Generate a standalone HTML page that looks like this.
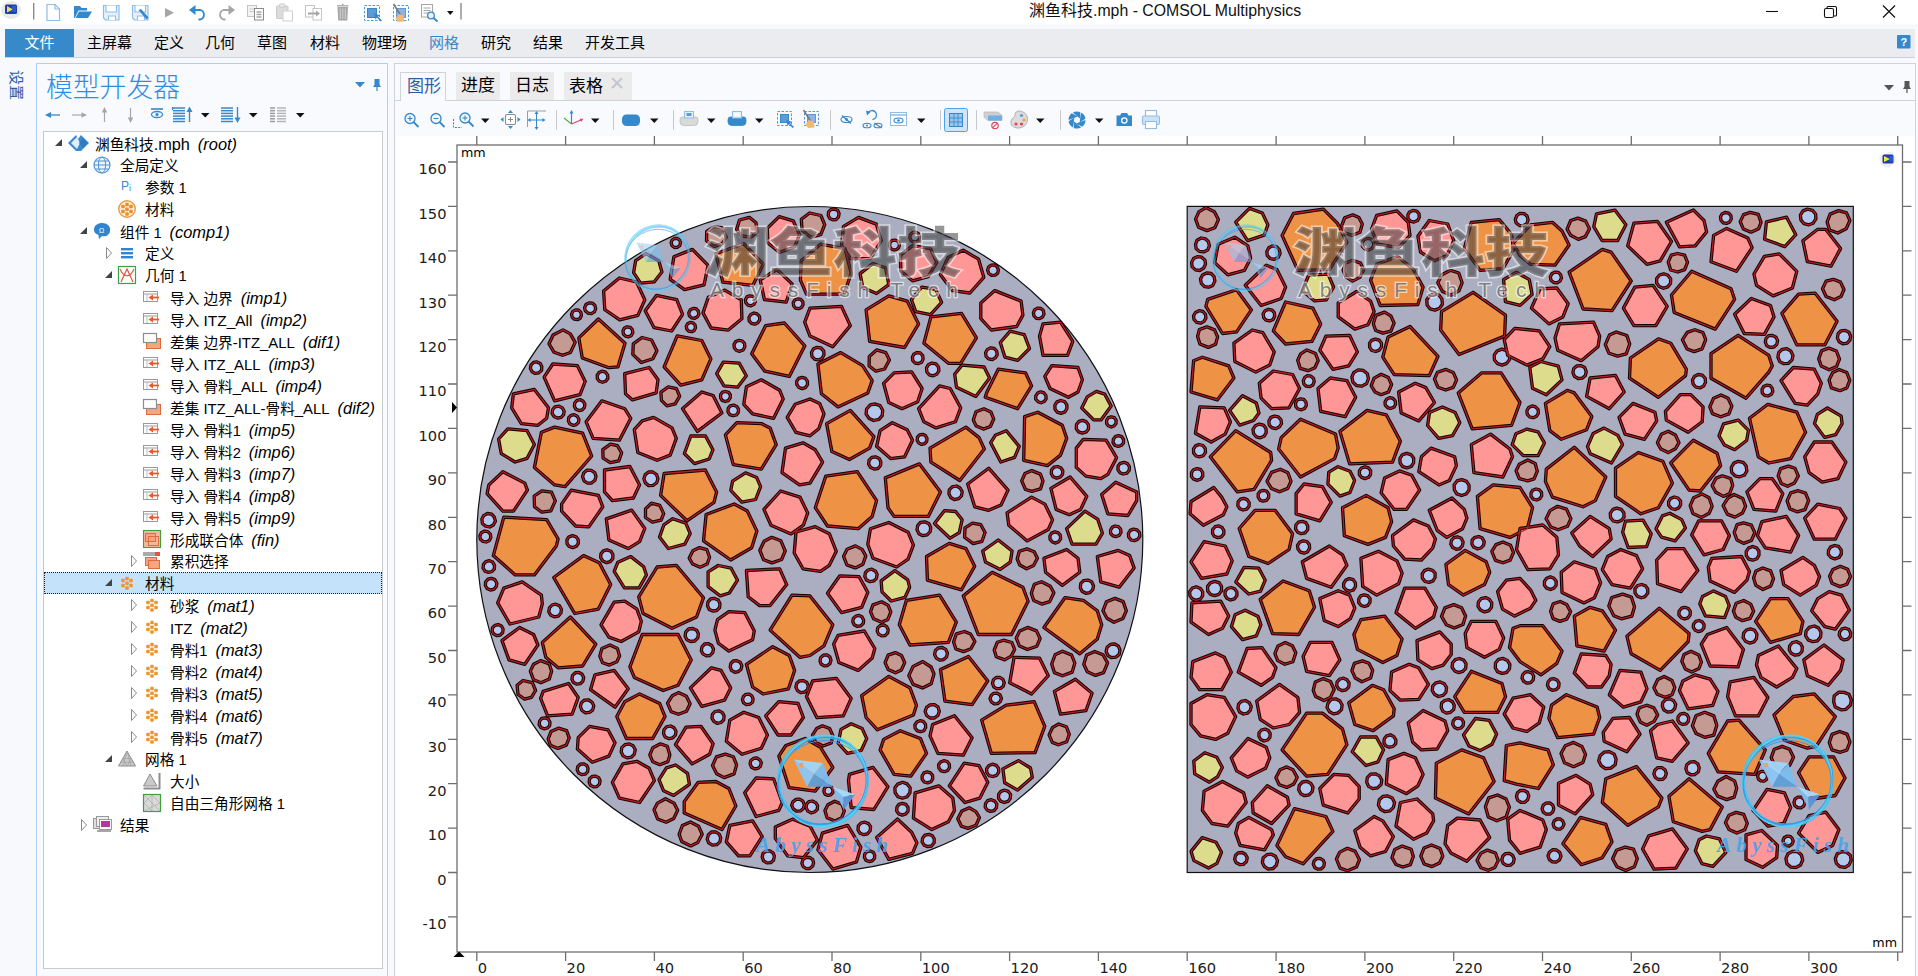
<!DOCTYPE html><html lang="zh"><head><meta charset="utf-8"><title>渊鱼科技.mph - COMSOL Multiphysics</title><style>
*{box-sizing:border-box;margin:0;padding:0}
html,body{width:1918px;height:976px;overflow:hidden;background:#f8f9fd;}
body{position:relative;font-family:"Liberation Sans","Noto Sans CJK SC",sans-serif;font-size:14.67px;color:#000;}
.abs{position:absolute}
#titlebar{position:absolute;left:0;top:0;width:1918px;height:24px;background:#fff}
#title{position:absolute;left:1029px;top:0px;font-size:16px;line-height:22px;white-space:nowrap;color:#111}
#menubar{position:absolute;left:5px;top:29px;width:1910px;height:29px;background:#ebecef;border-bottom:1px solid #cfd0d3}
#file{position:absolute;left:0;top:0;width:69px;height:28px;background:#368ac9;color:#fff;text-align:center;line-height:28px;font-size:15px}
.mi{position:absolute;top:0;line-height:27px;font-size:15px;white-space:nowrap}
#side{position:absolute;left:4px;top:66px;width:24px;height:40px;color:#2b5ea8}
#mb{position:absolute;left:36px;top:63px;width:352px;height:920px;border:1px solid #a9d1f5;background:#f9fafe}
#mbtitle{position:absolute;left:9px;top:6.500px;font-size:26.8px;line-height:34px;font-weight:300;color:#2a8ee6;white-space:nowrap;letter-spacing:0px}
#tree{position:absolute;left:6px;top:67px;width:340px;height:838px;border:1px solid #c9cacc;background:#fff}
.row{position:absolute;left:0;height:22px;line-height:21px;white-space:nowrap;font-size:14.67px}
.row i{font-style:italic;margin-left:8px;font-size:16.400px}
.lt{font-size:15.500px}.lu{font-size:14.900px}.ll{font-size:16.300px}
#sel{position:absolute;left:0px;top:440px;width:338px;height:22px;background:#c4e3fb;border:1px dotted #222}
#gp{position:absolute;left:394px;top:63px;width:1522px;height:920px;border:1px solid #cfd3da;background:#f9fafe}
.tab{position:absolute;top:8px;height:28px;background:#ebebeb;font-size:17px;line-height:28px;padding-left:5px;white-space:nowrap}
#tabline{position:absolute;left:0;top:36px;width:1520px;height:1px;background:#cfd3da}
#canvas{position:absolute;left:1px;top:72px;width:1519px;height:842px;background:#fff}
svg{position:absolute;left:0;top:0;overflow:visible}
svg text{font-family:"DejaVu Sans","Liberation Sans",sans-serif}
</style></head><body><div id="titlebar"><div id="title">渊鱼科技<span style="font-size:15.850px">.mph - COMSOL Multiphysics</span></div></div><div id="menubar"><div id="file">文件</div><div class="mi" style="left:82px;">主屏幕</div><div class="mi" style="left:149px;">定义</div><div class="mi" style="left:200px;">几何</div><div class="mi" style="left:252px;">草图</div><div class="mi" style="left:305px;">材料</div><div class="mi" style="left:357px;">物理场</div><div class="mi" style="left:424px;color:#3a87c8;">网格</div><div class="mi" style="left:476px;">研究</div><div class="mi" style="left:528px;">结果</div><div class="mi" style="left:580px;">开发工具</div></div><div id="side"><div style="position:absolute;left:-8px;top:9px;width:40px;height:20px;transform:rotate(90deg);font-size:15px;line-height:20px;white-space:nowrap;text-align:center">设置</div></div><div id="mb"><div id="mbtitle">模型开发器</div><div id="tree"><div id="sel"></div><div class="row" id="r0" style="top:1.5px;left:51px">渊鱼科技<span class="ll">.mph</span><i>(root)</i></div><div class="row" id="r1" style="top:23.5px;left:76px">全局定义</div><div class="row" id="r2" style="top:45.5px;left:101px">参数 1</div><div class="row" id="r3" style="top:67.5px;left:101px">材料</div><div class="row" id="r4" style="top:89.5px;left:76px">组件 1<i>(comp1)</i></div><div class="row" id="r5" style="top:111.5px;left:101px">定义</div><div class="row" id="r6" style="top:133.5px;left:101px">几何 1</div><div class="row" id="r7" style="top:155.5px;left:126px">导入 边界<i>(imp1)</i></div><div class="row" id="r8" style="top:177.5px;left:126px">导入 <span class="lt">ITZ_All</span><i>(imp2)</i></div><div class="row" id="r9" style="top:199.5px;left:126px">差集 边界<span class="lu">-ITZ_ALL</span><i>(dif1)</i></div><div class="row" id="r10" style="top:221.5px;left:126px">导入 <span class="lu">ITZ_ALL</span><i>(imp3)</i></div><div class="row" id="r11" style="top:243.5px;left:126px">导入 骨料<span class="lu">_ALL</span><i>(imp4)</i></div><div class="row" id="r12" style="top:265.5px;left:126px">差集 <span class="lu">ITZ_ALL-</span>骨料<span class="lu">_ALL</span><i>(dif2)</i></div><div class="row" id="r13" style="top:287.5px;left:126px">导入 骨料1<i>(imp5)</i></div><div class="row" id="r14" style="top:309.5px;left:126px">导入 骨料2<i>(imp6)</i></div><div class="row" id="r15" style="top:331.5px;left:126px">导入 骨料3<i>(imp7)</i></div><div class="row" id="r16" style="top:353.5px;left:126px">导入 骨料4<i>(imp8)</i></div><div class="row" id="r17" style="top:375.5px;left:126px">导入 骨料5<i>(imp9)</i></div><div class="row" id="r18" style="top:397.5px;left:126px">形成联合体<i>(fin)</i></div><div class="row" id="r19" style="top:419.5px;left:126px">累积选择</div><div class="row" id="r20" style="top:441.5px;left:101px">材料</div><div class="row" id="r21" style="top:463.5px;left:126px">砂浆<i>(mat1)</i></div><div class="row" id="r22" style="top:485.5px;left:126px"><span class="lu">ITZ</span><i>(mat2)</i></div><div class="row" id="r23" style="top:507.5px;left:126px">骨料1<i>(mat3)</i></div><div class="row" id="r24" style="top:529.5px;left:126px">骨料2<i>(mat4)</i></div><div class="row" id="r25" style="top:551.5px;left:126px">骨料3<i>(mat5)</i></div><div class="row" id="r26" style="top:573.5px;left:126px">骨料4<i>(mat6)</i></div><div class="row" id="r27" style="top:595.5px;left:126px">骨料5<i>(mat7)</i></div><div class="row" id="r28" style="top:617.5px;left:101px">网格 1</div><div class="row" id="r29" style="top:639.5px;left:126px">大小</div><div class="row" id="r30" style="top:661.5px;left:126px">自由三角形网格 1</div><div class="row" id="r31" style="top:683.5px;left:76px">结果</div><svg width="338" height="836"><g transform="translate(24,2)"><polygon points="0,9 8,1 13,1 21,9 13,17 8,17" fill="#3a8ad0"/><polygon points="8,1 13,1 10,5" fill="#fff"/><polygon points="3,9 9,3 12,9 9,15" fill="#fff" opacity=".85"/><polygon points="11,9 15,4 20,9 15,14" fill="#2f7cc4"/></g><polygon points="18,7 18,14 11,14" fill="#444"/><g transform="translate(49,24)"><circle cx="9" cy="9" r="8" fill="#eef5fc" stroke="#4f94d4" stroke-width="1.2"/><ellipse cx="9" cy="9" rx="3.6" ry="8" fill="none" stroke="#4f94d4" stroke-width="1"/><path d="M1 9H17M2.5 5H15.5M2.5 13H15.5" stroke="#4f94d4" stroke-width="1" fill="none"/></g><polygon points="43,29 43,36 36,36" fill="#444"/><text x="77" y="58" font-size="12" fill="#3a8ad0" style="font-family:'Liberation Sans',sans-serif">P</text><text x="85" y="59" font-size="9" fill="#3a8ad0" style="font-family:'Liberation Sans',sans-serif">i</text><g transform="translate(74,68)"><circle cx="9" cy="9" r="8.3" fill="#fdf1e2" stroke="#eb9a3c" stroke-width="1.4"/><rect x="3.2" y="4.7" width="3.600" height="3.600" rx="1" fill="#e8902c"/><rect x="7.2" y="2.7" width="3.600" height="3.600" rx="1" fill="#e8902c"/><rect x="11.2" y="4.7" width="3.600" height="3.600" rx="1" fill="#e8902c"/><rect x="3.2" y="9.7" width="3.600" height="3.600" rx="1" fill="#e8902c"/><rect x="7.2" y="7.4" width="3.600" height="3.600" rx="1" fill="#e8902c"/><rect x="11.2" y="9.7" width="3.600" height="3.600" rx="1" fill="#e8902c"/><rect x="7.2" y="12.2" width="3.600" height="3.600" rx="1" fill="#e8902c"/></g><g transform="translate(49,90)"><path d="M1 8C1 3 5 1 9 1C14 1 18 4 17 9C16.500 13 13 15 9 14L6 17L5.500 13C2.500 12 1 10 1 8Z" fill="#2f86cf"/><text x="6" y="11" font-size="7" fill="#fff" style="font-family:'Liberation Sans',sans-serif">Ω</text></g><polygon points="43,95 43,102 36,102" fill="#444"/><g transform="translate(74,112)"><rect x="3" y="4" width="12" height="2.400" fill="#2f86cf"/><rect x="3" y="8" width="12" height="2.400" fill="#2f86cf"/><rect x="3" y="12" width="12" height="2.400" fill="#2f86cf"/></g><polygon points="62.5,115.5 67.5,121 62.5,126.5" fill="#fff" stroke="#8a8a8a" stroke-width="1"/><g transform="translate(74,134)"><rect x="0.500" y="0.500" width="17" height="17" fill="#fff" stroke="#3fa03f" stroke-width="1.2"/><path d="M3 16L9 3L15 16M2 3C6 12 12 12 16 3" fill="none" stroke="#e0573a" stroke-width="1.2"/></g><polygon points="68,139 68,146 61,146" fill="#444"/><g transform="translate(99,156)"><rect x="0.500" y="3.500" width="14" height="10" fill="#fff" stroke="#9a9a9a" stroke-width="1"/><path d="M1 6H14" stroke="#9a9a9a" stroke-width="1"/><path d="M4 6V13" stroke="#bbb" stroke-width="1"/><path d="M16 9.500H8" stroke="#e8592b" stroke-width="1.800"/><polygon points="5.500,9.500 10,6.500 10,12.500" fill="#e8592b"/></g><g transform="translate(99,178)"><rect x="0.500" y="3.500" width="14" height="10" fill="#fff" stroke="#9a9a9a" stroke-width="1"/><path d="M1 6H14" stroke="#9a9a9a" stroke-width="1"/><path d="M4 6V13" stroke="#bbb" stroke-width="1"/><path d="M16 9.500H8" stroke="#e8592b" stroke-width="1.800"/><polygon points="5.500,9.500 10,6.500 10,12.500" fill="#e8592b"/></g><g transform="translate(99,200)"><rect x="3.500" y="6.500" width="14" height="10" fill="#f4a582" stroke="#e06a3c" stroke-width="1"/><rect x="0.500" y="1.500" width="13" height="9" fill="#fff" stroke="#8d8d8d" stroke-width="1.2"/></g><g transform="translate(99,222)"><rect x="0.500" y="3.500" width="14" height="10" fill="#fff" stroke="#9a9a9a" stroke-width="1"/><path d="M1 6H14" stroke="#9a9a9a" stroke-width="1"/><path d="M4 6V13" stroke="#bbb" stroke-width="1"/><path d="M16 9.500H8" stroke="#e8592b" stroke-width="1.800"/><polygon points="5.500,9.500 10,6.500 10,12.500" fill="#e8592b"/></g><g transform="translate(99,244)"><rect x="0.500" y="3.500" width="14" height="10" fill="#fff" stroke="#9a9a9a" stroke-width="1"/><path d="M1 6H14" stroke="#9a9a9a" stroke-width="1"/><path d="M4 6V13" stroke="#bbb" stroke-width="1"/><path d="M16 9.500H8" stroke="#e8592b" stroke-width="1.800"/><polygon points="5.500,9.500 10,6.500 10,12.500" fill="#e8592b"/></g><g transform="translate(99,266)"><rect x="3.500" y="6.500" width="14" height="10" fill="#f4a582" stroke="#e06a3c" stroke-width="1"/><rect x="0.500" y="1.500" width="13" height="9" fill="#fff" stroke="#8d8d8d" stroke-width="1.2"/></g><g transform="translate(99,288)"><rect x="0.500" y="3.500" width="14" height="10" fill="#fff" stroke="#9a9a9a" stroke-width="1"/><path d="M1 6H14" stroke="#9a9a9a" stroke-width="1"/><path d="M4 6V13" stroke="#bbb" stroke-width="1"/><path d="M16 9.500H8" stroke="#e8592b" stroke-width="1.800"/><polygon points="5.500,9.500 10,6.500 10,12.500" fill="#e8592b"/></g><g transform="translate(99,310)"><rect x="0.500" y="3.500" width="14" height="10" fill="#fff" stroke="#9a9a9a" stroke-width="1"/><path d="M1 6H14" stroke="#9a9a9a" stroke-width="1"/><path d="M4 6V13" stroke="#bbb" stroke-width="1"/><path d="M16 9.500H8" stroke="#e8592b" stroke-width="1.800"/><polygon points="5.500,9.500 10,6.500 10,12.500" fill="#e8592b"/></g><g transform="translate(99,332)"><rect x="0.500" y="3.500" width="14" height="10" fill="#fff" stroke="#9a9a9a" stroke-width="1"/><path d="M1 6H14" stroke="#9a9a9a" stroke-width="1"/><path d="M4 6V13" stroke="#bbb" stroke-width="1"/><path d="M16 9.500H8" stroke="#e8592b" stroke-width="1.800"/><polygon points="5.500,9.500 10,6.500 10,12.500" fill="#e8592b"/></g><g transform="translate(99,354)"><rect x="0.500" y="3.500" width="14" height="10" fill="#fff" stroke="#9a9a9a" stroke-width="1"/><path d="M1 6H14" stroke="#9a9a9a" stroke-width="1"/><path d="M4 6V13" stroke="#bbb" stroke-width="1"/><path d="M16 9.500H8" stroke="#e8592b" stroke-width="1.800"/><polygon points="5.500,9.500 10,6.500 10,12.500" fill="#e8592b"/></g><g transform="translate(99,376)"><rect x="0.500" y="3.500" width="14" height="10" fill="#fff" stroke="#9a9a9a" stroke-width="1"/><path d="M1 6H14" stroke="#9a9a9a" stroke-width="1"/><path d="M4 6V13" stroke="#bbb" stroke-width="1"/><path d="M16 9.500H8" stroke="#e8592b" stroke-width="1.800"/><polygon points="5.500,9.500 10,6.500 10,12.500" fill="#e8592b"/></g><g transform="translate(99,398)"><rect x="0.500" y="0.500" width="17" height="17" fill="#f6b79b" stroke="#3fa03f" stroke-width="1.100"/><rect x="2.500" y="3.500" width="10" height="8" fill="#f4a582" stroke="#e06a3c" stroke-width="1"/><rect x="5.500" y="6.500" width="10" height="9" fill="none" stroke="#e06a3c" stroke-width="1"/></g><g transform="translate(99,420)"><rect x="0" y="0" width="17" height="4" fill="#aaa"/><rect x="12" y="0" width="5" height="4" fill="#e0573a"/><rect x="2.500" y="5.500" width="11" height="8" fill="#f4a582" stroke="#e06a3c" stroke-width="1"/><rect x="5.500" y="8.500" width="11" height="8" fill="#f4a582" stroke="#e06a3c" stroke-width="1"/></g><polygon points="87.5,423.5 92.5,429 87.5,434.5" fill="#fff" stroke="#8a8a8a" stroke-width="1"/><g transform="translate(74,442)"><rect x="3.2" y="4.7" width="3.600" height="3.600" rx="1" fill="#eb9632"/><rect x="7.2" y="2.7" width="3.600" height="3.600" rx="1" fill="#eb9632"/><rect x="11.2" y="4.7" width="3.600" height="3.600" rx="1" fill="#eb9632"/><rect x="3.2" y="9.7" width="3.600" height="3.600" rx="1" fill="#eb9632"/><rect x="7.2" y="7.4" width="3.600" height="3.600" rx="1" fill="#eb9632"/><rect x="11.2" y="9.7" width="3.600" height="3.600" rx="1" fill="#eb9632"/><rect x="7.2" y="12.2" width="3.600" height="3.600" rx="1" fill="#eb9632"/></g><polygon points="68,447 68,454 61,454" fill="#444"/><g transform="translate(99,464)"><rect x="3.2" y="4.7" width="3.600" height="3.600" rx="1" fill="#eb9632"/><rect x="7.2" y="2.7" width="3.600" height="3.600" rx="1" fill="#eb9632"/><rect x="11.2" y="4.7" width="3.600" height="3.600" rx="1" fill="#eb9632"/><rect x="3.2" y="9.7" width="3.600" height="3.600" rx="1" fill="#eb9632"/><rect x="7.2" y="7.4" width="3.600" height="3.600" rx="1" fill="#eb9632"/><rect x="11.2" y="9.7" width="3.600" height="3.600" rx="1" fill="#eb9632"/><rect x="7.2" y="12.2" width="3.600" height="3.600" rx="1" fill="#eb9632"/></g><polygon points="87.5,467.5 92.5,473 87.5,478.5" fill="#fff" stroke="#8a8a8a" stroke-width="1"/><g transform="translate(99,486)"><rect x="3.2" y="4.7" width="3.600" height="3.600" rx="1" fill="#eb9632"/><rect x="7.2" y="2.7" width="3.600" height="3.600" rx="1" fill="#eb9632"/><rect x="11.2" y="4.7" width="3.600" height="3.600" rx="1" fill="#eb9632"/><rect x="3.2" y="9.7" width="3.600" height="3.600" rx="1" fill="#eb9632"/><rect x="7.2" y="7.4" width="3.600" height="3.600" rx="1" fill="#eb9632"/><rect x="11.2" y="9.7" width="3.600" height="3.600" rx="1" fill="#eb9632"/><rect x="7.2" y="12.2" width="3.600" height="3.600" rx="1" fill="#eb9632"/></g><polygon points="87.5,489.5 92.5,495 87.5,500.5" fill="#fff" stroke="#8a8a8a" stroke-width="1"/><g transform="translate(99,508)"><rect x="3.2" y="4.7" width="3.600" height="3.600" rx="1" fill="#eb9632"/><rect x="7.2" y="2.7" width="3.600" height="3.600" rx="1" fill="#eb9632"/><rect x="11.2" y="4.7" width="3.600" height="3.600" rx="1" fill="#eb9632"/><rect x="3.2" y="9.7" width="3.600" height="3.600" rx="1" fill="#eb9632"/><rect x="7.2" y="7.4" width="3.600" height="3.600" rx="1" fill="#eb9632"/><rect x="11.2" y="9.7" width="3.600" height="3.600" rx="1" fill="#eb9632"/><rect x="7.2" y="12.2" width="3.600" height="3.600" rx="1" fill="#eb9632"/></g><polygon points="87.5,511.5 92.5,517 87.5,522.5" fill="#fff" stroke="#8a8a8a" stroke-width="1"/><g transform="translate(99,530)"><rect x="3.2" y="4.7" width="3.600" height="3.600" rx="1" fill="#eb9632"/><rect x="7.2" y="2.7" width="3.600" height="3.600" rx="1" fill="#eb9632"/><rect x="11.2" y="4.7" width="3.600" height="3.600" rx="1" fill="#eb9632"/><rect x="3.2" y="9.7" width="3.600" height="3.600" rx="1" fill="#eb9632"/><rect x="7.2" y="7.4" width="3.600" height="3.600" rx="1" fill="#eb9632"/><rect x="11.2" y="9.7" width="3.600" height="3.600" rx="1" fill="#eb9632"/><rect x="7.2" y="12.2" width="3.600" height="3.600" rx="1" fill="#eb9632"/></g><polygon points="87.5,533.5 92.5,539 87.5,544.5" fill="#fff" stroke="#8a8a8a" stroke-width="1"/><g transform="translate(99,552)"><rect x="3.2" y="4.7" width="3.600" height="3.600" rx="1" fill="#eb9632"/><rect x="7.2" y="2.7" width="3.600" height="3.600" rx="1" fill="#eb9632"/><rect x="11.2" y="4.7" width="3.600" height="3.600" rx="1" fill="#eb9632"/><rect x="3.2" y="9.7" width="3.600" height="3.600" rx="1" fill="#eb9632"/><rect x="7.2" y="7.4" width="3.600" height="3.600" rx="1" fill="#eb9632"/><rect x="11.2" y="9.7" width="3.600" height="3.600" rx="1" fill="#eb9632"/><rect x="7.2" y="12.2" width="3.600" height="3.600" rx="1" fill="#eb9632"/></g><polygon points="87.5,555.5 92.5,561 87.5,566.5" fill="#fff" stroke="#8a8a8a" stroke-width="1"/><g transform="translate(99,574)"><rect x="3.2" y="4.7" width="3.600" height="3.600" rx="1" fill="#eb9632"/><rect x="7.2" y="2.7" width="3.600" height="3.600" rx="1" fill="#eb9632"/><rect x="11.2" y="4.7" width="3.600" height="3.600" rx="1" fill="#eb9632"/><rect x="3.2" y="9.7" width="3.600" height="3.600" rx="1" fill="#eb9632"/><rect x="7.2" y="7.4" width="3.600" height="3.600" rx="1" fill="#eb9632"/><rect x="11.2" y="9.7" width="3.600" height="3.600" rx="1" fill="#eb9632"/><rect x="7.2" y="12.2" width="3.600" height="3.600" rx="1" fill="#eb9632"/></g><polygon points="87.5,577.5 92.5,583 87.5,588.5" fill="#fff" stroke="#8a8a8a" stroke-width="1"/><g transform="translate(99,596)"><rect x="3.2" y="4.7" width="3.600" height="3.600" rx="1" fill="#eb9632"/><rect x="7.2" y="2.7" width="3.600" height="3.600" rx="1" fill="#eb9632"/><rect x="11.2" y="4.7" width="3.600" height="3.600" rx="1" fill="#eb9632"/><rect x="3.2" y="9.7" width="3.600" height="3.600" rx="1" fill="#eb9632"/><rect x="7.2" y="7.4" width="3.600" height="3.600" rx="1" fill="#eb9632"/><rect x="11.2" y="9.7" width="3.600" height="3.600" rx="1" fill="#eb9632"/><rect x="7.2" y="12.2" width="3.600" height="3.600" rx="1" fill="#eb9632"/></g><polygon points="87.5,599.5 92.5,605 87.5,610.5" fill="#fff" stroke="#8a8a8a" stroke-width="1"/><g transform="translate(74,618)"><polygon points="9,1 17.500,16 0.500,16" fill="#c9c9c9" stroke="#8e8e8e" stroke-width="1"/><path d="M4.700 8.500H13.300M2.600 12.200H15.400M9 1L5 16M9 1L13 16M4.700 8.500L9 16L13.300 8.500" stroke="#9b9b9b" stroke-width=".6" fill="none"/></g><polygon points="68,623 68,630 61,630" fill="#444"/><g transform="translate(99,640)"><polygon points="7,2 14,14 0.500,14" fill="#c9c9c9" stroke="#8e8e8e" stroke-width="1"/><path d="M16.500 1V16.500H0.500" stroke="#8e8e8e" stroke-width="2" fill="none"/></g><g transform="translate(99,662)"><rect x="0.500" y="0.500" width="17" height="17" fill="#d9d9d9" stroke="#3fa03f" stroke-width="1.200"/><path d="M1 1L17 17M1 9L9 17M9 1L17 9M1 9L9 1L9 17M1 17L17 9" stroke="#aaa" stroke-width=".7" fill="none"/></g><g transform="translate(49,684)"><rect x="0.500" y="2.500" width="12" height="10" fill="#ddd" stroke="#999"/><rect x="3.500" y="0.500" width="12" height="10" fill="#eee" stroke="#999"/><rect x="6.500" y="3.500" width="12" height="10" fill="#fff" stroke="#999"/><rect x="8" y="5" width="9" height="6" fill="#b5379c"/><path d="M4 15H18" stroke="#888" stroke-width="1.500"/></g><polygon points="37.5,687.5 42.5,693 37.5,698.5" fill="#fff" stroke="#8a8a8a" stroke-width="1"/></svg></div></div><div id="gp"><div id="tabline"></div><div class="tab" style="left:5px;width:46px;height:29px;background:#f9fafe;border:1px solid #cfd3da;border-bottom:none;color:#2b5ea8;line-height:27px;padding-left:6px">图形</div><div class="tab" style="left:61px;width:44px">进度</div><div class="tab" style="left:115px;width:44px">日志</div><div class="tab" style="left:169px;width:68px">表格<span style="color:#c3c7cf;font-size:19px;margin-left:6px;position:relative;top:-2px">✕</span></div><div id="canvas"></div></div><svg width="1918" height="976" viewBox="0 0 1918 976"><circle cx="809.8" cy="539.5" r="333.0" fill="#aaaec0" stroke="#111" stroke-width="1.200"/><rect x="1187.2" y="206.4" width="666.1" height="666.1" fill="#aaaec0" stroke="#111" stroke-width="1.200"/><g stroke="#100303" stroke-width="3.300" stroke-linejoin="round"><polygon points="680.5,242.9 679.7,245.7 677.2,247.3 674.5,247.5 672.1,245.7 671.1,242.8 672.1,240.1 674.4,238.5 677.3,238.4 679.7,240.1" fill="#b4c8ec"/><polygon points="661.9,272.0 654.1,281.9 640.6,283.1 633.6,272.7 635.6,260.7 646.0,253.6 658.8,260.9" fill="#dcdc8c"/><polygon points="692.4,249.4 708.1,265.4 704.1,284.9 684.5,289.7 670.2,279.3 673.9,256.8" fill="#ff9797"/><polygon points="644.8,299.8 637.9,315.3 619.7,319.8 604.8,309.6 603.6,291.0 619.4,278.0 636.5,282.0" fill="#ff9797"/><polygon points="682.6,314.3 671.6,331.0 654.1,327.7 645.2,310.7 656.6,295.3 676.7,299.6" fill="#ff9797"/><polygon points="741.9,318.8 728.3,330.1 711.1,328.0 703.0,312.9 708.3,297.3 724.8,290.1 741.3,299.8" fill="#ff9797"/><polygon points="586.0,304.5 588.9,302.8 592.3,303.1 594.8,305.3 595.7,308.6 594.4,311.8 591.4,313.6 587.9,313.1 585.2,310.8 584.6,307.7" fill="#b4c8ec"/><polygon points="575.7,309.9 578.7,310.2 580.9,312.4 581.4,315.5 580.1,318.3 577.5,319.7 574.4,319.2 572.2,317.2 571.5,314.3 572.8,311.4" fill="#b4c8ec"/><polygon points="696.1,308.7 698.3,311.2 698.9,314.2 697.4,316.8 694.7,318.3 691.6,317.9 689.3,315.7 688.8,312.7 690.3,309.7 693.1,308.5" fill="#b4c8ec"/><polygon points="695.0,324.8 695.5,327.7 694.3,330.4 691.6,331.7 688.7,331.2 686.8,329.1 686.3,326.2 687.6,323.8 690.2,322.4 693.0,322.8" fill="#b4c8ec"/><polygon points="632.8,332.6 631.3,335.4 628.5,336.8 625.5,336.2 623.4,334.0 623.0,330.8 624.3,328.2 627.1,326.8 630.3,327.3 632.3,329.6" fill="#b4c8ec"/><polygon points="753.9,304.4 751.0,305.9 748.0,305.2 745.9,302.9 745.4,299.7 747.0,296.9 749.7,295.8 753.0,296.4 755.0,298.5 755.3,301.8" fill="#b4c8ec"/><polygon points="798.7,308.7 795.5,308.1 793.6,305.8 793.2,302.7 794.8,300.0 797.6,298.8 800.7,299.3 802.8,301.6 803.1,304.7 801.5,307.4" fill="#b4c8ec"/><polygon points="751.5,323.3 749.2,320.8 748.9,317.5 750.8,314.4 753.9,313.0 757.0,313.9 759.5,316.4 759.8,319.9 757.8,322.8 754.8,324.2" fill="#b4c8ec"/><polygon points="734.3,347.8 734.0,344.3 735.8,341.5 739.0,340.3 742.3,341.0 744.6,343.6 744.8,347.0 743.1,350.0 739.8,351.3 736.5,350.5" fill="#b4c8ec"/><polygon points="575.2,342.4 570.4,352.5 562.5,355.3 554.1,352.3 549.0,343.8 553.1,335.0 563.0,329.9 570.3,333.9" fill="#c59a92"/><polygon points="656.9,350.7 652.9,358.7 641.3,362.5 632.8,354.4 633.3,343.9 642.0,337.5 651.6,340.0" fill="#c59a92"/><polygon points="598.4,319.0 625.0,343.2 618.0,366.8 608.9,367.7 582.3,358.0 578.8,337.9" fill="#ee9345"/><polygon points="677.2,335.8 701.8,340.5 710.9,358.9 701.8,379.9 680.7,385.2 664.1,366.8" fill="#ee9345"/><polygon points="765.7,325.6 784.4,323.0 804.8,345.8 789.3,376.4 764.8,371.2 751.7,353.7" fill="#ee9345"/><polygon points="726.3,237.1 722.5,243.4 713.9,246.6 706.5,240.7 706.7,231.4 714.2,226.7 722.6,228.0" fill="#c59a92"/><polygon points="757.4,231.9 751.1,237.1 741.9,236.0 736.6,229.4 739.5,220.0 749.4,217.3 756.0,222.7" fill="#c59a92"/><polygon points="799.6,234.9 794.5,247.0 779.5,252.4 768.0,243.0 767.2,228.4 779.2,216.6 793.2,220.8" fill="#ff9797"/><polygon points="715.8,253.8 743.8,243.6 763.4,264.3 752.9,285.3 722.8,282.2" fill="#ee9345"/><polygon points="776.9,269.5 792.1,283.9 786.2,302.2 764.4,299.6 760.2,279.8" fill="#ff9797"/><polygon points="746.3,375.7 737.6,387.2 724.0,385.9 716.7,373.6 723.3,362.1 739.2,363.1" fill="#dcdc8c"/><polygon points="533.5,362.4 536.9,361.9 540.3,363.5 541.8,366.7 541.6,370.3 538.8,372.9 535.3,373.4 532.1,371.8 530.4,368.6 530.9,365.1" fill="#b4c8ec"/><polygon points="834.5,209.0 837.7,210.4 839.1,213.5 838.5,216.9 836.2,219.5 832.9,219.8 829.7,218.4 828.2,215.1 828.6,211.9 831.1,209.3" fill="#b4c8ec"/><polygon points="824.7,224.6 820.9,234.4 810.9,237.3 802.1,230.3 801.3,219.3 809.6,213.0 820.9,215.5" fill="#c59a92"/><polygon points="881.3,240.7 870.4,258.6 850.7,258.7 841.5,245.5 843.5,226.3 858.5,217.4 876.3,224.1" fill="#ff9797"/><polygon points="898.8,247.5 896.6,249.6 893.4,249.9 890.7,248.5 889.5,245.6 890.1,242.5 892.4,240.3 895.5,240.1 898.2,241.6 899.4,244.6" fill="#b4c8ec"/><polygon points="916.7,241.8 913.7,242.0 911.0,240.5 909.8,237.5 910.5,234.5 912.8,232.6 915.9,232.2 918.6,233.8 919.7,236.7 919.0,239.7" fill="#b4c8ec"/><polygon points="936.8,262.2 928.2,276.6 912.5,280.8 900.8,271.1 900.5,255.1 912.5,245.6 930.5,248.7" fill="#ff9797"/><polygon points="983.8,277.3 969.9,293.0 952.6,290.7 940.4,274.7 948.0,257.5 963.2,250.2 978.6,259.2" fill="#ff9797"/><polygon points="987.6,270.2 988.5,267.1 991.3,265.1 994.6,264.9 997.2,266.8 998.4,269.8 997.7,273.1 995.0,275.2 991.6,275.3 988.8,273.4" fill="#b4c8ec"/><polygon points="888.8,284.6 876.5,293.5 862.8,287.6 860.1,273.6 872.8,263.6 885.5,267.7" fill="#dcdc8c"/><polygon points="941.6,302.3 930.5,314.6 915.7,311.6 911.4,299.6 921.7,287.2 935.5,289.4" fill="#dcdc8c"/><polygon points="801.2,260.8 820.5,244.2 845.0,248.6 851.2,273.1 844.2,294.1 806.5,294.1 800.4,280.1" fill="#ee9345"/><polygon points="810.0,308.1 841.5,306.4 850.3,325.6 832.8,346.7 810.0,336.1 804.7,322.1" fill="#ff9797"/><polygon points="888.8,295.9 907.2,301.1 918.6,323.9 904.6,347.5 869.6,341.4 866.1,309.9" fill="#ee9345"/><polygon points="930.9,316.9 961.5,313.4 976.4,337.9 960.7,363.3 948.4,363.3 923.9,343.2" fill="#ee9345"/><polygon points="994.8,290.6 1021.1,301.1 1022.9,315.1 1016.7,326.5 991.3,330.0 980.8,318.6 980.8,302.9" fill="#ff9797"/><polygon points="1036.4,318.3 1034.0,315.9 1033.4,312.9 1034.6,309.9 1037.5,308.1 1040.9,308.5 1043.3,310.6 1044.0,314.0 1042.5,317.0 1039.6,318.6" fill="#b4c8ec"/><polygon points="1029.5,348.5 1017.7,360.3 1004.9,357.1 1000.3,342.5 1010.2,331.2 1024.2,334.6" fill="#dcdc8c"/><polygon points="1043.0,323.9 1060.5,322.1 1072.8,341.4 1067.5,355.4 1043.0,355.4 1039.5,336.1" fill="#ff9797"/><polygon points="987.3,349.6 990.4,347.9 994.1,348.4 996.6,350.9 997.2,354.6 995.5,357.7 992.4,359.6 988.6,358.8 986.1,356.3 985.6,352.8" fill="#b4c8ec"/><polygon points="917.0,352.6 920.3,353.0 922.7,355.7 923.1,359.1 921.6,362.2 918.6,363.6 915.0,363.0 912.8,360.6 912.4,357.1 913.8,354.2" fill="#b4c8ec"/><polygon points="820.9,348.0 823.7,351.0 824.0,354.8 822.1,358.3 818.6,359.9 814.8,359.4 812.0,356.3 811.5,352.5 813.5,348.8 817.1,347.4" fill="#b4c8ec"/><polygon points="889.4,360.0 884.6,369.0 875.9,371.2 869.1,366.0 869.3,356.4 876.6,349.9 885.8,352.6" fill="#c59a92"/><polygon points="938.9,370.9 936.6,374.3 933.1,375.8 929.2,374.8 926.9,372.0 926.5,367.9 928.4,364.7 931.9,363.1 935.9,363.9 938.5,367.0" fill="#b4c8ec"/><polygon points="544.1,377.1 552.8,364.0 577.4,365.7 585.2,381.5 580.0,394.7 554.6,400.8" fill="#ff9797"/><polygon points="602.6,382.3 599.4,381.3 597.4,378.8 597.2,375.3 599.1,372.5 602.0,371.2 605.4,372.1 607.6,374.9 607.9,378.2 606.0,381.0" fill="#b4c8ec"/><polygon points="624.7,373.6 649.2,367.5 658.0,379.8 656.2,392.9 632.5,399.9 625.5,393.8" fill="#ff9797"/><polygon points="679.7,396.1 675.2,403.9 667.0,405.9 661.4,400.4 660.9,392.1 668.4,386.9 676.4,388.6" fill="#c59a92"/><polygon points="796.7,381.2 798.7,378.4 802.1,377.4 805.4,378.4 807.4,381.3 807.5,384.6 805.4,387.6 802.1,388.6 799.0,387.5 796.8,384.6" fill="#b4c8ec"/><polygon points="682.5,408.7 701.8,392.0 713.1,395.5 721.9,413.0 697.4,431.4" fill="#ff9797"/><polygon points="725.5,391.5 728.5,392.3 730.4,395.0 730.1,398.0 728.2,400.7 725.2,401.5 722.3,400.5 720.6,397.8 720.7,394.6 722.6,392.1" fill="#b4c8ec"/><polygon points="736.7,406.4 738.5,409.1 738.3,412.4 736.3,415.0 732.9,415.7 729.8,414.6 728.0,411.8 728.2,408.4 730.3,405.8 733.6,405.1" fill="#b4c8ec"/><polygon points="746.4,386.8 761.3,379.8 779.7,390.3 783.2,399.0 773.6,418.3 752.6,413.9 743.8,404.3" fill="#ff9797"/><polygon points="513.4,393.8 534.4,389.4 548.5,407.8 546.7,418.3 537.9,425.3 521.3,423.6 511.7,407.8" fill="#ff9797"/><polygon points="582.4,409.8 579.0,410.6 575.9,409.2 574.4,406.3 574.7,403.0 577.0,400.4 580.3,399.7 583.2,401.3 584.9,404.1 584.4,407.4" fill="#b4c8ec"/><polygon points="557.4,418.1 554.1,416.6 552.1,413.4 552.7,409.5 555.0,406.8 559.0,406.2 562.3,407.9 564.1,411.1 563.6,414.7 561.1,417.3" fill="#b4c8ec"/><polygon points="569.8,423.8 568.4,421.1 568.7,417.6 571.0,415.3 574.2,414.7 577.2,416.2 578.9,419.2 578.5,422.5 575.9,424.8 572.9,425.3" fill="#b4c8ec"/><polygon points="601.9,400.8 624.7,408.7 630.8,418.3 619.4,440.2 593.1,438.4 586.1,421.8" fill="#ff9797"/><polygon points="653.6,417.4 672.0,427.9 676.3,438.4 670.2,455.1 657.1,460.3 637.8,452.5 634.3,429.7 642.2,420.9" fill="#ff9797"/><polygon points="690.8,436.0 705.5,436.0 712.9,449.8 709.2,459.0 694.5,463.6 684.4,453.5" fill="#dcdc8c"/><polygon points="736.8,422.7 761.3,423.6 770.1,427.9 776.2,444.6 761.3,469.1 733.3,464.7 725.4,434.9" fill="#ee9345"/><polygon points="507.8,428.9 527.1,430.7 534.4,444.5 527.1,458.3 515.1,462.0 501.3,453.7 498.6,439.0" fill="#dcdc8c"/><polygon points="554.6,427.1 582.6,433.2 591.7,456.0 565.1,486.6 554.6,484.9 534.4,467.4 541.4,432.3" fill="#ee9345"/><polygon points="621.7,452.8 618.8,460.9 610.3,462.7 603.1,458.1 602.8,449.7 610.5,444.1 617.4,445.7" fill="#c59a92"/><polygon points="591.5,483.1 587.3,483.0 584.0,480.8 582.6,476.8 583.7,472.9 587.1,470.1 591.2,470.3 594.7,472.6 596.0,476.4 594.9,480.3" fill="#b4c8ec"/><polygon points="648.7,485.6 645.4,482.9 643.9,478.8 645.3,474.6 648.6,472.0 652.8,472.0 656.5,474.5 657.9,478.8 656.7,482.7 653.3,485.3" fill="#b4c8ec"/><polygon points="604.5,470.0 629.9,466.5 639.6,484.9 633.4,498.0 612.4,500.6 604.5,491.9" fill="#ff9797"/><polygon points="664.1,473.5 705.3,470.0 716.6,491.9 714.0,502.4 686.9,520.8 660.6,495.4" fill="#ee9345"/><polygon points="745.5,472.8 756.6,477.4 760.6,486.6 755.6,499.5 741.8,502.2 730.8,490.3 732.6,481.1" fill="#dcdc8c"/><polygon points="502.9,471.7 524.8,483.1 527.4,490.1 513.4,511.2 502.9,511.2 487.1,493.6 488.9,484.9" fill="#ff9797"/><polygon points="555.3,500.8 550.9,510.8 541.8,512.2 534.5,506.7 534.2,496.0 541.9,490.8 551.5,492.2" fill="#c59a92"/><polygon points="571.2,490.1 598.4,495.4 602.8,506.8 588.8,526.9 575.6,526.0 561.6,511.2 561.6,504.1" fill="#ff9797"/><polygon points="663.7,513.6 661.1,520.2 652.4,522.1 645.5,517.5 645.5,508.9 651.4,503.2 659.8,505.4" fill="#c59a92"/><polygon points="780.6,491.0 799.9,497.1 807.7,512.9 803.4,525.2 791.1,533.9 771.0,525.2 763.9,509.4" fill="#ff9797"/><polygon points="489.7,527.0 485.7,526.2 482.4,523.4 481.9,519.2 483.7,515.6 487.4,513.5 491.7,514.2 494.3,517.1 495.4,521.1 493.3,525.0" fill="#b4c8ec"/><polygon points="483.0,541.4 480.4,539.3 479.9,535.8 481.4,532.7 484.6,531.1 487.8,531.6 490.4,534.1 490.8,537.5 489.3,540.6 486.2,542.0" fill="#b4c8ec"/><polygon points="817.9,364.0 840.7,352.6 862.6,365.7 872.2,380.6 867.8,392.9 838.0,406.9 821.4,393.8" fill="#ee9345"/><polygon points="883.6,383.3 894.1,372.8 911.6,371.9 922.1,388.5 917.7,401.7 902.0,408.7 888.8,402.5" fill="#ff9797"/><polygon points="954.7,374.3 962.0,365.1 984.1,367.0 989.6,378.0 975.8,396.4 956.5,387.2" fill="#dcdc8c"/><polygon points="998.3,369.2 1025.5,372.8 1031.6,385.9 1017.6,408.7 985.2,397.3 986.9,392.0" fill="#ee9345"/><polygon points="1044.8,376.3 1051.8,365.7 1078.0,367.5 1082.4,379.8 1078.0,392.0 1068.4,397.3 1050.0,388.5" fill="#ff9797"/><polygon points="1045.9,395.5 1046.1,398.8 1044.2,401.5 1041.1,402.8 1038.1,401.7 1035.7,399.2 1035.8,396.0 1037.7,393.1 1040.6,391.8 1043.9,392.9" fill="#b4c8ec"/><polygon points="1066.9,408.6 1064.9,411.9 1061.0,413.4 1057.3,412.1 1055.0,409.2 1054.9,405.2 1057.0,401.9 1060.7,400.5 1064.6,401.6 1066.8,404.7" fill="#b4c8ec"/><polygon points="1096.4,391.4 1104.7,394.1 1111.2,406.1 1101.0,419.9 1093.7,419.9 1081.7,407.9 1087.2,396.9" fill="#dcdc8c"/><polygon points="1111.4,427.0 1108.3,425.8 1106.6,423.5 1106.6,420.2 1108.4,417.6 1111.3,416.8 1114.4,417.7 1116.1,420.2 1116.0,423.4 1114.2,425.8" fill="#b4c8ec"/><polygon points="1078.7,431.9 1076.3,428.7 1076.5,424.6 1078.9,421.4 1082.6,420.4 1086.1,421.6 1088.4,424.8 1088.5,428.9 1086.2,431.9 1082.4,433.1" fill="#b4c8ec"/><polygon points="1113.0,442.5 1113.4,439.3 1115.3,436.6 1118.4,435.7 1121.7,436.7 1123.5,439.5 1123.5,443.1 1121.2,445.5 1118.2,446.4 1115.0,445.5" fill="#b4c8ec"/><polygon points="1118.1,466.1 1120.3,463.3 1124.0,462.3 1127.4,463.6 1129.4,466.7 1129.2,470.3 1126.9,473.2 1123.2,474.0 1119.9,472.7 1117.9,469.7" fill="#b4c8ec"/><polygon points="1054.0,467.1 1057.4,466.5 1060.8,467.8 1062.8,470.7 1062.5,474.5 1060.1,477.2 1056.6,478.1 1053.2,476.8 1051.3,473.7 1051.5,470.0" fill="#b4c8ec"/><polygon points="875.2,404.0 880.0,405.6 882.7,410.3 882.2,415.6 878.9,419.4 873.6,420.5 869.2,418.5 866.1,414.1 866.6,409.0 870.3,404.8" fill="#b4c8ec"/><polygon points="925.4,435.6 927.0,438.3 926.7,441.4 924.7,443.7 921.7,444.4 918.9,443.1 917.2,440.4 917.5,437.2 919.6,434.9 922.7,434.3" fill="#b4c8ec"/><polygon points="880.8,461.8 880.6,465.5 877.8,468.6 874.1,469.1 870.7,467.6 868.6,464.2 869.1,460.2 871.9,457.4 875.4,456.8 879.2,458.5" fill="#b4c8ec"/><polygon points="961.5,495.8 958.7,498.6 954.3,499.6 950.8,497.5 948.9,493.8 949.3,489.9 952.2,486.9 956.5,486.0 960.1,488.0 962.2,491.7" fill="#b4c8ec"/><polygon points="927.1,534.8 922.8,535.7 919.0,533.7 917.0,529.8 917.7,525.6 920.5,522.3 924.9,521.8 928.9,523.8 930.8,527.6 930.2,531.7" fill="#b4c8ec"/><polygon points="939.6,385.9 950.2,388.5 960.7,407.8 955.4,421.8 936.1,427.9 923.9,421.8 918.6,408.7" fill="#ff9797"/><polygon points="993.7,419.0 990.4,426.5 983.4,429.1 976.2,426.1 973.3,420.0 976.0,411.7 983.9,408.8 990.9,411.9" fill="#c59a92"/><polygon points="787.2,417.4 795.1,404.3 810.0,399.0 819.6,403.4 824.0,413.9 818.8,428.8 810.0,435.8 796.0,432.3" fill="#ff9797"/><polygon points="850.3,410.4 873.9,436.7 869.6,448.1 849.4,459.5 831.9,451.6 826.6,423.6" fill="#ee9345"/><polygon points="892.3,422.7 907.2,429.7 912.5,440.2 904.6,456.8 890.6,458.6 876.6,446.3 880.1,430.6" fill="#ff9797"/><polygon points="965.9,427.1 979.1,437.6 984.3,449.0 959.8,480.5 930.9,462.1 930.0,448.1" fill="#ee9345"/><polygon points="1006.3,430.7 1019.2,446.4 1014.6,457.4 1000.8,462.0 990.7,442.7 995.3,435.3" fill="#dcdc8c"/><polygon points="1024.6,416.6 1037.8,412.2 1062.3,425.3 1066.7,438.4 1060.5,455.1 1047.4,465.6 1023.7,460.3" fill="#ee9345"/><polygon points="1083.3,439.3 1106.1,440.2 1116.6,457.7 1107.8,474.4 1100.8,478.7 1085.9,476.1 1076.3,467.4 1076.3,448.1" fill="#ff9797"/><polygon points="785.5,448.1 803.0,442.8 815.3,449.8 822.6,462.1 810.0,483.1 799.5,484.9 782.0,472.6" fill="#ff9797"/><polygon points="825.8,476.1 857.3,471.7 876.6,500.6 872.2,516.4 858.2,528.7 827.5,526.0 815.3,507.7" fill="#ee9345"/><polygon points="885.3,477.9 919.5,463.9 940.5,491.9 928.3,516.4 894.1,516.4 888.0,507.7" fill="#ee9345"/><polygon points="988.7,468.2 1008.0,490.1 1001.0,505.0 988.7,510.3 974.7,506.8 967.7,484.0" fill="#ff9797"/><polygon points="1043.0,481.1 1040.5,488.9 1031.8,491.3 1025.5,489.5 1021.7,480.8 1024.9,473.6 1031.8,470.6 1040.4,474.1" fill="#c59a92"/><polygon points="1070.2,477.0 1086.8,496.3 1080.7,509.4 1069.3,514.7 1056.1,509.4 1050.9,488.4" fill="#ff9797"/><polygon points="1115.7,482.2 1136.7,491.9 1136.7,500.6 1128.0,515.5 1107.8,513.8 1101.7,494.5" fill="#ff9797"/><polygon points="1031.6,497.1 1044.8,504.1 1052.6,519.9 1048.3,529.5 1027.2,540.9 1008.8,525.2 1007.1,512.9" fill="#ff9797"/><polygon points="944.6,510.6 955.6,511.5 962.1,519.8 959.3,532.7 950.1,538.2 934.5,523.5" fill="#dcdc8c"/><polygon points="985.1,532.5 982.0,541.3 973.2,543.6 964.6,537.2 965.0,527.8 972.5,523.1 980.8,524.7" fill="#c59a92"/><polygon points="1085.0,511.1 1097.8,519.4 1102.4,533.2 1096.0,544.2 1072.1,544.2 1066.6,528.6" fill="#dcdc8c"/><polygon points="1113.0,535.9 1110.7,533.5 1110.5,530.1 1112.2,527.3 1115.1,526.0 1118.3,526.7 1120.6,529.1 1121.0,532.5 1119.4,535.2 1116.3,536.6" fill="#b4c8ec"/><polygon points="1128.7,537.0 1128.4,533.5 1130.3,530.4 1133.5,529.1 1137.0,529.8 1139.5,532.6 1139.9,536.1 1137.9,539.2 1134.5,540.6 1131.1,540.0" fill="#b4c8ec"/><polygon points="1049.9,536.0 1051.6,533.1 1054.8,531.9 1058.3,532.9 1060.4,535.3 1060.6,538.8 1058.7,541.7 1055.6,543.1 1052.4,542.0 1050.1,539.4" fill="#b4c8ec"/><polygon points="503.8,517.1 546.7,519.7 558.1,539.0 556.3,546.0 534.4,574.9 515.2,574.9 493.3,555.6" fill="#ee9345"/><polygon points="572.4,535.6 576.0,536.8 578.1,539.6 578.4,543.2 576.3,546.2 572.9,547.6 569.2,546.5 567.1,543.7 566.9,539.9 568.8,537.0" fill="#b4c8ec"/><polygon points="606.3,518.9 631.7,510.1 644.8,528.5 639.6,541.6 628.2,548.6 608.9,539.9" fill="#ff9797"/><polygon points="672.7,518.7 685.8,523.1 690.2,533.6 684.9,544.1 668.3,548.5 659.5,537.1 663.9,524.8" fill="#dcdc8c"/><polygon points="706.1,514.5 734.2,504.0 747.3,511.0 756.9,531.1 751.7,547.8 730.7,560.0 703.5,540.8" fill="#ee9345"/><polygon points="785.2,551.0 781.6,559.5 772.0,562.9 763.6,559.8 759.8,550.3 764.1,541.2 771.7,537.3 780.9,540.8" fill="#c59a92"/><polygon points="606.6,562.7 602.8,561.0 600.7,557.7 600.9,553.9 603.4,550.9 607.0,549.9 610.9,551.2 612.9,554.5 612.8,558.6 610.2,561.6" fill="#b4c8ec"/><polygon points="485.2,571.3 483.0,568.1 483.5,564.4 485.9,561.6 489.4,560.7 492.6,562.1 494.5,565.4 494.4,568.9 492.0,571.5 488.5,572.4" fill="#b4c8ec"/><polygon points="485.3,585.5 485.6,582.0 488.0,579.1 491.4,578.3 494.8,579.6 496.8,583.0 496.4,586.4 494.0,589.1 490.5,590.1 487.1,588.5" fill="#b4c8ec"/><polygon points="549.4,607.9 552.1,605.0 555.7,604.2 559.5,605.8 561.4,609.2 560.9,613.0 558.2,616.2 554.3,616.8 550.8,615.2 548.8,612.0" fill="#b4c8ec"/><polygon points="495.0,625.4 498.2,624.6 501.4,626.0 503.1,629.0 502.7,632.5 500.2,635.1 497.0,635.7 493.8,634.1 492.1,631.2 492.5,627.8" fill="#b4c8ec"/><polygon points="714.5,598.4 718.2,600.1 720.0,603.7 719.5,607.7 716.6,610.5 712.7,611.0 709.3,609.4 707.5,605.8 707.9,602.1 710.7,598.9" fill="#b4c8ec"/><polygon points="696.6,630.2 698.4,633.8 697.8,637.9 694.7,641.0 690.6,641.5 686.9,639.8 685.1,636.2 685.7,632.1 688.6,629.0 692.8,628.5" fill="#b4c8ec"/><polygon points="713.5,648.9 712.7,652.6 710.0,655.5 706.4,655.9 703.0,653.9 701.3,650.7 702.0,646.8 704.7,644.0 708.5,643.7 711.7,645.5" fill="#b4c8ec"/><polygon points="741.1,669.2 738.4,671.6 734.9,672.3 731.5,670.4 730.2,666.9 730.9,663.5 733.3,661.0 736.9,660.7 740.2,662.2 741.9,665.7" fill="#b4c8ec"/><polygon points="580.2,683.7 576.5,684.1 573.3,682.3 571.9,679.0 572.6,675.4 575.4,672.7 579.0,672.5 582.1,674.2 583.7,677.5 582.8,681.3" fill="#b4c8ec"/><polygon points="800.6,692.6 797.5,690.7 795.9,687.1 796.8,683.2 799.6,680.8 803.5,680.6 806.9,682.5 808.3,686.0 807.5,689.9 804.4,692.1" fill="#b4c8ec"/><polygon points="743.6,702.8 742.4,699.7 743.4,696.5 745.9,694.3 749.2,694.2 751.8,695.8 753.1,698.9 752.5,702.2 749.9,704.2 746.5,704.6" fill="#b4c8ec"/><polygon points="580.4,706.5 581.4,702.7 584.5,700.1 588.7,700.0 592.2,702.3 593.8,705.9 592.6,710.1 589.4,712.4 585.1,712.8 581.8,710.3" fill="#b4c8ec"/><polygon points="709.6,557.3 707.1,564.1 700.1,567.2 692.6,564.0 689.2,558.1 692.9,550.7 699.5,547.6 706.9,549.7" fill="#c59a92"/><polygon points="630.8,556.6 643.7,566.8 646.4,575.0 639.1,587.9 624.4,587.9 614.2,571.4 617.9,562.2" fill="#dcdc8c"/><polygon points="718.2,565.5 731.1,568.2 737.5,580.2 729.3,593.0 720.1,595.8 708.1,586.6 708.1,571.9" fill="#dcdc8c"/><polygon points="583.5,555.6 599.3,562.7 610.7,584.6 598.4,609.1 574.7,613.5 553.7,577.5" fill="#ee9345"/><polygon points="657.1,567.0 676.3,565.3 703.5,597.7 696.5,617.0 672.0,628.3 643.1,613.5 638.7,596.8" fill="#ee9345"/><polygon points="746.4,570.5 779.7,568.8 786.7,584.6 770.1,605.6 759.6,605.6 748.2,596.8" fill="#ff9797"/><polygon points="522.2,581.9 541.4,595.1 542.3,603.8 538.8,617.0 509.9,624.0 497.7,602.9 503.8,588.1" fill="#ff9797"/><polygon points="614.2,602.1 624.7,601.2 636.9,609.1 641.3,621.3 638.7,631.9 621.2,641.5 608.9,637.1 601.0,624.8" fill="#ff9797"/><polygon points="728.9,611.7 744.7,612.6 754.3,631.0 752.6,639.7 728.9,651.1 718.4,643.2 714.9,630.1 717.5,619.6" fill="#ff9797"/><polygon points="519.6,627.5 533.6,634.5 537.9,645.0 524.8,664.3 509.0,659.9 502.0,640.6" fill="#ff9797"/><polygon points="570.4,617.0 595.8,644.1 582.6,666.0 558.1,667.8 545.8,657.3 542.3,642.4" fill="#ee9345"/><polygon points="619.6,656.0 616.8,661.8 609.4,665.1 602.6,662.8 599.8,656.1 601.9,648.4 610.0,644.9 617.4,648.4" fill="#c59a92"/><polygon points="642.2,634.5 678.1,634.5 691.2,659.9 678.1,685.3 663.2,690.5 634.3,677.4 629.9,666.9" fill="#ee9345"/><polygon points="772.7,646.7 789.3,655.5 794.6,670.4 788.5,688.8 763.1,694.0 752.6,687.0 746.4,664.3" fill="#ee9345"/><polygon points="551.6,671.3 549.3,679.1 541.0,682.7 533.5,679.7 530.3,671.1 533.6,664.3 540.6,660.6 549.3,663.9" fill="#c59a92"/><polygon points="711.4,667.8 721.0,670.4 730.7,687.9 724.5,700.2 701.8,706.3 690.4,687.9" fill="#ff9797"/><polygon points="594.9,674.8 614.2,670.4 628.2,688.8 615.0,707.2 590.5,689.7" fill="#ff9797"/><polygon points="535.6,690.5 531.4,697.3 524.6,699.1 518.0,694.5 517.1,685.3 523.0,680.5 532.4,682.7" fill="#c59a92"/><polygon points="543.2,691.4 568.6,683.5 578.2,697.5 572.1,714.2 547.6,715.9 540.6,698.4" fill="#ff9797"/><polygon points="690.1,703.8 686.5,711.2 678.4,714.3 671.3,711.8 667.5,703.2 672.2,695.8 678.4,692.6 686.4,696.3" fill="#c59a92"/><polygon points="796.0,532.0 815.3,526.7 829.3,533.7 836.3,551.3 829.3,565.3 820.5,571.4 803.0,568.8 794.2,553.0" fill="#ff9797"/><polygon points="870.4,528.7 888.8,522.5 908.1,532.2 913.4,545.1 908.1,559.1 896.7,567.0 873.1,558.3 867.8,544.3" fill="#ff9797"/><polygon points="865.8,555.9 862.9,564.2 855.3,567.9 846.9,565.0 843.6,556.3 847.1,549.2 855.4,545.9 862.1,549.4" fill="#c59a92"/><polygon points="949.3,543.4 965.9,548.6 974.7,566.2 961.5,589.8 927.4,580.2 926.5,556.5" fill="#ee9345"/><polygon points="998.3,540.0 1012.1,551.0 1010.3,562.1 1000.2,569.4 985.5,562.1 982.7,551.0" fill="#dcdc8c"/><polygon points="1037.4,558.3 1033.6,565.6 1026.6,568.8 1019.8,565.0 1017.2,559.0 1019.3,551.3 1026.9,548.9 1034.2,551.8" fill="#c59a92"/><polygon points="1066.7,549.5 1078.0,558.3 1079.8,572.3 1062.3,585.4 1045.6,572.3 1043.9,558.3" fill="#ff9797"/><polygon points="1118.3,550.4 1129.7,555.6 1134.1,567.9 1119.2,587.2 1100.8,581.9 1097.3,556.5" fill="#ff9797"/><polygon points="864.8,576.6 865.4,572.7 868.1,570.0 871.8,569.2 875.2,570.9 877.1,574.3 876.5,578.3 873.9,580.9 870.1,581.7 866.5,579.9" fill="#b4c8ec"/><polygon points="1080.8,583.4 1083.6,580.6 1087.9,580.1 1091.6,581.7 1093.5,585.7 1092.8,589.6 1089.8,592.6 1085.8,593.3 1082.1,591.2 1080.3,587.7" fill="#b4c8ec"/><polygon points="855.9,616.1 859.2,615.4 862.1,617.0 863.7,620.2 863.2,623.6 860.5,625.9 857.1,626.3 854.2,624.7 852.8,621.7 853.3,618.5" fill="#b4c8ec"/><polygon points="883.9,625.0 886.7,626.6 888.2,629.7 887.6,633.1 885.0,635.6 881.7,635.9 878.6,634.1 877.2,631.1 877.8,627.7 880.4,625.5" fill="#b4c8ec"/><polygon points="945.7,649.4 947.4,653.0 946.6,657.0 943.6,659.6 939.8,660.1 936.3,658.1 934.6,654.5 935.4,650.5 938.5,647.8 942.2,647.5" fill="#b4c8ec"/><polygon points="1120.0,650.0 1119.2,654.4 1115.7,657.2 1111.3,657.7 1107.9,655.5 1106.1,651.5 1107.1,647.3 1110.5,644.4 1114.7,644.0 1118.4,646.2" fill="#b4c8ec"/><polygon points="830.0,663.4 827.4,665.6 824.2,665.9 821.1,664.0 820.0,660.9 820.8,657.4 823.4,655.2 826.9,654.9 829.8,656.9 831.0,660.1" fill="#b4c8ec"/><polygon points="1000.5,688.4 996.7,688.6 993.7,686.8 992.5,683.3 993.4,679.7 996.3,677.5 999.8,677.4 1002.9,679.4 1004.2,682.7 1003.2,686.3" fill="#b4c8ec"/><polygon points="994.2,703.8 991.4,701.9 990.0,698.7 991.3,695.3 993.9,693.3 997.1,693.1 1000.1,695.0 1001.4,698.4 1000.3,701.5 997.7,703.6" fill="#b4c8ec"/><polygon points="926.7,715.5 925.1,711.5 926.6,707.3 930.0,704.9 934.4,704.6 938.1,707.2 939.3,711.4 938.0,715.3 934.5,718.0 930.1,718.0" fill="#b4c8ec"/><polygon points="894.9,570.6 907.8,579.8 909.6,587.2 905.0,597.3 891.2,601.0 882.0,591.8 881.1,580.8" fill="#dcdc8c"/><polygon points="839.8,575.8 859.1,576.7 867.8,592.4 861.7,607.3 841.5,612.6 827.5,593.3" fill="#ff9797"/><polygon points="1053.9,592.8 1049.7,601.6 1041.8,604.1 1033.7,600.6 1031.3,593.2 1034.3,584.2 1041.6,581.7 1050.3,586.2" fill="#c59a92"/><polygon points="992.2,572.3 1022.9,587.2 1028.1,601.2 1011.5,634.5 978.2,634.5 963.3,595.9" fill="#ee9345"/><polygon points="890.8,611.8 887.9,619.4 881.5,622.3 873.6,618.8 870.5,611.6 873.0,604.9 881.6,601.8 888.2,605.4" fill="#c59a92"/><polygon points="1126.3,610.8 1122.9,618.5 1114.0,622.3 1107.0,618.3 1102.9,610.8 1106.4,601.8 1115.0,598.4 1123.2,601.6" fill="#c59a92"/><polygon points="906.4,600.3 939.6,595.1 956.3,622.2 948.4,642.4 909.9,645.0 899.3,624.8" fill="#ee9345"/><polygon points="1064.9,597.7 1083.3,600.3 1097.3,610.8 1101.7,624.8 1097.3,638.9 1079.8,653.8 1043.9,627.5" fill="#ee9345"/><polygon points="792.0,595.1 810.0,595.9 832.8,624.8 824.0,645.9 810.0,655.5 799.8,657.3 770.1,630.1" fill="#ee9345"/><polygon points="974.9,641.5 970.9,648.8 963.5,651.6 955.9,649.0 953.6,642.1 956.3,633.8 964.5,631.5 970.6,634.0" fill="#c59a92"/><polygon points="1040.1,638.5 1036.9,646.2 1027.4,649.5 1019.4,646.0 1016.2,637.9 1019.7,631.0 1027.6,627.4 1036.5,630.9" fill="#c59a92"/><polygon points="1014.7,649.5 1011.2,656.1 1004.7,659.9 996.3,656.7 994.2,650.0 997.4,642.2 1003.4,640.2 1011.9,642.5" fill="#c59a92"/><polygon points="838.0,635.4 864.3,631.0 874.8,648.5 872.2,658.1 858.2,670.4 838.9,662.5 833.7,644.1" fill="#ff9797"/><polygon points="904.7,662.6 901.4,669.9 895.5,672.8 888.1,669.4 885.1,662.6 888.1,655.1 895.3,652.6 901.5,655.4" fill="#c59a92"/><polygon points="1074.8,663.0 1072.2,672.1 1062.4,675.8 1054.4,672.6 1051.7,664.0 1055.1,654.8 1062.4,651.2 1071.6,655.0" fill="#c59a92"/><polygon points="1107.6,662.9 1103.6,672.6 1095.5,675.4 1087.3,671.8 1083.8,664.2 1086.6,654.9 1094.7,651.5 1103.0,654.7" fill="#c59a92"/><polygon points="934.0,673.9 931.2,683.7 922.6,688.0 913.2,684.4 908.8,675.6 913.1,666.4 922.9,661.6 931.1,667.0" fill="#c59a92"/><polygon points="1014.1,657.3 1039.5,658.1 1048.3,675.7 1031.6,694.0 1009.7,682.7" fill="#ff9797"/><polygon points="968.5,656.4 987.8,680.9 972.1,704.6 944.9,701.1 940.5,669.5" fill="#ee9345"/><polygon points="861.7,695.6 888.8,676.4 909.9,687.7 916.5,705.3 913.4,714.9 877.4,729.8 866.1,717.5" fill="#ee9345"/><polygon points="812.6,680.9 836.3,678.3 851.2,698.4 843.3,715.9 817.0,717.7 806.5,696.7" fill="#ff9797"/><polygon points="1054.4,691.4 1075.4,679.2 1092.1,693.2 1085.9,710.7 1060.5,714.2" fill="#ff9797"/><polygon points="624.7,701.7 639.6,693.9 659.7,703.5 665.0,716.6 652.7,738.5 626.4,738.5 616.8,716.6" fill="#ee9345"/><polygon points="765.7,715.8 778.8,701.7 798.1,703.5 803.4,717.5 791.1,735.0 778.0,735.0" fill="#ff9797"/><polygon points="550.0,722.2 549.7,725.7 547.3,728.0 544.0,728.8 541.0,727.5 539.1,724.5 539.7,721.0 541.8,718.4 545.2,717.8 548.3,719.1" fill="#b4c8ec"/><polygon points="723.7,719.8 721.0,722.5 717.1,723.3 713.8,721.4 712.0,718.1 712.4,714.4 715.0,711.5 718.9,710.8 722.3,712.6 724.1,715.8" fill="#b4c8ec"/><polygon points="672.7,737.9 669.0,738.7 665.2,737.1 663.5,733.5 664.0,729.8 666.5,726.8 670.6,726.0 674.0,727.8 676.0,731.3 675.4,735.2" fill="#b4c8ec"/><polygon points="627.1,757.9 623.2,755.9 621.2,751.9 621.8,747.6 625.0,744.7 629.3,743.9 633.1,745.8 635.3,749.7 634.3,754.1 631.5,757.1" fill="#b4c8ec"/><polygon points="578.7,773.0 577.2,770.0 577.7,766.7 580.3,764.2 583.5,763.8 586.8,765.4 588.0,768.3 587.6,771.9 585.1,774.2 581.8,774.6" fill="#b4c8ec"/><polygon points="589.1,782.1 589.6,778.8 592.2,776.5 595.6,776.1 598.7,777.7 600.1,780.7 599.4,784.1 596.8,786.6 593.6,786.9 590.5,785.3" fill="#b4c8ec"/><polygon points="750.7,760.7 753.5,758.4 756.8,758.0 759.8,759.8 761.3,762.7 760.5,766.2 758.0,768.3 754.6,768.9 751.6,767.2 750.1,763.9" fill="#b4c8ec"/><polygon points="711.5,832.0 715.6,831.9 719.2,834.1 720.7,837.9 719.9,841.9 716.8,844.7 712.4,845.1 708.7,842.8 707.2,839.1 708.4,834.8" fill="#b4c8ec"/><polygon points="769.9,850.8 773.0,852.8 774.4,856.2 773.5,860.2 770.7,862.7 766.9,862.9 763.6,860.9 762.2,857.1 763.0,853.3 766.1,851.1" fill="#b4c8ec"/><polygon points="802.8,801.2 804.4,804.8 803.4,808.4 800.4,810.9 796.4,811.2 793.3,808.9 791.7,805.3 792.9,801.9 796.1,799.4 799.6,799.1" fill="#b4c8ec"/><polygon points="813.6,862.8 812.7,866.1 809.7,868.6 806.0,868.5 803.1,866.5 801.9,863.3 802.9,859.7 805.8,857.5 809.5,857.3 812.6,859.3" fill="#b4c8ec"/><polygon points="569.2,737.9 566.3,745.1 557.9,748.4 550.4,745.3 548.1,739.0 551.0,731.6 558.4,728.2 566.6,730.6" fill="#c59a92"/><polygon points="589.6,726.3 608.0,729.8 615.0,742.9 608.9,756.1 592.3,762.2 577.4,749.0 578.2,737.7" fill="#ff9797"/><polygon points="686.0,727.1 700.9,726.3 713.1,743.8 709.6,754.3 692.1,763.9 675.5,744.7" fill="#ff9797"/><polygon points="743.8,712.3 758.7,717.5 767.4,735.0 761.3,748.2 742.0,754.3 726.3,741.2 729.8,720.1" fill="#ff9797"/><polygon points="669.9,754.9 667.9,761.6 659.8,764.7 652.8,761.8 649.8,754.9 652.9,747.7 660.4,743.8 667.3,746.2" fill="#c59a92"/><polygon points="736.6,764.9 734.1,773.9 724.1,777.6 716.7,773.7 712.5,765.6 716.4,756.9 725.3,754.1 733.3,756.7" fill="#c59a92"/><polygon points="622.9,763.9 636.9,761.3 649.2,768.3 654.4,780.6 639.6,802.5 619.4,798.1 612.4,782.3" fill="#ff9797"/><polygon points="675.6,765.0 687.5,773.3 689.4,784.3 673.7,795.4 663.6,790.8 659.0,779.7 666.4,767.8" fill="#dcdc8c"/><polygon points="698.2,782.3 715.8,781.5 728.9,788.5 735.9,806.0 721.9,829.6 684.2,813.0 684.2,801.6" fill="#ee9345"/><polygon points="756.1,778.0 773.6,778.8 782.3,802.5 778.8,810.4 756.1,816.5 744.7,792.8" fill="#ff9797"/><polygon points="677.7,810.3 673.7,818.5 666.1,822.2 657.6,819.0 654.0,809.7 657.5,803.1 665.5,798.7 674.1,803.2" fill="#c59a92"/><polygon points="702.2,834.2 697.8,842.6 690.8,845.9 681.7,841.4 679.1,834.4 682.4,825.5 690.4,822.0 698.6,826.3" fill="#c59a92"/><polygon points="729.8,825.3 752.6,820.9 762.2,836.6 749.9,855.9 738.5,855.9 726.3,841.9" fill="#ff9797"/><polygon points="775.3,827.0 792.9,819.1 810.0,826.1 817.4,840.1 803.4,857.7 787.6,855.9 775.3,838.4" fill="#ff9797"/><polygon points="981.7,720.1 1006.2,705.2 1034.2,701.7 1044.8,726.3 1035.1,752.6 991.3,753.4" fill="#ee9345"/><polygon points="916.8,722.1 919.9,720.7 923.3,721.4 925.5,724.3 925.7,727.5 923.9,730.7 920.7,731.7 917.4,730.9 915.2,728.3 914.9,725.0" fill="#b4c8ec"/><polygon points="943.8,760.7 947.2,761.5 949.3,764.2 949.5,767.6 947.7,770.5 944.4,771.7 941.1,770.9 938.9,768.1 938.6,764.8 940.6,762.0" fill="#b4c8ec"/><polygon points="930.4,772.8 932.6,775.6 932.7,778.8 930.8,781.8 927.7,782.9 924.3,782.0 922.2,779.2 922.1,776.0 924.0,772.9 927.1,771.9" fill="#b4c8ec"/><polygon points="998.6,768.5 998.7,772.3 996.4,775.4 992.9,776.5 989.1,775.6 986.8,772.4 986.6,768.7 989.0,765.5 992.5,764.2 996.2,765.3" fill="#b4c8ec"/><polygon points="909.9,792.8 907.1,796.7 902.4,798.2 897.8,796.7 895.1,792.5 894.9,787.8 897.8,784.1 902.6,782.3 907.0,783.9 910.2,787.8" fill="#b4c8ec"/><polygon points="905.8,813.9 902.2,815.1 898.9,813.9 896.7,811.0 896.9,807.3 899.0,804.3 902.3,803.3 905.9,804.3 908.0,807.5 908.0,811.2" fill="#b4c8ec"/><polygon points="1004.2,802.5 1000.8,801.2 998.5,798.2 998.7,794.2 1001.0,791.3 1004.7,790.2 1008.3,791.4 1010.6,794.6 1010.2,798.5 1008.0,801.4" fill="#b4c8ec"/><polygon points="987.3,810.1 985.2,807.1 985.5,803.6 987.6,800.7 991.3,799.7 994.7,801.1 996.8,804.0 996.4,807.8 994.1,810.6 990.5,811.4" fill="#b4c8ec"/><polygon points="858.0,829.9 858.3,825.9 861.0,823.0 864.8,822.2 868.5,823.6 870.6,826.7 870.1,830.7 867.5,833.8 863.9,834.7 860.1,833.3" fill="#b4c8ec"/><polygon points="922.6,838.3 925.0,835.1 928.9,834.3 932.4,835.8 934.3,839.1 934.1,842.8 931.5,846.0 927.6,846.6 924.3,845.3 922.1,841.9" fill="#b4c8ec"/><polygon points="867.0,851.7 870.2,850.9 873.3,852.2 874.7,855.1 874.5,858.4 872.1,860.9 869.1,861.6 865.9,860.2 864.4,857.2 864.7,854.1" fill="#b4c8ec"/><polygon points="812.3,801.0 815.7,802.7 817.6,805.7 817.2,809.5 814.4,812.0 811.1,812.8 807.8,811.1 806.1,807.8 806.4,804.4 808.9,801.6" fill="#b4c8ec"/><polygon points="831.7,787.4 832.9,789.8 832.8,792.7 830.7,794.9 827.9,795.4 825.1,794.2 823.9,791.6 824.3,788.7 826.1,786.6 829.2,786.0" fill="#b4c8ec"/><polygon points="833.0,735.9 831.2,743.0 823.0,746.0 815.7,742.3 812.5,735.2 816.6,728.5 822.4,725.8 829.6,728.5" fill="#c59a92"/><polygon points="851.1,723.8 862.1,728.4 866.7,738.6 861.2,750.5 847.4,753.3 838.2,743.2 841.0,729.4" fill="#dcdc8c"/><polygon points="900.2,730.7 920.4,738.5 926.5,753.4 910.7,776.2 894.1,774.4 880.1,749.9 883.6,739.4" fill="#ee9345"/><polygon points="954.5,715.8 972.1,737.7 963.3,755.2 937.9,753.4 930.0,735.9 932.6,724.5" fill="#ff9797"/><polygon points="1069.3,734.3 1066.7,741.8 1058.3,744.8 1052.3,742.4 1049.1,734.9 1052.4,727.7 1058.7,724.0 1066.3,726.7" fill="#c59a92"/><polygon points="778.8,756.1 785.8,745.5 805.1,738.5 820.5,747.3 832.8,767.4 815.3,791.1 789.0,787.6" fill="#ee9345"/><polygon points="849.4,774.4 873.1,767.4 888.0,786.7 873.9,809.5 851.2,807.7 848.5,780.6" fill="#ff9797"/><polygon points="964.2,763.1 979.1,765.7 987.8,782.3 979.9,798.1 965.0,802.5 949.3,785.8" fill="#ff9797"/><polygon points="1018.5,760.6 1030.5,768.0 1032.3,777.2 1017.6,790.1 1004.7,782.7 1002.9,768.9" fill="#dcdc8c"/><polygon points="938.8,785.8 952.8,798.1 954.5,810.4 948.4,821.8 931.8,829.6 913.4,818.2 915.1,792.8" fill="#ff9797"/><polygon points="844.3,811.0 841.7,817.7 835.0,821.0 827.1,817.7 824.9,810.5 827.9,804.8 834.7,801.2 841.9,804.2" fill="#c59a92"/><polygon points="979.5,817.5 976.0,825.2 968.0,828.4 961.4,826.2 957.8,818.8 961.8,811.0 969.3,807.8 975.9,811.6" fill="#c59a92"/><polygon points="897.6,819.1 911.6,832.3 916.9,842.8 912.5,853.3 888.8,859.4 876.6,837.5" fill="#ff9797"/><polygon points="822.3,833.1 847.7,825.3 860.8,847.2 856.4,862.0 832.8,869.1 817.9,849.8" fill="#ff9797"/><polygon points="1218.4,219.6 1214.8,227.8 1207.0,230.6 1198.5,227.2 1195.6,219.1 1198.8,211.9 1205.9,207.6 1214.4,211.7" fill="#c59a92"/><polygon points="1249.5,208.4 1262.3,213.0 1267.9,224.9 1264.2,235.1 1247.6,240.6 1235.7,222.2" fill="#dcdc8c"/><polygon points="1197.1,240.2 1201.2,238.0 1205.4,238.8 1208.5,241.8 1209.4,245.8 1207.6,250.1 1203.6,251.9 1199.3,251.4 1196.1,248.5 1195.6,244.1" fill="#b4c8ec"/><polygon points="1197.3,256.7 1201.7,257.2 1205.0,260.2 1205.5,264.3 1203.6,268.2 1199.8,270.5 1195.5,269.9 1192.2,266.9 1191.6,262.6 1193.5,258.6" fill="#b4c8ec"/><polygon points="1211.1,273.5 1214.1,276.7 1214.9,281.1 1212.8,285.4 1208.7,287.2 1204.5,286.7 1201.3,283.3 1200.5,278.9 1202.6,275.0 1206.6,273.0" fill="#b4c8ec"/><polygon points="1279.3,249.7 1280.1,253.6 1278.2,257.5 1274.4,259.3 1270.1,258.5 1267.2,255.4 1266.8,251.5 1268.8,247.8 1272.3,245.9 1276.4,246.7" fill="#b4c8ec"/><polygon points="1205.9,318.1 1204.0,321.4 1200.5,323.2 1196.7,322.4 1194.0,319.4 1193.5,315.8 1195.5,312.5 1199.1,310.7 1202.9,311.4 1205.5,314.3" fill="#b4c8ec"/><polygon points="1273.0,319.5 1269.7,320.9 1266.0,320.2 1263.7,317.6 1263.1,313.8 1265.1,310.7 1268.4,309.3 1272.0,310.1 1274.3,312.7 1274.7,316.3" fill="#b4c8ec"/><polygon points="1414.0,222.1 1410.4,221.1 1408.0,218.5 1407.9,214.8 1409.6,211.9 1412.9,210.4 1416.6,211.1 1419.0,213.7 1419.3,217.5 1417.5,220.6" fill="#b4c8ec"/><polygon points="1364.8,249.0 1362.4,246.4 1362.2,242.6 1364.1,239.8 1367.5,238.3 1371.1,239.2 1373.4,242.1 1373.8,245.5 1371.8,248.6 1368.3,250.2" fill="#b4c8ec"/><polygon points="1427.1,304.9 1426.8,299.7 1429.6,295.7 1433.9,293.9 1438.9,295.0 1441.9,299.0 1442.4,304.3 1439.6,308.3 1434.9,310.1 1430.2,308.9" fill="#b4c8ec"/><polygon points="1369.5,343.4 1371.6,340.4 1375.4,339.1 1379.1,340.1 1381.4,343.0 1381.5,346.9 1379.3,350.1 1375.7,351.5 1371.9,350.5 1369.7,347.4" fill="#b4c8ec"/><polygon points="1497.1,351.0 1501.9,349.1 1506.7,350.6 1509.4,354.8 1509.6,359.4 1506.7,363.4 1502.1,365.1 1497.6,363.7 1494.4,360.0 1494.3,354.9" fill="#b4c8ec"/><polygon points="1234.8,237.2 1247.9,245.9 1250.6,258.2 1244.4,270.4 1227.8,274.8 1214.7,262.6 1218.2,244.2" fill="#ff9797"/><polygon points="1266.3,265.2 1276.9,269.6 1285.6,287.1 1281.2,298.5 1261.1,305.5 1245.3,285.3" fill="#ff9797"/><polygon points="1293.5,213.5 1323.3,209.1 1337.3,223.1 1346.9,242.4 1329.4,269.6 1297.9,270.4 1282.1,235.4" fill="#ee9345"/><polygon points="1362.3,224.1 1360.0,232.3 1352.0,235.4 1344.2,232.5 1341.7,225.7 1344.6,217.9 1352.8,214.8 1358.9,217.5" fill="#c59a92"/><polygon points="1376.7,215.3 1396.9,210.9 1408.2,222.3 1410.0,235.4 1398.6,247.7 1377.6,244.2 1371.5,229.3" fill="#ff9797"/><polygon points="1363.7,269.8 1359.8,277.4 1352.6,281.1 1345.8,276.9 1343.2,270.3 1345.3,263.1 1352.6,260.3 1360.6,263.1" fill="#c59a92"/><polygon points="1429.3,220.5 1447.7,224.0 1453.8,240.7 1446.8,255.6 1434.5,260.8 1420.5,252.1 1417.9,236.3" fill="#ff9797"/><polygon points="1471.3,222.3 1499.3,219.6 1511.6,234.5 1513.4,250.3 1502.9,268.7 1480.1,270.4 1464.3,248.6" fill="#ee9345"/><polygon points="1397.7,256.4 1413.5,269.6 1423.1,287.1 1417.9,304.6 1380.2,305.5 1370.6,280.1 1376.7,264.3" fill="#ee9345"/><polygon points="1308.8,275.1 1328.1,274.2 1333.6,287.0 1326.3,299.9 1314.3,300.8 1302.3,290.7" fill="#dcdc8c"/><polygon points="1462.1,282.8 1458.9,290.8 1451.1,295.2 1442.5,291.5 1437.8,282.7 1441.8,274.8 1450.4,270.3 1458.8,273.0" fill="#c59a92"/><polygon points="1207.7,299.4 1236.6,289.7 1251.4,309.9 1236.6,331.8 1222.5,333.5 1205.9,306.4" fill="#ee9345"/><polygon points="1356.6,291.5 1370.6,301.1 1374.1,311.6 1368.0,324.8 1354.8,329.1 1338.2,316.9 1338.2,302.9" fill="#ff9797"/><polygon points="1285.6,302.0 1312.8,308.1 1320.7,323.9 1311.9,341.4 1285.6,344.0 1273.3,330.9" fill="#ee9345"/><polygon points="1394.1,323.1 1390.9,331.1 1382.9,333.1 1375.7,330.5 1373.3,323.8 1375.8,315.4 1384.6,312.1 1390.8,315.8" fill="#c59a92"/><polygon points="1473.1,292.3 1505.5,315.1 1504.6,336.1 1459.1,354.5 1440.7,330.0 1441.5,311.6" fill="#ee9345"/><polygon points="1217.6,336.9 1215.6,344.2 1208.3,347.4 1199.9,344.0 1197.6,336.4 1199.3,329.6 1206.9,326.8 1214.6,329.9" fill="#c59a92"/><polygon points="1252.3,330.0 1262.8,332.6 1274.2,351.9 1269.8,365.1 1255.8,372.1 1234.8,361.5 1233.9,343.2" fill="#ff9797"/><polygon points="1325.9,336.1 1349.6,335.3 1357.4,351.9 1348.7,365.9 1332.9,369.4 1319.8,350.2" fill="#ff9797"/><polygon points="1410.0,326.5 1438.0,356.3 1429.3,375.6 1394.2,374.7 1382.8,357.2 1388.1,337.0" fill="#ee9345"/><polygon points="1318.2,360.5 1314.9,367.8 1308.0,370.7 1300.2,368.3 1297.7,360.2 1300.7,353.8 1306.9,349.9 1315.5,353.6" fill="#c59a92"/><polygon points="1527.1,216.1 1528.1,220.0 1526.7,223.8 1523.4,225.7 1519.6,225.5 1516.2,223.0 1515.3,219.4 1516.9,215.5 1519.9,213.4 1524.0,213.6" fill="#b4c8ec"/><polygon points="1530.5,224.9 1552.4,222.3 1562.0,231.0 1569.1,245.0 1555.0,265.2 1530.5,264.3 1520.0,255.6 1513.0,243.3" fill="#ee9345"/><polygon points="1503.6,279.6 1516.4,272.3 1529.3,279.6 1532.1,294.4 1520.1,305.4 1505.4,301.7" fill="#dcdc8c"/><polygon points="1557.1,282.8 1553.8,282.5 1551.0,280.2 1550.3,276.9 1551.9,273.8 1554.9,272.1 1558.3,272.4 1560.6,274.6 1561.5,278.1 1560.0,281.1" fill="#b4c8ec"/><polygon points="1589.5,228.9 1585.4,236.6 1578.3,239.4 1570.7,235.3 1567.1,229.1 1570.7,220.5 1577.9,218.1 1585.7,221.1" fill="#c59a92"/><polygon points="1596.5,213.8 1614.9,210.1 1625.9,224.8 1617.7,240.5 1602.0,240.5 1593.8,226.7" fill="#dcdc8c"/><polygon points="1633.9,223.1 1657.5,221.4 1671.5,241.5 1660.2,260.8 1647.0,264.3 1627.7,245.9" fill="#ff9797"/><polygon points="1693.4,210.0 1704.0,220.5 1706.6,231.9 1695.2,245.9 1679.4,246.8 1666.3,222.3" fill="#ff9797"/><polygon points="1725.1,212.5 1728.7,213.1 1730.9,215.6 1731.3,219.0 1729.6,221.9 1726.5,223.4 1723.1,222.8 1720.9,220.1 1720.5,216.8 1722.0,213.9" fill="#b4c8ec"/><polygon points="1761.1,222.4 1758.7,228.7 1751.0,232.2 1743.3,228.9 1740.2,221.6 1743.6,214.6 1750.3,212.4 1758.3,214.4" fill="#c59a92"/><polygon points="1766.4,221.8 1786.6,217.2 1795.8,234.7 1784.8,246.6 1764.6,239.3" fill="#dcdc8c"/><polygon points="1815.9,218.8 1813.1,223.2 1808.8,224.8 1804.0,223.7 1800.9,219.9 1800.4,215.2 1803.0,210.9 1807.5,209.1 1812.4,210.3 1815.6,214.0" fill="#b4c8ec"/><polygon points="1849.9,220.5 1846.2,228.7 1837.7,233.0 1829.6,230.0 1827.1,222.0 1830.1,214.1 1838.6,210.6 1846.5,212.9" fill="#c59a92"/><polygon points="1726.7,228.4 1747.8,238.0 1752.1,247.7 1736.4,271.3 1711.0,261.7 1713.6,235.4" fill="#ff9797"/><polygon points="1817.8,229.3 1825.7,229.3 1840.6,248.6 1831.0,266.1 1807.3,261.7 1802.9,240.7" fill="#ff9797"/><polygon points="1687.5,262.4 1684.7,269.6 1677.8,272.0 1670.7,270.0 1668.2,262.1 1671.3,255.1 1677.4,253.5 1684.6,255.2" fill="#c59a92"/><polygon points="1602.3,249.4 1611.1,252.1 1631.2,281.0 1612.0,310.7 1583.1,309.0 1569.1,272.2" fill="#ee9345"/><polygon points="1659.5,275.0 1663.7,273.8 1667.9,275.3 1670.7,279.0 1670.5,283.5 1667.7,286.9 1663.4,288.3 1659.2,286.5 1656.6,283.0 1656.7,278.6" fill="#b4c8ec"/><polygon points="1764.4,256.4 1779.3,253.8 1796.8,271.3 1792.4,288.0 1773.2,295.9 1756.5,285.3 1753.9,274.0" fill="#ff9797"/><polygon points="1844.0,289.5 1841.0,296.6 1834.3,299.8 1826.1,296.5 1822.5,288.7 1826.1,281.1 1833.4,279.3 1840.5,282.1" fill="#c59a92"/><polygon points="1540.1,288.8 1556.8,288.0 1568.2,303.7 1562.9,316.9 1548.9,323.9 1531.4,308.1" fill="#ff9797"/><polygon points="1634.8,287.1 1653.1,285.3 1667.2,306.4 1655.8,325.6 1633.9,325.6 1623.4,308.1" fill="#ff9797"/><polygon points="1691.7,271.3 1731.1,288.8 1734.6,299.4 1715.3,329.1 1674.2,312.5 1671.5,295.0" fill="#ee9345"/><polygon points="1751.3,298.5 1770.5,305.5 1774.0,316.9 1764.4,334.4 1744.2,333.5 1734.6,314.2" fill="#ff9797"/><polygon points="1798.6,294.1 1815.2,293.2 1837.1,321.3 1824.8,344.9 1796.8,344.9 1781.9,313.4" fill="#ee9345"/><polygon points="1837.4,338.1 1838.1,333.7 1841.1,330.8 1845.4,330.4 1848.9,332.2 1850.7,336.2 1849.9,340.1 1847.2,343.1 1842.8,343.8 1839.2,341.8" fill="#b4c8ec"/><polygon points="1766.0,338.5 1768.6,335.7 1772.5,335.4 1776.0,337.3 1777.6,340.6 1776.7,344.5 1773.9,347.0 1770.3,347.4 1766.9,345.8 1765.3,342.1" fill="#b4c8ec"/><polygon points="1782.3,349.3 1786.8,348.7 1790.9,351.2 1793.0,355.6 1792.0,359.9 1788.5,363.3 1783.9,363.7 1779.8,361.6 1777.9,357.0 1778.8,352.5" fill="#b4c8ec"/><polygon points="1581.1,365.6 1584.7,367.5 1586.2,371.6 1585.4,375.4 1582.1,378.2 1578.2,378.5 1574.5,376.3 1572.9,372.6 1573.8,368.5 1577.0,365.9" fill="#b4c8ec"/><polygon points="1559.4,323.9 1593.6,322.1 1599.7,336.1 1598.0,346.7 1581.3,360.7 1557.7,350.2 1555.0,337.9" fill="#ff9797"/><polygon points="1629.7,344.0 1626.3,353.8 1617.6,356.1 1609.0,353.3 1605.3,344.7 1609.4,335.1 1616.3,332.0 1626.9,335.5" fill="#c59a92"/><polygon points="1705.7,339.7 1702.1,348.9 1694.1,351.6 1687.1,349.0 1682.4,339.8 1687.2,332.4 1694.9,329.7 1702.9,332.5" fill="#c59a92"/><polygon points="1514.7,328.3 1539.3,330.9 1549.8,346.7 1542.8,358.9 1527.0,365.1 1507.7,355.4 1504.2,339.7" fill="#ff9797"/><polygon points="1658.4,338.8 1670.7,343.2 1686.4,369.4 1685.6,375.6 1658.4,397.3 1629.5,378.2 1630.4,358.0" fill="#ee9345"/><polygon points="1738.1,335.3 1768.8,355.4 1772.3,365.9 1768.8,372.1 1746.0,398.2 1711.0,378.2 1711.0,353.7" fill="#ee9345"/><polygon points="1839.5,359.2 1836.5,366.6 1829.1,369.8 1821.2,365.9 1818.7,358.9 1821.7,350.6 1828.9,348.1 1836.4,351.0" fill="#c59a92"/><polygon points="1193.6,360.7 1202.4,357.2 1228.7,365.9 1233.9,378.0 1217.3,399.9 1191.0,392.0" fill="#ee9345"/><polygon points="1273.3,371.0 1292.6,374.5 1299.6,388.5 1289.1,407.8 1271.6,408.7 1261.1,398.2 1259.3,383.3" fill="#ff9797"/><polygon points="1363.3,370.4 1367.4,373.8 1368.4,378.9 1366.6,383.5 1361.9,386.1 1356.8,385.7 1353.0,382.3 1351.9,377.1 1353.7,372.7 1358.2,369.9" fill="#b4c8ec"/><polygon points="1313.6,378.5 1314.2,381.7 1312.8,385.0 1309.9,386.6 1306.3,386.2 1303.9,384.0 1303.3,380.6 1304.8,377.4 1307.5,375.7 1311.0,376.2" fill="#b4c8ec"/><polygon points="1330.3,378.0 1346.9,380.6 1355.7,397.3 1345.2,416.6 1320.7,411.3 1318.0,388.5" fill="#ff9797"/><polygon points="1391.6,384.5 1388.5,392.0 1381.0,394.7 1375.1,392.1 1371.2,385.7 1374.1,378.1 1381.1,374.3 1388.4,377.6" fill="#c59a92"/><polygon points="1456.6,379.9 1453.3,387.4 1445.7,390.0 1437.9,387.2 1434.5,379.0 1437.5,372.2 1446.0,369.4 1453.2,372.4" fill="#c59a92"/><polygon points="1481.8,372.8 1501.1,372.8 1520.0,402.5 1511.6,425.3 1472.2,428.8 1458.2,392.9" fill="#ee9345"/><polygon points="1385.3,405.3 1385.0,402.1 1386.6,399.2 1389.7,397.6 1392.9,398.4 1395.2,400.9 1395.6,404.2 1394.2,407.0 1391.1,408.3 1387.9,407.8" fill="#b4c8ec"/><polygon points="1295.5,403.2 1297.2,400.0 1300.4,398.9 1303.7,399.4 1305.9,402.0 1306.4,405.5 1304.6,408.4 1301.4,409.8 1298.0,409.0 1295.8,406.6" fill="#b4c8ec"/><polygon points="1270.9,417.4 1274.5,416.1 1278.3,416.9 1281.0,419.8 1281.5,423.7 1279.2,427.1 1275.6,428.7 1271.8,427.6 1269.2,425.0 1268.9,421.0" fill="#b4c8ec"/><polygon points="1259.2,424.1 1263.4,425.1 1266.0,428.4 1266.2,432.7 1264.0,436.3 1260.3,437.8 1256.2,436.8 1253.5,433.5 1253.0,429.4 1255.3,425.8" fill="#b4c8ec"/><polygon points="1202.9,445.5 1205.2,448.4 1205.5,452.4 1203.3,455.6 1199.8,456.8 1196.1,456.0 1193.6,452.9 1193.5,449.0 1195.6,445.9 1199.0,444.5" fill="#b4c8ec"/><polygon points="1202.6,472.4 1202.8,476.0 1200.8,479.0 1197.4,480.3 1193.7,479.2 1191.5,476.5 1191.5,472.7 1193.5,469.7 1197.0,468.6 1200.5,469.4" fill="#b4c8ec"/><polygon points="1413.6,462.8 1411.2,466.5 1407.0,467.8 1402.8,466.7 1400.1,463.0 1399.9,458.4 1402.4,454.8 1406.6,453.4 1411.0,454.6 1413.7,458.3" fill="#b4c8ec"/><polygon points="1368.6,477.3 1365.0,478.6 1361.7,477.4 1359.4,474.6 1359.4,470.7 1361.5,468.0 1365.0,466.8 1368.6,467.9 1370.7,470.7 1370.5,474.5" fill="#b4c8ec"/><polygon points="1461.6,495.5 1456.8,493.9 1454.4,489.9 1454.1,485.0 1457.1,480.9 1461.7,479.6 1466.5,481.4 1469.1,485.4 1469.0,490.2 1466.1,494.0" fill="#b4c8ec"/><polygon points="1260.1,500.1 1258.2,497.2 1258.2,493.7 1260.4,491.1 1263.5,490.3 1266.7,491.3 1268.7,494.1 1268.6,497.5 1266.4,500.4 1263.1,501.2" fill="#b4c8ec"/><polygon points="1237.8,505.6 1238.1,501.9 1240.5,499.2 1243.9,498.4 1247.2,499.6 1249.2,502.6 1249.1,506.2 1246.7,509.1 1243.2,510.0 1239.8,508.7" fill="#b4c8ec"/><polygon points="1295.9,525.0 1298.3,522.2 1302.1,521.3 1305.8,522.6 1307.8,526.1 1307.7,529.7 1305.0,532.9 1301.2,533.7 1297.8,532.3 1295.6,529.0" fill="#b4c8ec"/><polygon points="1215.1,526.7 1218.8,525.9 1222.1,527.5 1223.9,530.6 1223.7,534.1 1221.2,536.8 1217.7,537.6 1214.2,536.3 1212.5,533.2 1212.7,529.5" fill="#b4c8ec"/><polygon points="1457.5,536.8 1461.2,538.3 1463.1,541.9 1462.5,545.5 1460.0,548.6 1456.3,549.3 1452.8,547.6 1450.8,544.2 1451.4,540.5 1453.8,537.7" fill="#b4c8ec"/><polygon points="1482.2,538.1 1484.2,541.6 1483.6,545.1 1481.0,548.0 1477.3,548.8 1473.7,547.1 1471.9,544.0 1472.2,540.0 1475.0,537.3 1478.8,536.6" fill="#b4c8ec"/><polygon points="1415.3,383.3 1425.8,387.6 1434.5,402.5 1418.8,420.9 1401.2,413.0 1398.6,392.0" fill="#ff9797"/><polygon points="1242.5,395.7 1256.3,403.0 1259.0,413.1 1253.5,420.5 1239.7,425.1 1229.6,410.4" fill="#dcdc8c"/><polygon points="1442.3,407.1 1455.2,412.6 1459.8,422.7 1452.5,435.6 1438.7,438.3 1427.6,425.5 1429.5,412.6" fill="#dcdc8c"/><polygon points="1199.8,406.9 1224.3,407.8 1230.4,421.8 1225.2,434.1 1211.2,442.0 1195.4,433.2" fill="#ff9797"/><polygon points="1300.5,419.2 1335.5,434.1 1338.2,448.1 1334.7,458.6 1300.5,477.0 1278.6,449.0 1281.2,437.6" fill="#ee9345"/><polygon points="1367.1,410.4 1386.3,414.8 1400.4,441.1 1392.5,462.1 1349.6,463.9 1339.9,431.4" fill="#ee9345"/><polygon points="1235.7,430.6 1270.7,452.5 1271.6,460.3 1254.1,489.3 1237.4,491.9 1210.3,456.8" fill="#ee9345"/><polygon points="1490.6,434.1 1509.9,449.0 1512.5,456.8 1502.9,477.0 1473.9,472.6 1471.3,444.6" fill="#ff9797"/><polygon points="1431.0,448.1 1454.7,456.8 1456.4,465.6 1449.4,480.5 1438.9,484.9 1418.8,471.7 1421.4,456.8" fill="#ff9797"/><polygon points="1291.0,481.3 1287.8,488.4 1279.5,491.8 1271.4,488.4 1267.0,481.3 1271.5,472.4 1280.3,469.2 1287.9,472.8" fill="#c59a92"/><polygon points="1338.0,466.7 1350.0,471.3 1354.6,480.5 1350.0,492.5 1339.9,496.1 1327.9,484.2 1328.8,472.2" fill="#dcdc8c"/><polygon points="1399.5,470.9 1411.8,475.2 1419.6,490.1 1406.5,509.4 1394.2,509.4 1381.1,492.8 1384.6,477.9" fill="#ff9797"/><polygon points="1304.0,484.0 1322.4,486.6 1331.2,502.4 1319.8,520.8 1296.1,513.8 1296.1,493.6" fill="#ff9797"/><polygon points="1213.8,487.5 1221.7,497.1 1226.9,506.8 1223.4,514.7 1203.3,525.2 1190.1,513.8 1191.0,501.5" fill="#ff9797"/><polygon points="1366.2,495.4 1388.1,507.7 1391.6,521.7 1385.5,537.4 1368.0,544.4 1344.3,535.7 1342.5,507.7" fill="#ee9345"/><polygon points="1452.0,498.0 1464.3,509.4 1466.9,518.2 1462.6,528.7 1446.8,537.4 1437.2,530.4 1429.3,510.3" fill="#ff9797"/><polygon points="1493.2,484.9 1520.0,487.5 1532.6,507.7 1527.4,528.7 1509.9,537.4 1480.1,528.7 1477.4,496.3" fill="#ee9345"/><polygon points="1529.8,367.1 1540.8,361.5 1558.3,366.1 1562.0,379.9 1546.3,394.7 1532.5,388.2" fill="#dcdc8c"/><polygon points="1781.0,380.6 1793.3,367.5 1814.3,369.2 1821.3,383.3 1817.8,393.8 1807.3,405.2 1795.1,403.4" fill="#ff9797"/><polygon points="1849.8,380.3 1846.8,388.0 1840.0,390.7 1831.4,387.9 1829.0,380.1 1832.7,372.5 1839.1,369.5 1846.8,372.5" fill="#c59a92"/><polygon points="1705.5,382.5 1703.6,386.1 1700.0,387.9 1695.8,387.0 1693.2,384.2 1692.5,380.0 1694.4,376.4 1698.2,374.5 1702.2,375.2 1705.2,378.3" fill="#b4c8ec"/><polygon points="1771.1,394.6 1767.9,396.0 1764.7,395.4 1762.3,393.1 1762.0,389.5 1763.6,386.6 1766.7,385.2 1770.2,385.7 1772.3,388.4 1772.8,391.7" fill="#b4c8ec"/><polygon points="1533.3,417.7 1529.7,417.0 1527.2,414.2 1526.9,410.7 1528.7,407.5 1532.1,405.9 1535.4,406.8 1538.0,409.4 1538.4,413.2 1536.4,416.3" fill="#b4c8ec"/><polygon points="1735.1,475.9 1731.7,472.4 1731.3,467.5 1733.9,463.1 1738.3,461.3 1743.1,462.3 1746.1,465.9 1746.9,470.9 1744.2,475.3 1739.5,476.8" fill="#b4c8ec"/><polygon points="1531.1,496.7 1531.0,493.1 1532.7,490.2 1536.0,489.0 1539.3,489.9 1541.5,492.4 1541.7,495.9 1539.7,498.8 1536.7,500.0 1533.3,499.1" fill="#b4c8ec"/><polygon points="1668.6,501.7 1670.6,498.5 1674.3,497.0 1677.9,498.0 1680.6,501.1 1680.6,504.9 1678.6,508.0 1675.1,509.5 1671.4,508.5 1668.7,505.4" fill="#b4c8ec"/><polygon points="1613.0,509.4 1616.8,508.1 1621.2,509.3 1623.8,512.7 1624.1,517.0 1621.4,520.5 1617.5,521.9 1613.3,521.0 1610.5,517.5 1610.3,513.1" fill="#b4c8ec"/><polygon points="1590.1,378.0 1615.5,375.4 1624.2,392.0 1609.3,408.7 1586.6,396.4" fill="#ff9797"/><polygon points="1567.3,390.3 1574.3,392.9 1591.8,416.6 1586.6,429.7 1561.2,439.3 1549.8,430.6 1545.4,403.4" fill="#ee9345"/><polygon points="1633.0,403.4 1654.9,412.2 1656.7,420.9 1644.4,439.3 1625.1,434.1 1619.0,417.4" fill="#ff9797"/><polygon points="1680.3,394.7 1690.8,394.7 1703.1,406.9 1702.2,421.8 1688.2,432.3 1666.3,420.1 1665.4,411.3" fill="#ff9797"/><polygon points="1731.9,406.2 1728.9,413.9 1720.7,416.8 1712.5,413.6 1709.8,406.9 1713.6,398.2 1721.0,395.0 1728.1,398.3" fill="#c59a92"/><polygon points="1738.3,420.2 1748.5,430.3 1746.6,440.5 1734.7,449.7 1724.5,445.1 1719.0,435.9 1723.6,423.9" fill="#dcdc8c"/><polygon points="1767.9,404.3 1796.8,412.2 1805.6,432.3 1790.7,458.6 1768.8,463.0 1758.3,456.8 1749.5,418.3" fill="#ee9345"/><polygon points="1827.4,408.0 1841.2,416.2 1842.1,423.6 1835.7,434.6 1824.6,437.4 1814.5,423.6 1817.3,414.4" fill="#dcdc8c"/><polygon points="1526.9,429.1 1538.0,431.8 1544.4,442.9 1538.0,455.7 1523.3,455.7 1512.2,444.7 1515.9,433.7" fill="#dcdc8c"/><polygon points="1604.1,428.1 1617.9,435.4 1622.5,444.6 1611.5,463.0 1590.3,453.8 1587.5,446.5 1593.1,433.6" fill="#dcdc8c"/><polygon points="1679.0,442.6 1675.4,448.8 1668.2,452.6 1660.9,449.1 1657.4,442.7 1661.4,434.3 1668.3,431.2 1675.4,435.0" fill="#c59a92"/><polygon points="1693.4,440.2 1717.1,453.3 1720.6,465.6 1700.4,491.0 1689.1,490.1 1670.7,463.0" fill="#ee9345"/><polygon points="1814.3,442.0 1831.8,442.0 1845.9,462.1 1838.0,478.7 1822.2,482.2 1809.1,472.6 1804.7,456.8" fill="#ff9797"/><polygon points="1537.3,471.2 1534.1,478.9 1527.6,480.8 1519.3,478.7 1516.1,470.8 1519.3,464.2 1527.8,460.0 1535.2,463.5" fill="#c59a92"/><polygon points="1574.3,447.2 1605.8,477.0 1595.3,500.6 1583.1,506.8 1552.4,497.1 1545.4,481.4 1546.3,469.1" fill="#ee9345"/><polygon points="1638.3,452.5 1662.8,461.2 1672.4,483.1 1658.4,507.7 1640.9,513.8 1615.5,496.3 1615.5,468.2" fill="#ee9345"/><polygon points="1798.3,475.9 1794.4,483.0 1787.6,486.3 1781.2,483.4 1778.2,475.8 1780.6,468.6 1788.5,466.1 1794.9,468.2" fill="#c59a92"/><polygon points="1732.7,485.2 1729.7,493.5 1723.3,496.4 1715.8,492.3 1712.2,485.6 1716.1,478.1 1722.3,475.8 1730.7,478.5" fill="#c59a92"/><polygon points="1712.1,506.3 1709.1,513.3 1701.6,517.4 1692.9,513.4 1690.2,505.6 1693.7,497.7 1701.8,493.9 1709.1,497.8" fill="#c59a92"/><polygon points="1745.6,506.2 1742.5,513.0 1734.9,517.1 1727.3,514.1 1723.1,505.6 1727.9,498.2 1734.1,494.5 1742.8,498.5" fill="#c59a92"/><polygon points="1808.6,500.7 1805.1,509.6 1797.1,511.8 1789.9,508.9 1787.1,500.9 1790.7,492.9 1798.3,490.7 1805.5,493.1" fill="#c59a92"/><polygon points="1570.9,518.7 1567.5,526.3 1558.1,529.8 1550.8,527.0 1546.1,518.8 1550.0,510.6 1557.6,506.3 1566.5,509.1" fill="#c59a92"/><polygon points="1754.8,532.6 1751.4,540.5 1743.6,543.4 1737.0,540.0 1734.2,532.5 1737.0,524.7 1743.5,522.8 1751.4,525.2" fill="#c59a92"/><polygon points="1760.0,478.7 1772.3,478.7 1782.8,493.6 1775.8,511.2 1753.9,509.4 1746.9,491.9" fill="#ff9797"/><polygon points="1817.8,504.1 1839.7,508.5 1845.9,518.2 1835.3,539.2 1814.3,539.2 1804.7,518.2" fill="#ff9797"/><polygon points="1669.8,513.2 1681.7,519.6 1685.4,527.9 1675.3,540.8 1661.5,537.1 1656.0,528.8 1662.4,515.9" fill="#dcdc8c"/><polygon points="1255.0,510.3 1275.1,510.3 1292.6,533.7 1289.1,549.5 1268.1,563.5 1248.8,556.5 1239.2,528.5" fill="#ee9345"/><polygon points="1413.5,519.9 1428.4,526.0 1435.4,539.0 1432.8,547.8 1421.4,560.0 1404.7,559.1 1393.4,546.0 1392.5,535.5" fill="#ff9797"/><polygon points="1513.5,552.5 1510.2,560.1 1502.9,562.8 1495.5,560.4 1491.8,551.4 1496.0,544.6 1502.9,542.0 1510.6,545.3" fill="#c59a92"/><polygon points="1204.1,541.6 1225.2,546.0 1232.2,560.9 1226.9,574.0 1201.5,578.4 1191.0,561.8" fill="#ff9797"/><polygon points="1329.4,546.0 1342.5,554.8 1346.9,565.3 1331.2,587.2 1306.6,578.4 1302.3,561.8" fill="#ff9797"/><polygon points="1378.5,551.3 1396.9,560.9 1402.1,573.2 1398.6,583.7 1376.7,595.1 1362.7,586.3 1360.9,558.3" fill="#ff9797"/><polygon points="1465.2,550.4 1486.2,561.8 1489.7,572.3 1484.5,584.6 1463.4,595.1 1448.5,584.6 1445.9,564.4" fill="#ee9345"/><polygon points="1307.6,551.7 1304.1,553.2 1300.3,552.1 1298.0,549.1 1297.5,545.5 1299.6,542.3 1303.1,540.8 1306.9,541.5 1309.4,544.6 1309.6,548.3" fill="#b4c8ec"/><polygon points="1429.1,582.4 1425.1,581.5 1422.4,578.1 1422.2,574.0 1424.4,570.6 1428.4,569.1 1432.5,570.3 1435.1,573.2 1435.1,577.5 1433.0,580.9" fill="#b4c8ec"/><polygon points="1346.1,589.9 1343.6,587.0 1343.7,583.3 1345.9,580.0 1349.3,578.6 1353.2,579.7 1355.4,582.9 1355.5,586.6 1353.3,590.0 1349.6,591.3" fill="#b4c8ec"/><polygon points="1358.7,602.6 1358.8,598.9 1360.8,595.9 1364.3,594.8 1367.9,595.9 1370.1,598.8 1370.0,602.3 1367.9,605.4 1364.5,606.5 1361.2,605.5" fill="#b4c8ec"/><polygon points="1207.6,586.4 1210.4,582.9 1214.7,581.4 1219.1,582.7 1221.5,586.4 1221.5,590.7 1218.8,594.4 1214.5,595.7 1210.6,594.5 1207.7,590.9" fill="#b4c8ec"/><polygon points="1192.4,588.0 1196.2,586.8 1200.4,588.5 1202.6,591.6 1202.6,595.8 1200.3,599.1 1196.0,600.4 1192.2,598.9 1189.9,595.6 1189.7,591.5" fill="#b4c8ec"/><polygon points="1231.3,587.5 1234.7,588.7 1236.9,592.1 1236.9,595.8 1234.4,598.9 1230.7,600.0 1227.1,598.5 1225.1,595.4 1225.0,591.4 1227.5,588.5" fill="#b4c8ec"/><polygon points="1489.2,599.2 1491.8,602.9 1491.5,607.2 1489.0,610.6 1484.6,611.9 1480.5,610.0 1478.0,606.4 1478.4,602.0 1481.1,598.7 1485.5,597.6" fill="#b4c8ec"/><polygon points="1466.0,663.7 1465.7,668.3 1462.8,671.3 1458.4,672.6 1454.7,670.9 1452.1,667.2 1452.6,662.8 1455.3,659.6 1459.5,658.5 1463.6,660.0" fill="#b4c8ec"/><polygon points="1509.4,669.0 1506.4,672.6 1502.0,673.4 1497.5,671.6 1495.3,667.7 1495.5,663.0 1498.6,659.3 1503.2,658.4 1507.3,660.4 1509.9,664.5" fill="#b4c8ec"/><polygon points="1345.9,689.9 1342.3,690.7 1338.8,689.1 1336.7,685.6 1337.1,681.8 1339.9,679.0 1343.5,678.2 1347.0,679.8 1349.1,683.0 1348.7,687.1" fill="#b4c8ec"/><polygon points="1438.4,696.5 1434.4,694.2 1432.2,690.5 1432.8,685.9 1436.0,682.8 1440.2,681.9 1444.2,683.7 1446.6,687.6 1445.9,692.3 1443.0,695.3" fill="#b4c8ec"/><polygon points="1329.6,711.8 1327.0,707.5 1328.0,703.1 1331.1,699.4 1335.6,698.8 1339.9,701.0 1342.1,705.0 1341.5,709.6 1338.2,712.8 1333.5,713.9" fill="#b4c8ec"/><polygon points="1237.9,708.2 1238.6,704.1 1241.3,701.3 1245.4,700.5 1249.2,702.6 1251.2,706.3 1250.4,710.1 1247.6,713.1 1243.5,714.0 1239.6,712.0" fill="#b4c8ec"/><polygon points="1441.6,703.1 1444.7,700.5 1448.8,699.7 1452.5,701.7 1454.3,705.5 1453.7,709.5 1450.4,712.3 1446.4,713.1 1442.8,711.1 1441.2,707.3" fill="#b4c8ec"/><polygon points="1244.1,567.3 1258.8,568.2 1265.2,580.2 1260.6,591.2 1248.7,594.0 1235.8,582.0" fill="#dcdc8c"/><polygon points="1245.2,610.2 1258.1,616.6 1260.9,624.9 1256.3,635.9 1242.5,639.6 1231.4,626.7 1235.1,614.8" fill="#dcdc8c"/><polygon points="1191.9,602.9 1220.8,601.2 1228.7,616.1 1222.5,628.3 1208.5,634.5 1191.0,622.2" fill="#ff9797"/><polygon points="1283.0,581.0 1309.3,590.7 1314.5,607.3 1298.8,634.5 1272.5,633.6 1260.2,599.4" fill="#ee9345"/><polygon points="1338.2,590.7 1349.6,595.1 1354.8,608.2 1350.4,618.7 1338.2,626.6 1324.2,620.5 1319.8,598.6" fill="#ff9797"/><polygon points="1404.7,588.1 1424.9,588.1 1436.3,607.3 1433.6,617.0 1415.3,628.3 1396.0,612.6" fill="#ff9797"/><polygon points="1465.6,616.0 1463.0,624.5 1454.3,628.0 1446.3,624.7 1441.5,616.4 1444.9,607.9 1453.8,604.6 1461.6,607.7" fill="#c59a92"/><polygon points="1360.9,619.6 1384.6,616.1 1402.1,638.9 1396.9,655.5 1382.8,662.5 1357.4,649.4 1353.9,634.5" fill="#ee9345"/><polygon points="1471.3,621.3 1495.8,621.3 1503.7,638.0 1499.3,649.4 1484.5,657.3 1466.9,647.6 1465.2,633.6" fill="#ff9797"/><polygon points="1417.0,640.6 1439.8,631.9 1451.2,644.1 1451.2,654.6 1443.3,665.1 1431.9,668.6 1417.9,659.9" fill="#ff9797"/><polygon points="1295.8,652.7 1292.9,661.7 1284.8,664.3 1277.7,660.6 1274.9,653.6 1278.0,645.9 1285.3,642.6 1292.4,645.7" fill="#c59a92"/><polygon points="1310.1,642.4 1332.0,642.4 1339.9,659.9 1329.4,675.7 1306.6,671.3 1303.1,656.4" fill="#ff9797"/><polygon points="1247.1,648.5 1262.0,647.6 1276.0,667.8 1272.5,677.4 1261.1,685.3 1238.3,672.1" fill="#ff9797"/><polygon points="1372.7,670.2 1370.7,677.9 1361.9,681.8 1355.3,678.0 1351.9,670.6 1354.3,663.4 1362.4,660.9 1368.9,663.3" fill="#c59a92"/><polygon points="1215.5,652.9 1224.3,657.3 1231.3,672.1 1221.7,689.7 1199.8,689.7 1191.0,677.4 1192.8,661.6" fill="#ff9797"/><polygon points="1391.6,672.1 1409.1,664.3 1418.8,667.8 1428.4,684.4 1418.8,699.3 1400.4,700.2 1389.9,690.5" fill="#ff9797"/><polygon points="1334.2,689.5 1330.4,697.4 1323.9,700.5 1315.6,696.5 1313.2,690.3 1315.3,682.0 1323.3,678.6 1330.5,681.5" fill="#c59a92"/><polygon points="1471.3,671.3 1502.0,683.5 1505.5,696.7 1497.6,712.4 1464.3,712.4 1454.7,696.7" fill="#ee9345"/><polygon points="1520.0,528.5 1542.8,525.0 1556.8,537.2 1558.5,554.8 1549.8,568.8 1527.9,569.7 1516.5,549.5" fill="#ff9797"/><polygon points="1590.1,516.4 1609.3,528.7 1611.1,539.0 1592.7,556.5 1579.6,546.0 1571.7,533.0" fill="#ff9797"/><polygon points="1625.5,521.1 1643.0,520.1 1651.2,533.9 1646.6,546.6 1628.2,547.5 1622.7,532.1" fill="#dcdc8c"/><polygon points="1698.7,520.8 1721.5,520.8 1729.4,535.7 1723.2,549.5 1704.0,554.8 1691.7,534.8" fill="#ff9797"/><polygon points="1761.8,521.7 1786.3,516.4 1798.6,535.5 1790.7,552.1 1765.3,547.8 1757.4,535.7" fill="#ff9797"/><polygon points="1759.0,555.2 1756.8,558.8 1752.7,560.2 1748.9,559.2 1746.3,555.6 1746.2,551.6 1748.5,548.1 1752.5,546.5 1756.5,547.9 1758.9,550.9" fill="#b4c8ec"/><polygon points="1839.0,557.5 1834.8,558.9 1831.0,557.5 1828.3,554.2 1828.5,550.3 1830.7,546.9 1834.7,545.5 1838.6,546.4 1841.2,549.9 1841.3,554.0" fill="#b4c8ec"/><polygon points="1550.5,589.5 1546.7,588.1 1544.4,585.2 1544.5,581.3 1546.7,578.3 1550.4,576.9 1553.9,578.2 1556.2,581.2 1556.1,585.2 1554.0,588.1" fill="#b4c8ec"/><polygon points="1637.4,596.2 1635.1,593.1 1634.9,588.9 1637.6,585.5 1641.6,584.5 1645.4,585.8 1647.7,589.0 1647.8,593.1 1645.1,596.6 1641.3,597.8" fill="#b4c8ec"/><polygon points="1678.9,614.9 1679.1,611.2 1681.5,608.2 1684.9,607.3 1688.3,608.5 1690.3,611.4 1690.1,615.2 1687.9,617.9 1684.6,619.0 1681.2,617.8" fill="#b4c8ec"/><polygon points="1693.5,624.2 1695.7,621.4 1699.1,620.5 1702.1,621.7 1704.1,624.6 1703.9,628.0 1701.7,630.6 1698.5,631.6 1695.3,630.3 1693.3,627.4" fill="#b4c8ec"/><polygon points="1746.4,630.0 1750.4,628.8 1754.6,630.3 1756.9,634.3 1756.5,638.6 1753.9,641.9 1749.6,643.1 1745.5,641.2 1743.1,637.6 1743.7,633.1" fill="#b4c8ec"/><polygon points="1814.3,626.0 1818.6,628.0 1821.0,632.3 1820.6,636.9 1817.5,640.8 1812.9,641.7 1808.2,639.9 1805.6,635.6 1806.1,631.0 1809.3,627.4" fill="#b4c8ec"/><polygon points="1848.9,629.5 1850.6,632.7 1850.4,636.3 1847.8,639.1 1844.3,639.9 1841.1,638.4 1839.2,635.1 1839.7,631.7 1841.9,628.9 1845.6,628.2" fill="#b4c8ec"/><polygon points="1802.4,647.2 1802.0,651.3 1799.2,654.5 1795.0,655.2 1791.2,653.3 1789.2,649.8 1789.7,645.8 1792.5,642.5 1796.8,641.7 1800.6,643.7" fill="#b4c8ec"/><polygon points="1533.2,679.9 1530.7,682.6 1527.2,683.2 1523.9,681.6 1522.0,678.3 1522.7,674.8 1525.2,672.2 1528.5,671.7 1532.0,673.1 1533.7,676.3" fill="#b4c8ec"/><polygon points="1555.9,689.7 1552.3,690.3 1549.0,688.5 1547.5,685.3 1548.1,681.8 1550.6,679.2 1554.2,678.7 1557.3,680.2 1559.1,683.4 1558.6,687.2" fill="#b4c8ec"/><polygon points="1667.7,712.2 1664.0,710.0 1662.3,706.2 1662.9,702.3 1665.9,699.3 1670.1,698.9 1673.6,700.7 1675.7,704.4 1674.7,708.6 1671.9,711.5" fill="#b4c8ec"/><polygon points="1835.3,707.1 1833.7,702.1 1834.1,696.1 1838.8,692.2 1844.0,692.4 1849.0,694.3 1851.3,699.9 1850.5,705.0 1846.0,709.3 1841.1,709.8" fill="#b4c8ec"/><polygon points="1620.7,549.5 1636.5,555.6 1642.6,568.8 1630.4,588.1 1612.0,584.6 1602.3,569.7 1607.6,556.5" fill="#ff9797"/><polygon points="1667.2,548.6 1683.8,548.6 1697.8,570.5 1681.2,591.6 1657.5,583.7 1656.7,560.0" fill="#ff9797"/><polygon points="1711.8,558.3 1741.6,556.5 1749.5,571.4 1746.9,580.2 1734.6,592.4 1710.1,581.0 1708.3,567.0" fill="#ff9797"/><polygon points="1802.9,557.4 1814.3,565.3 1819.6,576.7 1816.1,585.4 1800.3,595.1 1783.7,584.6 1781.0,570.5" fill="#ff9797"/><polygon points="1773.5,578.7 1770.8,585.9 1762.9,589.5 1755.9,585.4 1753.6,578.1 1755.9,570.9 1762.8,568.0 1770.6,570.9" fill="#c59a92"/><polygon points="1850.5,576.5 1846.9,584.3 1840.0,586.6 1832.0,583.3 1829.6,576.3 1832.9,569.5 1840.3,566.3 1847.7,569.3" fill="#c59a92"/><polygon points="1574.3,561.8 1595.3,568.8 1600.6,582.8 1594.5,597.7 1583.9,602.9 1562.0,592.4 1561.2,572.3" fill="#ff9797"/><polygon points="1497.6,591.6 1506.3,580.2 1520.0,578.4 1530.5,589.8 1535.8,600.3 1530.5,608.2 1514.7,616.1 1502.5,609.1" fill="#ff9797"/><polygon points="1634.5,606.8 1631.8,616.2 1621.3,618.8 1613.8,615.7 1608.8,606.1 1611.7,597.5 1622.7,594.1 1631.4,597.0" fill="#c59a92"/><polygon points="1570.7,611.7 1566.7,619.1 1559.9,621.4 1553.1,618.6 1550.6,611.2 1553.2,603.8 1560.2,601.5 1566.6,604.4" fill="#c59a92"/><polygon points="1713.6,590.9 1725.5,596.5 1729.2,605.7 1724.6,617.6 1705.3,615.8 1699.8,603.8 1702.5,596.5" fill="#dcdc8c"/><polygon points="1753.6,611.2 1750.2,618.3 1742.5,620.7 1735.9,617.3 1733.4,611.1 1736.1,603.2 1743.7,600.5 1750.7,604.1" fill="#c59a92"/><polygon points="1829.2,591.6 1841.5,595.1 1849.4,610.0 1835.3,629.2 1824.8,626.6 1811.7,610.8 1817.8,598.6" fill="#ff9797"/><polygon points="1770.5,598.6 1788.0,598.6 1802.9,621.3 1800.3,633.6 1770.5,642.4 1755.6,621.3" fill="#ee9345"/><polygon points="1590.1,607.3 1602.3,610.8 1615.5,630.1 1604.1,651.1 1576.9,645.9 1574.3,616.1" fill="#ee9345"/><polygon points="1659.3,608.2 1689.1,633.6 1688.2,641.5 1660.2,670.4 1631.2,653.8 1626.9,636.2" fill="#ee9345"/><polygon points="1513.0,628.3 1520.0,625.7 1542.8,625.7 1562.0,651.1 1556.8,663.4 1541.0,674.8 1520.0,661.6 1509.5,647.6" fill="#ee9345"/><polygon points="1707.5,634.5 1726.7,627.5 1743.4,649.4 1738.1,666.9 1710.1,666.0 1701.3,644.1" fill="#ff9797"/><polygon points="1701.4,662.0 1699.0,668.5 1691.7,672.1 1685.3,668.9 1681.8,661.3 1684.0,654.5 1691.0,651.3 1698.8,654.9" fill="#c59a92"/><polygon points="1758.3,655.5 1778.4,645.9 1796.8,668.6 1792.4,677.4 1776.7,687.0 1760.9,677.4 1756.5,665.1" fill="#ff9797"/><polygon points="1803.8,659.9 1824.0,645.0 1843.2,659.9 1840.6,670.4 1828.3,685.3 1807.3,675.7" fill="#ff9797"/><polygon points="1581.3,653.8 1605.8,655.5 1611.1,664.3 1609.3,675.7 1601.5,687.0 1587.4,687.0 1574.3,673.0" fill="#ff9797"/><polygon points="1619.9,670.4 1640.9,672.1 1647.0,688.8 1640.9,701.9 1623.4,707.2 1609.3,694.9" fill="#ff9797"/><polygon points="1674.8,687.5 1672.1,694.7 1665.0,697.2 1657.2,694.2 1653.9,687.8 1657.7,679.5 1664.2,676.5 1672.0,680.5" fill="#c59a92"/><polygon points="1695.2,674.8 1710.1,679.2 1718.0,691.4 1712.7,705.4 1688.2,708.9 1679.4,690.5 1682.9,680.9" fill="#ff9797"/><polygon points="1730.2,681.8 1753.9,677.4 1767.9,697.5 1758.3,715.9 1735.5,715.9 1727.6,696.7" fill="#ff9797"/><polygon points="1191.0,703.5 1206.8,694.7 1224.3,697.4 1235.7,716.6 1227.8,733.3 1215.5,739.4 1200.6,735.9 1191.0,724.5" fill="#ff9797"/><polygon points="1256.7,701.0 1279.5,684.4 1297.9,697.5 1299.6,712.3 1289.1,724.5 1273.3,728.0 1260.2,719.3" fill="#ff9797"/><polygon points="1348.7,702.8 1372.3,685.3 1383.7,689.7 1394.2,708.8 1393.4,715.8 1373.2,730.7 1354.8,724.5" fill="#ee9345"/><polygon points="1258.9,736.3 1259.0,732.8 1261.5,730.0 1265.0,729.1 1268.4,730.6 1270.2,733.7 1269.9,737.4 1267.7,740.0 1264.1,741.0 1260.7,739.5" fill="#b4c8ec"/><polygon points="1384.3,738.7 1386.7,735.8 1390.4,734.8 1393.8,736.6 1395.9,740.0 1395.7,743.6 1393.0,746.5 1389.2,747.2 1385.6,745.7 1383.9,742.6" fill="#b4c8ec"/><polygon points="1455.5,718.4 1459.0,717.9 1461.9,719.2 1463.5,722.1 1463.1,725.7 1460.9,728.0 1457.4,728.9 1454.4,727.3 1452.7,724.3 1453.2,720.9" fill="#b4c8ec"/><polygon points="1306.8,781.3 1310.8,783.4 1313.0,787.1 1312.2,791.6 1309.0,794.8 1304.6,795.7 1300.8,793.8 1298.7,789.8 1299.3,785.4 1302.5,782.0" fill="#b4c8ec"/><polygon points="1379.4,775.9 1381.8,780.0 1381.1,784.5 1377.5,787.9 1372.8,788.6 1368.6,786.4 1366.7,782.2 1367.3,777.6 1370.7,774.2 1375.3,773.8" fill="#b4c8ec"/><polygon points="1394.6,802.7 1393.4,807.3 1389.9,810.8 1385.0,811.7 1380.6,809.3 1378.4,804.9 1379.3,799.8 1382.9,796.5 1387.7,795.9 1392.2,797.9" fill="#b4c8ec"/><polygon points="1246.5,861.5 1243.5,864.3 1239.8,864.6 1236.2,862.8 1234.7,859.4 1235.5,855.5 1238.1,852.9 1242.2,852.5 1245.3,854.2 1247.2,857.6" fill="#b4c8ec"/><polygon points="1273.1,868.5 1268.3,869.1 1264.2,866.4 1262.4,862.5 1263.2,857.7 1267.0,854.7 1271.4,854.2 1275.4,856.3 1277.5,860.6 1276.4,865.1" fill="#b4c8ec"/><polygon points="1317.6,869.2 1314.8,867.5 1313.3,864.2 1314.1,860.9 1316.8,858.6 1320.1,858.3 1323.1,860.1 1324.4,863.2 1323.7,866.5 1321.0,868.9" fill="#b4c8ec"/><polygon points="1503.2,863.3 1501.8,859.8 1502.9,856.0 1505.6,853.6 1509.5,853.4 1512.7,855.5 1514.2,858.9 1513.3,862.8 1510.5,865.2 1506.6,865.4" fill="#b4c8ec"/><polygon points="1423.1,710.5 1445.0,721.0 1447.7,730.7 1437.2,749.0 1421.4,749.9 1412.6,742.0 1408.2,722.8" fill="#ff9797"/><polygon points="1475.4,718.5 1489.2,720.3 1496.6,734.1 1492.0,744.2 1480.0,750.6 1469.0,746.0 1463.5,735.0" fill="#dcdc8c"/><polygon points="1306.6,713.1 1322.4,713.1 1342.5,728.9 1346.9,744.7 1327.7,774.4 1306.6,776.2 1282.1,749.9" fill="#ee9345"/><polygon points="1360.5,737.0 1376.2,737.0 1383.5,749.9 1378.0,761.8 1366.0,765.5 1352.2,751.7" fill="#dcdc8c"/><polygon points="1247.9,738.5 1266.3,747.3 1269.8,757.8 1265.5,768.3 1247.9,777.1 1236.6,770.9 1231.3,757.8" fill="#ff9797"/><polygon points="1204.8,752.7 1216.8,757.3 1222.3,767.4 1217.7,776.6 1209.4,782.2 1194.7,773.9 1193.8,761.0" fill="#dcdc8c"/><polygon points="1297.2,777.4 1293.8,784.0 1286.8,787.4 1279.2,784.8 1275.9,777.8 1280.0,769.7 1286.8,766.9 1293.0,769.8" fill="#c59a92"/><polygon points="1403.9,753.4 1415.3,757.8 1423.1,774.4 1417.9,785.8 1406.5,793.7 1386.3,784.1 1388.1,759.6" fill="#ff9797"/><polygon points="1461.7,749.9 1483.6,757.8 1494.1,781.5 1468.7,813.9 1435.4,798.1 1436.3,763.1" fill="#ee9345"/><polygon points="1333.8,774.4 1348.7,775.3 1359.2,786.7 1359.2,799.0 1347.8,813.0 1323.3,805.1 1319.8,788.5" fill="#ff9797"/><polygon points="1222.5,781.5 1243.6,792.8 1246.2,802.5 1227.8,826.1 1212.0,823.5 1202.4,810.4 1204.1,791.1" fill="#ff9797"/><polygon points="1267.2,785.8 1287.4,797.2 1289.1,805.1 1271.6,823.5 1253.2,813.0 1252.3,802.5" fill="#ff9797"/><polygon points="1509.4,807.1 1506.1,817.1 1496.8,820.8 1488.3,817.0 1485.4,806.8 1488.6,797.9 1497.5,795.0 1506.1,799.0" fill="#c59a92"/><polygon points="1400.4,802.5 1417.0,799.0 1432.8,813.9 1433.6,820.9 1426.6,833.1 1413.5,839.3 1396.0,826.1" fill="#ff9797"/><polygon points="1248.8,817.4 1271.6,829.6 1273.3,834.9 1264.6,849.8 1240.1,845.4 1235.7,833.1 1238.3,823.5" fill="#ff9797"/><polygon points="1294.4,808.6 1325.9,816.5 1332.9,831.4 1303.1,863.8 1285.6,856.8 1276.9,845.4" fill="#ee9345"/><polygon points="1374.1,816.5 1382.8,820.9 1393.4,836.6 1385.5,851.5 1370.6,855.9 1360.1,847.2 1354.8,830.5" fill="#ff9797"/><polygon points="1457.3,818.2 1480.1,820.0 1489.7,837.5 1466.9,861.2 1451.2,853.3 1445.0,843.7 1447.7,825.3" fill="#ff9797"/><polygon points="1202.2,837.6 1216.0,842.2 1221.5,852.3 1216.9,863.4 1208.6,868.0 1193.9,860.6 1191.1,851.4" fill="#dcdc8c"/><polygon points="1359.5,859.7 1356.5,867.0 1347.5,870.8 1340.1,868.1 1336.4,859.0 1339.8,852.1 1347.3,848.3 1355.0,851.1" fill="#c59a92"/><polygon points="1413.3,856.5 1410.4,864.6 1403.0,867.0 1395.9,864.5 1392.0,857.6 1394.7,849.4 1402.2,846.1 1411.2,849.3" fill="#c59a92"/><polygon points="1442.8,856.0 1439.5,863.1 1432.1,866.6 1424.2,864.0 1420.8,856.2 1424.0,848.0 1431.5,844.9 1440.1,848.5" fill="#c59a92"/><polygon points="1498.2,860.6 1494.9,867.4 1488.2,870.3 1480.9,867.7 1477.0,860.4 1480.8,853.2 1487.4,850.1 1495.5,853.0" fill="#c59a92"/><polygon points="1504.2,714.0 1513.0,698.2 1530.5,694.7 1543.7,707.0 1539.3,722.8 1527.0,731.5 1513.0,728.0" fill="#ff9797"/><polygon points="1551.5,705.2 1566.4,694.7 1597.1,707.0 1599.7,717.5 1593.6,734.2 1557.7,737.7 1548.9,718.4" fill="#ee9345"/><polygon points="1657.7,714.9 1654.1,721.4 1646.8,725.2 1640.2,721.9 1637.0,714.1 1639.3,707.7 1646.9,705.2 1653.9,707.9" fill="#c59a92"/><polygon points="1686.1,723.8 1682.7,724.4 1679.6,723.1 1677.8,720.1 1678.1,716.8 1680.4,714.2 1683.8,713.3 1687.0,714.7 1688.7,717.7 1688.4,721.2" fill="#b4c8ec"/><polygon points="1774.0,714.9 1793.3,696.5 1814.3,693.9 1835.3,716.6 1816.1,746.4 1807.3,748.2 1784.5,740.3" fill="#ee9345"/><polygon points="1716.8,725.3 1713.8,735.2 1704.7,737.3 1696.1,733.5 1692.4,725.8 1695.9,715.8 1704.8,712.3 1713.9,715.9" fill="#c59a92"/><polygon points="1850.0,742.0 1846.8,750.1 1840.3,752.3 1831.9,749.8 1829.3,742.6 1832.0,734.4 1839.7,731.5 1847.0,734.1" fill="#c59a92"/><polygon points="1612.9,718.4 1629.5,717.5 1640.0,734.2 1626.9,751.7 1604.1,741.2 1603.2,732.4" fill="#ff9797"/><polygon points="1657.5,724.5 1672.4,721.0 1688.2,742.9 1672.4,761.3 1656.7,757.8 1650.5,730.7" fill="#ff9797"/><polygon points="1506.3,745.5 1520.0,742.9 1548.0,749.9 1553.3,764.8 1538.4,788.5 1516.5,784.1 1504.2,780.6" fill="#ee9345"/><polygon points="1585.5,754.4 1582.9,762.4 1573.6,766.7 1564.5,762.8 1561.0,753.5 1565.3,745.7 1573.6,742.4 1581.9,746.4" fill="#c59a92"/><polygon points="1616.1,759.3 1615.2,764.7 1610.8,768.1 1605.4,768.7 1601.2,765.7 1598.7,760.8 1600.1,755.8 1604.4,752.1 1609.5,751.7 1614.2,754.1" fill="#b4c8ec"/><polygon points="1698.3,771.8 1694.9,774.5 1691.1,774.8 1687.3,772.7 1685.9,768.8 1686.8,764.7 1690.1,762.1 1694.3,761.7 1697.8,763.9 1699.2,767.8" fill="#b4c8ec"/><polygon points="1662.5,779.4 1658.4,779.5 1655.3,777.4 1653.9,773.9 1654.9,770.2 1657.9,767.6 1661.8,767.6 1665.0,769.8 1666.3,773.4 1665.2,777.0" fill="#b4c8ec"/><polygon points="1521.0,802.3 1517.6,800.1 1516.5,796.5 1517.4,792.8 1520.5,790.4 1524.3,790.5 1527.5,792.5 1528.8,796.0 1527.6,799.8 1524.8,802.3" fill="#b4c8ec"/><polygon points="1543.3,812.1 1542.1,808.7 1543.3,805.1 1546.1,803.1 1549.7,802.9 1552.8,805.2 1553.8,808.5 1552.7,812.0 1549.9,814.2 1546.3,814.2" fill="#b4c8ec"/><polygon points="1553.1,824.0 1554.2,820.8 1557.0,819.0 1560.3,819.0 1562.8,821.0 1564.0,824.1 1562.7,827.2 1560.1,829.2 1557.0,829.2 1554.1,827.2" fill="#b4c8ec"/><polygon points="1549.4,852.2 1552.6,849.7 1556.5,850.0 1559.6,852.3 1561.0,856.1 1559.5,859.8 1556.4,862.0 1552.4,861.9 1549.4,859.7 1548.0,855.8" fill="#b4c8ec"/><polygon points="1761.4,771.4 1764.3,771.4 1766.8,773.5 1767.6,776.3 1766.6,779.3 1764.1,781.1 1760.9,780.9 1758.4,779.1 1757.6,775.9 1758.6,773.0" fill="#b4c8ec"/><polygon points="1801.6,797.2 1804.1,799.4 1805.0,802.8 1803.6,806.1 1800.9,807.8 1797.6,807.6 1794.7,805.4 1794.0,802.3 1795.1,798.8 1797.9,797.1" fill="#b4c8ec"/><polygon points="1792.3,838.4 1793.2,841.3 1792.0,844.2 1789.2,846.0 1786.1,845.6 1783.7,843.6 1783.0,840.7 1784.1,837.8 1786.9,836.2 1790.0,836.3" fill="#b4c8ec"/><polygon points="1802.7,860.0 1800.5,865.0 1796.2,867.4 1790.7,867.1 1787.0,863.8 1785.9,858.7 1787.9,853.8 1792.5,851.4 1797.5,851.5 1801.4,855.0" fill="#b4c8ec"/><polygon points="1849.0,864.9 1845.1,867.4 1840.0,866.7 1836.4,863.4 1835.3,858.7 1837.2,853.8 1841.8,851.7 1846.5,852.2 1850.3,855.2 1851.2,860.2" fill="#b4c8ec"/><polygon points="1727.6,721.0 1739.0,720.1 1765.3,749.9 1754.8,774.4 1718.0,771.8 1708.3,753.4" fill="#ee9345"/><polygon points="1793.5,757.2 1789.7,765.3 1782.2,769.7 1774.9,766.0 1771.2,757.6 1774.2,749.3 1782.1,746.4 1789.6,749.2" fill="#c59a92"/><polygon points="1809.1,756.9 1833.6,756.9 1845.0,778.0 1835.3,795.5 1812.6,799.0 1798.6,772.7" fill="#ee9345"/><polygon points="1576.1,775.3 1590.1,784.1 1592.7,794.6 1575.2,813.9 1558.5,805.1 1558.5,783.2" fill="#ff9797"/><polygon points="1636.5,766.6 1661.9,798.1 1658.4,806.9 1627.7,825.3 1602.3,802.5 1605.8,778.8" fill="#ee9345"/><polygon points="1689.1,778.8 1722.3,806.9 1710.1,829.6 1702.2,831.4 1673.3,821.8 1668.9,796.3" fill="#ee9345"/><polygon points="1736.7,788.3 1734.2,797.1 1726.6,799.6 1717.7,796.1 1713.8,789.3 1717.8,781.2 1726.1,776.5 1734.6,780.9" fill="#c59a92"/><polygon points="1767.0,789.3 1784.5,792.8 1790.7,807.7 1783.7,823.5 1767.9,826.1 1753.0,810.4" fill="#ff9797"/><polygon points="1747.3,823.4 1744.7,829.8 1736.8,833.1 1729.0,829.6 1725.4,822.6 1729.0,815.2 1736.1,812.4 1743.7,814.4" fill="#c59a92"/><polygon points="1520.0,810.4 1542.8,820.0 1546.3,829.6 1540.1,847.2 1520.0,853.3 1509.5,840.1 1507.7,819.1" fill="#ff9797"/><polygon points="1580.4,817.4 1605.8,824.4 1612.0,841.9 1602.3,857.7 1581.3,864.7 1562.9,843.7" fill="#ee9345"/><polygon points="1648.8,835.8 1672.4,828.8 1687.3,848.9 1675.9,868.2 1654.0,869.1 1642.6,848.9" fill="#ff9797"/><polygon points="1706.5,836.0 1719.4,838.8 1725.8,852.5 1712.9,866.3 1701.9,863.6 1695.4,850.7 1699.1,839.7" fill="#dcdc8c"/><polygon points="1809.1,815.6 1825.7,812.1 1838.9,829.6 1832.7,845.4 1817.8,852.4 1798.6,833.1" fill="#ff9797"/><polygon points="1746.0,834.9 1761.8,830.5 1777.5,845.4 1776.7,857.7 1762.6,867.3 1746.0,859.4" fill="#ff9797"/><polygon points="1637.3,858.6 1634.4,866.7 1625.7,870.5 1617.0,866.7 1612.6,858.7 1616.5,850.2 1625.1,847.1 1633.5,849.1" fill="#c59a92"/></g><g fill="none" stroke="#b51d22" stroke-width="1.300" stroke-linejoin="round"><polygon points="680.5,242.9 679.7,245.7 677.2,247.3 674.5,247.5 672.1,245.7 671.1,242.8 672.1,240.1 674.4,238.5 677.3,238.4 679.7,240.1"/><polygon points="661.9,272.0 654.1,281.9 640.6,283.1 633.6,272.7 635.6,260.7 646.0,253.6 658.8,260.9"/><polygon points="692.4,249.4 708.1,265.4 704.1,284.9 684.5,289.7 670.2,279.3 673.9,256.8"/><polygon points="644.8,299.8 637.9,315.3 619.7,319.8 604.8,309.6 603.6,291.0 619.4,278.0 636.5,282.0"/><polygon points="682.6,314.3 671.6,331.0 654.1,327.7 645.2,310.7 656.6,295.3 676.7,299.6"/><polygon points="741.9,318.8 728.3,330.1 711.1,328.0 703.0,312.9 708.3,297.3 724.8,290.1 741.3,299.8"/><polygon points="586.0,304.5 588.9,302.8 592.3,303.1 594.8,305.3 595.7,308.6 594.4,311.8 591.4,313.6 587.9,313.1 585.2,310.8 584.6,307.7"/><polygon points="575.7,309.9 578.7,310.2 580.9,312.4 581.4,315.5 580.1,318.3 577.5,319.7 574.4,319.2 572.2,317.2 571.5,314.3 572.8,311.4"/><polygon points="696.1,308.7 698.3,311.2 698.9,314.2 697.4,316.8 694.7,318.3 691.6,317.9 689.3,315.7 688.8,312.7 690.3,309.7 693.1,308.5"/><polygon points="695.0,324.8 695.5,327.7 694.3,330.4 691.6,331.7 688.7,331.2 686.8,329.1 686.3,326.2 687.6,323.8 690.2,322.4 693.0,322.8"/><polygon points="632.8,332.6 631.3,335.4 628.5,336.8 625.5,336.2 623.4,334.0 623.0,330.8 624.3,328.2 627.1,326.8 630.3,327.3 632.3,329.6"/><polygon points="753.9,304.4 751.0,305.9 748.0,305.2 745.9,302.9 745.4,299.7 747.0,296.9 749.7,295.8 753.0,296.4 755.0,298.5 755.3,301.8"/><polygon points="798.7,308.7 795.5,308.1 793.6,305.8 793.2,302.7 794.8,300.0 797.6,298.8 800.7,299.3 802.8,301.6 803.1,304.7 801.5,307.4"/><polygon points="751.5,323.3 749.2,320.8 748.9,317.5 750.8,314.4 753.9,313.0 757.0,313.9 759.5,316.4 759.8,319.9 757.8,322.8 754.8,324.2"/><polygon points="734.3,347.8 734.0,344.3 735.8,341.5 739.0,340.3 742.3,341.0 744.6,343.6 744.8,347.0 743.1,350.0 739.8,351.3 736.5,350.5"/><polygon points="575.2,342.4 570.4,352.5 562.5,355.3 554.1,352.3 549.0,343.8 553.1,335.0 563.0,329.9 570.3,333.9"/><polygon points="656.9,350.7 652.9,358.7 641.3,362.5 632.8,354.4 633.3,343.9 642.0,337.5 651.6,340.0"/><polygon points="598.4,319.0 625.0,343.2 618.0,366.8 608.9,367.7 582.3,358.0 578.8,337.9"/><polygon points="677.2,335.8 701.8,340.5 710.9,358.9 701.8,379.9 680.7,385.2 664.1,366.8"/><polygon points="765.7,325.6 784.4,323.0 804.8,345.8 789.3,376.4 764.8,371.2 751.7,353.7"/><polygon points="726.3,237.1 722.5,243.4 713.9,246.6 706.5,240.7 706.7,231.4 714.2,226.7 722.6,228.0"/><polygon points="757.4,231.9 751.1,237.1 741.9,236.0 736.6,229.4 739.5,220.0 749.4,217.3 756.0,222.7"/><polygon points="799.6,234.9 794.5,247.0 779.5,252.4 768.0,243.0 767.2,228.4 779.2,216.6 793.2,220.8"/><polygon points="715.8,253.8 743.8,243.6 763.4,264.3 752.9,285.3 722.8,282.2"/><polygon points="776.9,269.5 792.1,283.9 786.2,302.2 764.4,299.6 760.2,279.8"/><polygon points="746.3,375.7 737.6,387.2 724.0,385.9 716.7,373.6 723.3,362.1 739.2,363.1"/><polygon points="533.5,362.4 536.9,361.9 540.3,363.5 541.8,366.7 541.6,370.3 538.8,372.9 535.3,373.4 532.1,371.8 530.4,368.6 530.9,365.1"/><polygon points="834.5,209.0 837.7,210.4 839.1,213.5 838.5,216.9 836.2,219.5 832.9,219.8 829.7,218.4 828.2,215.1 828.6,211.9 831.1,209.3"/><polygon points="824.7,224.6 820.9,234.4 810.9,237.3 802.1,230.3 801.3,219.3 809.6,213.0 820.9,215.5"/><polygon points="881.3,240.7 870.4,258.6 850.7,258.7 841.5,245.5 843.5,226.3 858.5,217.4 876.3,224.1"/><polygon points="898.8,247.5 896.6,249.6 893.4,249.9 890.7,248.5 889.5,245.6 890.1,242.5 892.4,240.3 895.5,240.1 898.2,241.6 899.4,244.6"/><polygon points="916.7,241.8 913.7,242.0 911.0,240.5 909.8,237.5 910.5,234.5 912.8,232.6 915.9,232.2 918.6,233.8 919.7,236.7 919.0,239.7"/><polygon points="936.8,262.2 928.2,276.6 912.5,280.8 900.8,271.1 900.5,255.1 912.5,245.6 930.5,248.7"/><polygon points="983.8,277.3 969.9,293.0 952.6,290.7 940.4,274.7 948.0,257.5 963.2,250.2 978.6,259.2"/><polygon points="987.6,270.2 988.5,267.1 991.3,265.1 994.6,264.9 997.2,266.8 998.4,269.8 997.7,273.1 995.0,275.2 991.6,275.3 988.8,273.4"/><polygon points="888.8,284.6 876.5,293.5 862.8,287.6 860.1,273.6 872.8,263.6 885.5,267.7"/><polygon points="941.6,302.3 930.5,314.6 915.7,311.6 911.4,299.6 921.7,287.2 935.5,289.4"/><polygon points="801.2,260.8 820.5,244.2 845.0,248.6 851.2,273.1 844.2,294.1 806.5,294.1 800.4,280.1"/><polygon points="810.0,308.1 841.5,306.4 850.3,325.6 832.8,346.7 810.0,336.1 804.7,322.1"/><polygon points="888.8,295.9 907.2,301.1 918.6,323.9 904.6,347.5 869.6,341.4 866.1,309.9"/><polygon points="930.9,316.9 961.5,313.4 976.4,337.9 960.7,363.3 948.4,363.3 923.9,343.2"/><polygon points="994.8,290.6 1021.1,301.1 1022.9,315.1 1016.7,326.5 991.3,330.0 980.8,318.6 980.8,302.9"/><polygon points="1036.4,318.3 1034.0,315.9 1033.4,312.9 1034.6,309.9 1037.5,308.1 1040.9,308.5 1043.3,310.6 1044.0,314.0 1042.5,317.0 1039.6,318.6"/><polygon points="1029.5,348.5 1017.7,360.3 1004.9,357.1 1000.3,342.5 1010.2,331.2 1024.2,334.6"/><polygon points="1043.0,323.9 1060.5,322.1 1072.8,341.4 1067.5,355.4 1043.0,355.4 1039.5,336.1"/><polygon points="987.3,349.6 990.4,347.9 994.1,348.4 996.6,350.9 997.2,354.6 995.5,357.7 992.4,359.6 988.6,358.8 986.1,356.3 985.6,352.8"/><polygon points="917.0,352.6 920.3,353.0 922.7,355.7 923.1,359.1 921.6,362.2 918.6,363.6 915.0,363.0 912.8,360.6 912.4,357.1 913.8,354.2"/><polygon points="820.9,348.0 823.7,351.0 824.0,354.8 822.1,358.3 818.6,359.9 814.8,359.4 812.0,356.3 811.5,352.5 813.5,348.8 817.1,347.4"/><polygon points="889.4,360.0 884.6,369.0 875.9,371.2 869.1,366.0 869.3,356.4 876.6,349.9 885.8,352.6"/><polygon points="938.9,370.9 936.6,374.3 933.1,375.8 929.2,374.8 926.9,372.0 926.5,367.9 928.4,364.7 931.9,363.1 935.9,363.9 938.5,367.0"/><polygon points="544.1,377.1 552.8,364.0 577.4,365.7 585.2,381.5 580.0,394.7 554.6,400.8"/><polygon points="602.6,382.3 599.4,381.3 597.4,378.8 597.2,375.3 599.1,372.5 602.0,371.2 605.4,372.1 607.6,374.9 607.9,378.2 606.0,381.0"/><polygon points="624.7,373.6 649.2,367.5 658.0,379.8 656.2,392.9 632.5,399.9 625.5,393.8"/><polygon points="679.7,396.1 675.2,403.9 667.0,405.9 661.4,400.4 660.9,392.1 668.4,386.9 676.4,388.6"/><polygon points="796.7,381.2 798.7,378.4 802.1,377.4 805.4,378.4 807.4,381.3 807.5,384.6 805.4,387.6 802.1,388.6 799.0,387.5 796.8,384.6"/><polygon points="682.5,408.7 701.8,392.0 713.1,395.5 721.9,413.0 697.4,431.4"/><polygon points="725.5,391.5 728.5,392.3 730.4,395.0 730.1,398.0 728.2,400.7 725.2,401.5 722.3,400.5 720.6,397.8 720.7,394.6 722.6,392.1"/><polygon points="736.7,406.4 738.5,409.1 738.3,412.4 736.3,415.0 732.9,415.7 729.8,414.6 728.0,411.8 728.2,408.4 730.3,405.8 733.6,405.1"/><polygon points="746.4,386.8 761.3,379.8 779.7,390.3 783.2,399.0 773.6,418.3 752.6,413.9 743.8,404.3"/><polygon points="513.4,393.8 534.4,389.4 548.5,407.8 546.7,418.3 537.9,425.3 521.3,423.6 511.7,407.8"/><polygon points="582.4,409.8 579.0,410.6 575.9,409.2 574.4,406.3 574.7,403.0 577.0,400.4 580.3,399.7 583.2,401.3 584.9,404.1 584.4,407.4"/><polygon points="557.4,418.1 554.1,416.6 552.1,413.4 552.7,409.5 555.0,406.8 559.0,406.2 562.3,407.9 564.1,411.1 563.6,414.7 561.1,417.3"/><polygon points="569.8,423.8 568.4,421.1 568.7,417.6 571.0,415.3 574.2,414.7 577.2,416.2 578.9,419.2 578.5,422.5 575.9,424.8 572.9,425.3"/><polygon points="601.9,400.8 624.7,408.7 630.8,418.3 619.4,440.2 593.1,438.4 586.1,421.8"/><polygon points="653.6,417.4 672.0,427.9 676.3,438.4 670.2,455.1 657.1,460.3 637.8,452.5 634.3,429.7 642.2,420.9"/><polygon points="690.8,436.0 705.5,436.0 712.9,449.8 709.2,459.0 694.5,463.6 684.4,453.5"/><polygon points="736.8,422.7 761.3,423.6 770.1,427.9 776.2,444.6 761.3,469.1 733.3,464.7 725.4,434.9"/><polygon points="507.8,428.9 527.1,430.7 534.4,444.5 527.1,458.3 515.1,462.0 501.3,453.7 498.6,439.0"/><polygon points="554.6,427.1 582.6,433.2 591.7,456.0 565.1,486.6 554.6,484.9 534.4,467.4 541.4,432.3"/><polygon points="621.7,452.8 618.8,460.9 610.3,462.7 603.1,458.1 602.8,449.7 610.5,444.1 617.4,445.7"/><polygon points="591.5,483.1 587.3,483.0 584.0,480.8 582.6,476.8 583.7,472.9 587.1,470.1 591.2,470.3 594.7,472.6 596.0,476.4 594.9,480.3"/><polygon points="648.7,485.6 645.4,482.9 643.9,478.8 645.3,474.6 648.6,472.0 652.8,472.0 656.5,474.5 657.9,478.8 656.7,482.7 653.3,485.3"/><polygon points="604.5,470.0 629.9,466.5 639.6,484.9 633.4,498.0 612.4,500.6 604.5,491.9"/><polygon points="664.1,473.5 705.3,470.0 716.6,491.9 714.0,502.4 686.9,520.8 660.6,495.4"/><polygon points="745.5,472.8 756.6,477.4 760.6,486.6 755.6,499.5 741.8,502.2 730.8,490.3 732.6,481.1"/><polygon points="502.9,471.7 524.8,483.1 527.4,490.1 513.4,511.2 502.9,511.2 487.1,493.6 488.9,484.9"/><polygon points="555.3,500.8 550.9,510.8 541.8,512.2 534.5,506.7 534.2,496.0 541.9,490.8 551.5,492.2"/><polygon points="571.2,490.1 598.4,495.4 602.8,506.8 588.8,526.9 575.6,526.0 561.6,511.2 561.6,504.1"/><polygon points="663.7,513.6 661.1,520.2 652.4,522.1 645.5,517.5 645.5,508.9 651.4,503.2 659.8,505.4"/><polygon points="780.6,491.0 799.9,497.1 807.7,512.9 803.4,525.2 791.1,533.9 771.0,525.2 763.9,509.4"/><polygon points="489.7,527.0 485.7,526.2 482.4,523.4 481.9,519.2 483.7,515.6 487.4,513.5 491.7,514.2 494.3,517.1 495.4,521.1 493.3,525.0"/><polygon points="483.0,541.4 480.4,539.3 479.9,535.8 481.4,532.7 484.6,531.1 487.8,531.6 490.4,534.1 490.8,537.5 489.3,540.6 486.2,542.0"/><polygon points="817.9,364.0 840.7,352.6 862.6,365.7 872.2,380.6 867.8,392.9 838.0,406.9 821.4,393.8"/><polygon points="883.6,383.3 894.1,372.8 911.6,371.9 922.1,388.5 917.7,401.7 902.0,408.7 888.8,402.5"/><polygon points="954.7,374.3 962.0,365.1 984.1,367.0 989.6,378.0 975.8,396.4 956.5,387.2"/><polygon points="998.3,369.2 1025.5,372.8 1031.6,385.9 1017.6,408.7 985.2,397.3 986.9,392.0"/><polygon points="1044.8,376.3 1051.8,365.7 1078.0,367.5 1082.4,379.8 1078.0,392.0 1068.4,397.3 1050.0,388.5"/><polygon points="1045.9,395.5 1046.1,398.8 1044.2,401.5 1041.1,402.8 1038.1,401.7 1035.7,399.2 1035.8,396.0 1037.7,393.1 1040.6,391.8 1043.9,392.9"/><polygon points="1066.9,408.6 1064.9,411.9 1061.0,413.4 1057.3,412.1 1055.0,409.2 1054.9,405.2 1057.0,401.9 1060.7,400.5 1064.6,401.6 1066.8,404.7"/><polygon points="1096.4,391.4 1104.7,394.1 1111.2,406.1 1101.0,419.9 1093.7,419.9 1081.7,407.9 1087.2,396.9"/><polygon points="1111.4,427.0 1108.3,425.8 1106.6,423.5 1106.6,420.2 1108.4,417.6 1111.3,416.8 1114.4,417.7 1116.1,420.2 1116.0,423.4 1114.2,425.8"/><polygon points="1078.7,431.9 1076.3,428.7 1076.5,424.6 1078.9,421.4 1082.6,420.4 1086.1,421.6 1088.4,424.8 1088.5,428.9 1086.2,431.9 1082.4,433.1"/><polygon points="1113.0,442.5 1113.4,439.3 1115.3,436.6 1118.4,435.7 1121.7,436.7 1123.5,439.5 1123.5,443.1 1121.2,445.5 1118.2,446.4 1115.0,445.5"/><polygon points="1118.1,466.1 1120.3,463.3 1124.0,462.3 1127.4,463.6 1129.4,466.7 1129.2,470.3 1126.9,473.2 1123.2,474.0 1119.9,472.7 1117.9,469.7"/><polygon points="1054.0,467.1 1057.4,466.5 1060.8,467.8 1062.8,470.7 1062.5,474.5 1060.1,477.2 1056.6,478.1 1053.2,476.8 1051.3,473.7 1051.5,470.0"/><polygon points="875.2,404.0 880.0,405.6 882.7,410.3 882.2,415.6 878.9,419.4 873.6,420.5 869.2,418.5 866.1,414.1 866.6,409.0 870.3,404.8"/><polygon points="925.4,435.6 927.0,438.3 926.7,441.4 924.7,443.7 921.7,444.4 918.9,443.1 917.2,440.4 917.5,437.2 919.6,434.9 922.7,434.3"/><polygon points="880.8,461.8 880.6,465.5 877.8,468.6 874.1,469.1 870.7,467.6 868.6,464.2 869.1,460.2 871.9,457.4 875.4,456.8 879.2,458.5"/><polygon points="961.5,495.8 958.7,498.6 954.3,499.6 950.8,497.5 948.9,493.8 949.3,489.9 952.2,486.9 956.5,486.0 960.1,488.0 962.2,491.7"/><polygon points="927.1,534.8 922.8,535.7 919.0,533.7 917.0,529.8 917.7,525.6 920.5,522.3 924.9,521.8 928.9,523.8 930.8,527.6 930.2,531.7"/><polygon points="939.6,385.9 950.2,388.5 960.7,407.8 955.4,421.8 936.1,427.9 923.9,421.8 918.6,408.7"/><polygon points="993.7,419.0 990.4,426.5 983.4,429.1 976.2,426.1 973.3,420.0 976.0,411.7 983.9,408.8 990.9,411.9"/><polygon points="787.2,417.4 795.1,404.3 810.0,399.0 819.6,403.4 824.0,413.9 818.8,428.8 810.0,435.8 796.0,432.3"/><polygon points="850.3,410.4 873.9,436.7 869.6,448.1 849.4,459.5 831.9,451.6 826.6,423.6"/><polygon points="892.3,422.7 907.2,429.7 912.5,440.2 904.6,456.8 890.6,458.6 876.6,446.3 880.1,430.6"/><polygon points="965.9,427.1 979.1,437.6 984.3,449.0 959.8,480.5 930.9,462.1 930.0,448.1"/><polygon points="1006.3,430.7 1019.2,446.4 1014.6,457.4 1000.8,462.0 990.7,442.7 995.3,435.3"/><polygon points="1024.6,416.6 1037.8,412.2 1062.3,425.3 1066.7,438.4 1060.5,455.1 1047.4,465.6 1023.7,460.3"/><polygon points="1083.3,439.3 1106.1,440.2 1116.6,457.7 1107.8,474.4 1100.8,478.7 1085.9,476.1 1076.3,467.4 1076.3,448.1"/><polygon points="785.5,448.1 803.0,442.8 815.3,449.8 822.6,462.1 810.0,483.1 799.5,484.9 782.0,472.6"/><polygon points="825.8,476.1 857.3,471.7 876.6,500.6 872.2,516.4 858.2,528.7 827.5,526.0 815.3,507.7"/><polygon points="885.3,477.9 919.5,463.9 940.5,491.9 928.3,516.4 894.1,516.4 888.0,507.7"/><polygon points="988.7,468.2 1008.0,490.1 1001.0,505.0 988.7,510.3 974.7,506.8 967.7,484.0"/><polygon points="1043.0,481.1 1040.5,488.9 1031.8,491.3 1025.5,489.5 1021.7,480.8 1024.9,473.6 1031.8,470.6 1040.4,474.1"/><polygon points="1070.2,477.0 1086.8,496.3 1080.7,509.4 1069.3,514.7 1056.1,509.4 1050.9,488.4"/><polygon points="1115.7,482.2 1136.7,491.9 1136.7,500.6 1128.0,515.5 1107.8,513.8 1101.7,494.5"/><polygon points="1031.6,497.1 1044.8,504.1 1052.6,519.9 1048.3,529.5 1027.2,540.9 1008.8,525.2 1007.1,512.9"/><polygon points="944.6,510.6 955.6,511.5 962.1,519.8 959.3,532.7 950.1,538.2 934.5,523.5"/><polygon points="985.1,532.5 982.0,541.3 973.2,543.6 964.6,537.2 965.0,527.8 972.5,523.1 980.8,524.7"/><polygon points="1085.0,511.1 1097.8,519.4 1102.4,533.2 1096.0,544.2 1072.1,544.2 1066.6,528.6"/><polygon points="1113.0,535.9 1110.7,533.5 1110.5,530.1 1112.2,527.3 1115.1,526.0 1118.3,526.7 1120.6,529.1 1121.0,532.5 1119.4,535.2 1116.3,536.6"/><polygon points="1128.7,537.0 1128.4,533.5 1130.3,530.4 1133.5,529.1 1137.0,529.8 1139.5,532.6 1139.9,536.1 1137.9,539.2 1134.5,540.6 1131.1,540.0"/><polygon points="1049.9,536.0 1051.6,533.1 1054.8,531.9 1058.3,532.9 1060.4,535.3 1060.6,538.8 1058.7,541.7 1055.6,543.1 1052.4,542.0 1050.1,539.4"/><polygon points="503.8,517.1 546.7,519.7 558.1,539.0 556.3,546.0 534.4,574.9 515.2,574.9 493.3,555.6"/><polygon points="572.4,535.6 576.0,536.8 578.1,539.6 578.4,543.2 576.3,546.2 572.9,547.6 569.2,546.5 567.1,543.7 566.9,539.9 568.8,537.0"/><polygon points="606.3,518.9 631.7,510.1 644.8,528.5 639.6,541.6 628.2,548.6 608.9,539.9"/><polygon points="672.7,518.7 685.8,523.1 690.2,533.6 684.9,544.1 668.3,548.5 659.5,537.1 663.9,524.8"/><polygon points="706.1,514.5 734.2,504.0 747.3,511.0 756.9,531.1 751.7,547.8 730.7,560.0 703.5,540.8"/><polygon points="785.2,551.0 781.6,559.5 772.0,562.9 763.6,559.8 759.8,550.3 764.1,541.2 771.7,537.3 780.9,540.8"/><polygon points="606.6,562.7 602.8,561.0 600.7,557.7 600.9,553.9 603.4,550.9 607.0,549.9 610.9,551.2 612.9,554.5 612.8,558.6 610.2,561.6"/><polygon points="485.2,571.3 483.0,568.1 483.5,564.4 485.9,561.6 489.4,560.7 492.6,562.1 494.5,565.4 494.4,568.9 492.0,571.5 488.5,572.4"/><polygon points="485.3,585.5 485.6,582.0 488.0,579.1 491.4,578.3 494.8,579.6 496.8,583.0 496.4,586.4 494.0,589.1 490.5,590.1 487.1,588.5"/><polygon points="549.4,607.9 552.1,605.0 555.7,604.2 559.5,605.8 561.4,609.2 560.9,613.0 558.2,616.2 554.3,616.8 550.8,615.2 548.8,612.0"/><polygon points="495.0,625.4 498.2,624.6 501.4,626.0 503.1,629.0 502.7,632.5 500.2,635.1 497.0,635.7 493.8,634.1 492.1,631.2 492.5,627.8"/><polygon points="714.5,598.4 718.2,600.1 720.0,603.7 719.5,607.7 716.6,610.5 712.7,611.0 709.3,609.4 707.5,605.8 707.9,602.1 710.7,598.9"/><polygon points="696.6,630.2 698.4,633.8 697.8,637.9 694.7,641.0 690.6,641.5 686.9,639.8 685.1,636.2 685.7,632.1 688.6,629.0 692.8,628.5"/><polygon points="713.5,648.9 712.7,652.6 710.0,655.5 706.4,655.9 703.0,653.9 701.3,650.7 702.0,646.8 704.7,644.0 708.5,643.7 711.7,645.5"/><polygon points="741.1,669.2 738.4,671.6 734.9,672.3 731.5,670.4 730.2,666.9 730.9,663.5 733.3,661.0 736.9,660.7 740.2,662.2 741.9,665.7"/><polygon points="580.2,683.7 576.5,684.1 573.3,682.3 571.9,679.0 572.6,675.4 575.4,672.7 579.0,672.5 582.1,674.2 583.7,677.5 582.8,681.3"/><polygon points="800.6,692.6 797.5,690.7 795.9,687.1 796.8,683.2 799.6,680.8 803.5,680.6 806.9,682.5 808.3,686.0 807.5,689.9 804.4,692.1"/><polygon points="743.6,702.8 742.4,699.7 743.4,696.5 745.9,694.3 749.2,694.2 751.8,695.8 753.1,698.9 752.5,702.2 749.9,704.2 746.5,704.6"/><polygon points="580.4,706.5 581.4,702.7 584.5,700.1 588.7,700.0 592.2,702.3 593.8,705.9 592.6,710.1 589.4,712.4 585.1,712.8 581.8,710.3"/><polygon points="709.6,557.3 707.1,564.1 700.1,567.2 692.6,564.0 689.2,558.1 692.9,550.7 699.5,547.6 706.9,549.7"/><polygon points="630.8,556.6 643.7,566.8 646.4,575.0 639.1,587.9 624.4,587.9 614.2,571.4 617.9,562.2"/><polygon points="718.2,565.5 731.1,568.2 737.5,580.2 729.3,593.0 720.1,595.8 708.1,586.6 708.1,571.9"/><polygon points="583.5,555.6 599.3,562.7 610.7,584.6 598.4,609.1 574.7,613.5 553.7,577.5"/><polygon points="657.1,567.0 676.3,565.3 703.5,597.7 696.5,617.0 672.0,628.3 643.1,613.5 638.7,596.8"/><polygon points="746.4,570.5 779.7,568.8 786.7,584.6 770.1,605.6 759.6,605.6 748.2,596.8"/><polygon points="522.2,581.9 541.4,595.1 542.3,603.8 538.8,617.0 509.9,624.0 497.7,602.9 503.8,588.1"/><polygon points="614.2,602.1 624.7,601.2 636.9,609.1 641.3,621.3 638.7,631.9 621.2,641.5 608.9,637.1 601.0,624.8"/><polygon points="728.9,611.7 744.7,612.6 754.3,631.0 752.6,639.7 728.9,651.1 718.4,643.2 714.9,630.1 717.5,619.6"/><polygon points="519.6,627.5 533.6,634.5 537.9,645.0 524.8,664.3 509.0,659.9 502.0,640.6"/><polygon points="570.4,617.0 595.8,644.1 582.6,666.0 558.1,667.8 545.8,657.3 542.3,642.4"/><polygon points="619.6,656.0 616.8,661.8 609.4,665.1 602.6,662.8 599.8,656.1 601.9,648.4 610.0,644.9 617.4,648.4"/><polygon points="642.2,634.5 678.1,634.5 691.2,659.9 678.1,685.3 663.2,690.5 634.3,677.4 629.9,666.9"/><polygon points="772.7,646.7 789.3,655.5 794.6,670.4 788.5,688.8 763.1,694.0 752.6,687.0 746.4,664.3"/><polygon points="551.6,671.3 549.3,679.1 541.0,682.7 533.5,679.7 530.3,671.1 533.6,664.3 540.6,660.6 549.3,663.9"/><polygon points="711.4,667.8 721.0,670.4 730.7,687.9 724.5,700.2 701.8,706.3 690.4,687.9"/><polygon points="594.9,674.8 614.2,670.4 628.2,688.8 615.0,707.2 590.5,689.7"/><polygon points="535.6,690.5 531.4,697.3 524.6,699.1 518.0,694.5 517.1,685.3 523.0,680.5 532.4,682.7"/><polygon points="543.2,691.4 568.6,683.5 578.2,697.5 572.1,714.2 547.6,715.9 540.6,698.4"/><polygon points="690.1,703.8 686.5,711.2 678.4,714.3 671.3,711.8 667.5,703.2 672.2,695.8 678.4,692.6 686.4,696.3"/><polygon points="796.0,532.0 815.3,526.7 829.3,533.7 836.3,551.3 829.3,565.3 820.5,571.4 803.0,568.8 794.2,553.0"/><polygon points="870.4,528.7 888.8,522.5 908.1,532.2 913.4,545.1 908.1,559.1 896.7,567.0 873.1,558.3 867.8,544.3"/><polygon points="865.8,555.9 862.9,564.2 855.3,567.9 846.9,565.0 843.6,556.3 847.1,549.2 855.4,545.9 862.1,549.4"/><polygon points="949.3,543.4 965.9,548.6 974.7,566.2 961.5,589.8 927.4,580.2 926.5,556.5"/><polygon points="998.3,540.0 1012.1,551.0 1010.3,562.1 1000.2,569.4 985.5,562.1 982.7,551.0"/><polygon points="1037.4,558.3 1033.6,565.6 1026.6,568.8 1019.8,565.0 1017.2,559.0 1019.3,551.3 1026.9,548.9 1034.2,551.8"/><polygon points="1066.7,549.5 1078.0,558.3 1079.8,572.3 1062.3,585.4 1045.6,572.3 1043.9,558.3"/><polygon points="1118.3,550.4 1129.7,555.6 1134.1,567.9 1119.2,587.2 1100.8,581.9 1097.3,556.5"/><polygon points="864.8,576.6 865.4,572.7 868.1,570.0 871.8,569.2 875.2,570.9 877.1,574.3 876.5,578.3 873.9,580.9 870.1,581.7 866.5,579.9"/><polygon points="1080.8,583.4 1083.6,580.6 1087.9,580.1 1091.6,581.7 1093.5,585.7 1092.8,589.6 1089.8,592.6 1085.8,593.3 1082.1,591.2 1080.3,587.7"/><polygon points="855.9,616.1 859.2,615.4 862.1,617.0 863.7,620.2 863.2,623.6 860.5,625.9 857.1,626.3 854.2,624.7 852.8,621.7 853.3,618.5"/><polygon points="883.9,625.0 886.7,626.6 888.2,629.7 887.6,633.1 885.0,635.6 881.7,635.9 878.6,634.1 877.2,631.1 877.8,627.7 880.4,625.5"/><polygon points="945.7,649.4 947.4,653.0 946.6,657.0 943.6,659.6 939.8,660.1 936.3,658.1 934.6,654.5 935.4,650.5 938.5,647.8 942.2,647.5"/><polygon points="1120.0,650.0 1119.2,654.4 1115.7,657.2 1111.3,657.7 1107.9,655.5 1106.1,651.5 1107.1,647.3 1110.5,644.4 1114.7,644.0 1118.4,646.2"/><polygon points="830.0,663.4 827.4,665.6 824.2,665.9 821.1,664.0 820.0,660.9 820.8,657.4 823.4,655.2 826.9,654.9 829.8,656.9 831.0,660.1"/><polygon points="1000.5,688.4 996.7,688.6 993.7,686.8 992.5,683.3 993.4,679.7 996.3,677.5 999.8,677.4 1002.9,679.4 1004.2,682.7 1003.2,686.3"/><polygon points="994.2,703.8 991.4,701.9 990.0,698.7 991.3,695.3 993.9,693.3 997.1,693.1 1000.1,695.0 1001.4,698.4 1000.3,701.5 997.7,703.6"/><polygon points="926.7,715.5 925.1,711.5 926.6,707.3 930.0,704.9 934.4,704.6 938.1,707.2 939.3,711.4 938.0,715.3 934.5,718.0 930.1,718.0"/><polygon points="894.9,570.6 907.8,579.8 909.6,587.2 905.0,597.3 891.2,601.0 882.0,591.8 881.1,580.8"/><polygon points="839.8,575.8 859.1,576.7 867.8,592.4 861.7,607.3 841.5,612.6 827.5,593.3"/><polygon points="1053.9,592.8 1049.7,601.6 1041.8,604.1 1033.7,600.6 1031.3,593.2 1034.3,584.2 1041.6,581.7 1050.3,586.2"/><polygon points="992.2,572.3 1022.9,587.2 1028.1,601.2 1011.5,634.5 978.2,634.5 963.3,595.9"/><polygon points="890.8,611.8 887.9,619.4 881.5,622.3 873.6,618.8 870.5,611.6 873.0,604.9 881.6,601.8 888.2,605.4"/><polygon points="1126.3,610.8 1122.9,618.5 1114.0,622.3 1107.0,618.3 1102.9,610.8 1106.4,601.8 1115.0,598.4 1123.2,601.6"/><polygon points="906.4,600.3 939.6,595.1 956.3,622.2 948.4,642.4 909.9,645.0 899.3,624.8"/><polygon points="1064.9,597.7 1083.3,600.3 1097.3,610.8 1101.7,624.8 1097.3,638.9 1079.8,653.8 1043.9,627.5"/><polygon points="792.0,595.1 810.0,595.9 832.8,624.8 824.0,645.9 810.0,655.5 799.8,657.3 770.1,630.1"/><polygon points="974.9,641.5 970.9,648.8 963.5,651.6 955.9,649.0 953.6,642.1 956.3,633.8 964.5,631.5 970.6,634.0"/><polygon points="1040.1,638.5 1036.9,646.2 1027.4,649.5 1019.4,646.0 1016.2,637.9 1019.7,631.0 1027.6,627.4 1036.5,630.9"/><polygon points="1014.7,649.5 1011.2,656.1 1004.7,659.9 996.3,656.7 994.2,650.0 997.4,642.2 1003.4,640.2 1011.9,642.5"/><polygon points="838.0,635.4 864.3,631.0 874.8,648.5 872.2,658.1 858.2,670.4 838.9,662.5 833.7,644.1"/><polygon points="904.7,662.6 901.4,669.9 895.5,672.8 888.1,669.4 885.1,662.6 888.1,655.1 895.3,652.6 901.5,655.4"/><polygon points="1074.8,663.0 1072.2,672.1 1062.4,675.8 1054.4,672.6 1051.7,664.0 1055.1,654.8 1062.4,651.2 1071.6,655.0"/><polygon points="1107.6,662.9 1103.6,672.6 1095.5,675.4 1087.3,671.8 1083.8,664.2 1086.6,654.9 1094.7,651.5 1103.0,654.7"/><polygon points="934.0,673.9 931.2,683.7 922.6,688.0 913.2,684.4 908.8,675.6 913.1,666.4 922.9,661.6 931.1,667.0"/><polygon points="1014.1,657.3 1039.5,658.1 1048.3,675.7 1031.6,694.0 1009.7,682.7"/><polygon points="968.5,656.4 987.8,680.9 972.1,704.6 944.9,701.1 940.5,669.5"/><polygon points="861.7,695.6 888.8,676.4 909.9,687.7 916.5,705.3 913.4,714.9 877.4,729.8 866.1,717.5"/><polygon points="812.6,680.9 836.3,678.3 851.2,698.4 843.3,715.9 817.0,717.7 806.5,696.7"/><polygon points="1054.4,691.4 1075.4,679.2 1092.1,693.2 1085.9,710.7 1060.5,714.2"/><polygon points="624.7,701.7 639.6,693.9 659.7,703.5 665.0,716.6 652.7,738.5 626.4,738.5 616.8,716.6"/><polygon points="765.7,715.8 778.8,701.7 798.1,703.5 803.4,717.5 791.1,735.0 778.0,735.0"/><polygon points="550.0,722.2 549.7,725.7 547.3,728.0 544.0,728.8 541.0,727.5 539.1,724.5 539.7,721.0 541.8,718.4 545.2,717.8 548.3,719.1"/><polygon points="723.7,719.8 721.0,722.5 717.1,723.3 713.8,721.4 712.0,718.1 712.4,714.4 715.0,711.5 718.9,710.8 722.3,712.6 724.1,715.8"/><polygon points="672.7,737.9 669.0,738.7 665.2,737.1 663.5,733.5 664.0,729.8 666.5,726.8 670.6,726.0 674.0,727.8 676.0,731.3 675.4,735.2"/><polygon points="627.1,757.9 623.2,755.9 621.2,751.9 621.8,747.6 625.0,744.7 629.3,743.9 633.1,745.8 635.3,749.7 634.3,754.1 631.5,757.1"/><polygon points="578.7,773.0 577.2,770.0 577.7,766.7 580.3,764.2 583.5,763.8 586.8,765.4 588.0,768.3 587.6,771.9 585.1,774.2 581.8,774.6"/><polygon points="589.1,782.1 589.6,778.8 592.2,776.5 595.6,776.1 598.7,777.7 600.1,780.7 599.4,784.1 596.8,786.6 593.6,786.9 590.5,785.3"/><polygon points="750.7,760.7 753.5,758.4 756.8,758.0 759.8,759.8 761.3,762.7 760.5,766.2 758.0,768.3 754.6,768.9 751.6,767.2 750.1,763.9"/><polygon points="711.5,832.0 715.6,831.9 719.2,834.1 720.7,837.9 719.9,841.9 716.8,844.7 712.4,845.1 708.7,842.8 707.2,839.1 708.4,834.8"/><polygon points="769.9,850.8 773.0,852.8 774.4,856.2 773.5,860.2 770.7,862.7 766.9,862.9 763.6,860.9 762.2,857.1 763.0,853.3 766.1,851.1"/><polygon points="802.8,801.2 804.4,804.8 803.4,808.4 800.4,810.9 796.4,811.2 793.3,808.9 791.7,805.3 792.9,801.9 796.1,799.4 799.6,799.1"/><polygon points="813.6,862.8 812.7,866.1 809.7,868.6 806.0,868.5 803.1,866.5 801.9,863.3 802.9,859.7 805.8,857.5 809.5,857.3 812.6,859.3"/><polygon points="569.2,737.9 566.3,745.1 557.9,748.4 550.4,745.3 548.1,739.0 551.0,731.6 558.4,728.2 566.6,730.6"/><polygon points="589.6,726.3 608.0,729.8 615.0,742.9 608.9,756.1 592.3,762.2 577.4,749.0 578.2,737.7"/><polygon points="686.0,727.1 700.9,726.3 713.1,743.8 709.6,754.3 692.1,763.9 675.5,744.7"/><polygon points="743.8,712.3 758.7,717.5 767.4,735.0 761.3,748.2 742.0,754.3 726.3,741.2 729.8,720.1"/><polygon points="669.9,754.9 667.9,761.6 659.8,764.7 652.8,761.8 649.8,754.9 652.9,747.7 660.4,743.8 667.3,746.2"/><polygon points="736.6,764.9 734.1,773.9 724.1,777.6 716.7,773.7 712.5,765.6 716.4,756.9 725.3,754.1 733.3,756.7"/><polygon points="622.9,763.9 636.9,761.3 649.2,768.3 654.4,780.6 639.6,802.5 619.4,798.1 612.4,782.3"/><polygon points="675.6,765.0 687.5,773.3 689.4,784.3 673.7,795.4 663.6,790.8 659.0,779.7 666.4,767.8"/><polygon points="698.2,782.3 715.8,781.5 728.9,788.5 735.9,806.0 721.9,829.6 684.2,813.0 684.2,801.6"/><polygon points="756.1,778.0 773.6,778.8 782.3,802.5 778.8,810.4 756.1,816.5 744.7,792.8"/><polygon points="677.7,810.3 673.7,818.5 666.1,822.2 657.6,819.0 654.0,809.7 657.5,803.1 665.5,798.7 674.1,803.2"/><polygon points="702.2,834.2 697.8,842.6 690.8,845.9 681.7,841.4 679.1,834.4 682.4,825.5 690.4,822.0 698.6,826.3"/><polygon points="729.8,825.3 752.6,820.9 762.2,836.6 749.9,855.9 738.5,855.9 726.3,841.9"/><polygon points="775.3,827.0 792.9,819.1 810.0,826.1 817.4,840.1 803.4,857.7 787.6,855.9 775.3,838.4"/><polygon points="981.7,720.1 1006.2,705.2 1034.2,701.7 1044.8,726.3 1035.1,752.6 991.3,753.4"/><polygon points="916.8,722.1 919.9,720.7 923.3,721.4 925.5,724.3 925.7,727.5 923.9,730.7 920.7,731.7 917.4,730.9 915.2,728.3 914.9,725.0"/><polygon points="943.8,760.7 947.2,761.5 949.3,764.2 949.5,767.6 947.7,770.5 944.4,771.7 941.1,770.9 938.9,768.1 938.6,764.8 940.6,762.0"/><polygon points="930.4,772.8 932.6,775.6 932.7,778.8 930.8,781.8 927.7,782.9 924.3,782.0 922.2,779.2 922.1,776.0 924.0,772.9 927.1,771.9"/><polygon points="998.6,768.5 998.7,772.3 996.4,775.4 992.9,776.5 989.1,775.6 986.8,772.4 986.6,768.7 989.0,765.5 992.5,764.2 996.2,765.3"/><polygon points="909.9,792.8 907.1,796.7 902.4,798.2 897.8,796.7 895.1,792.5 894.9,787.8 897.8,784.1 902.6,782.3 907.0,783.9 910.2,787.8"/><polygon points="905.8,813.9 902.2,815.1 898.9,813.9 896.7,811.0 896.9,807.3 899.0,804.3 902.3,803.3 905.9,804.3 908.0,807.5 908.0,811.2"/><polygon points="1004.2,802.5 1000.8,801.2 998.5,798.2 998.7,794.2 1001.0,791.3 1004.7,790.2 1008.3,791.4 1010.6,794.6 1010.2,798.5 1008.0,801.4"/><polygon points="987.3,810.1 985.2,807.1 985.5,803.6 987.6,800.7 991.3,799.7 994.7,801.1 996.8,804.0 996.4,807.8 994.1,810.6 990.5,811.4"/><polygon points="858.0,829.9 858.3,825.9 861.0,823.0 864.8,822.2 868.5,823.6 870.6,826.7 870.1,830.7 867.5,833.8 863.9,834.7 860.1,833.3"/><polygon points="922.6,838.3 925.0,835.1 928.9,834.3 932.4,835.8 934.3,839.1 934.1,842.8 931.5,846.0 927.6,846.6 924.3,845.3 922.1,841.9"/><polygon points="867.0,851.7 870.2,850.9 873.3,852.2 874.7,855.1 874.5,858.4 872.1,860.9 869.1,861.6 865.9,860.2 864.4,857.2 864.7,854.1"/><polygon points="812.3,801.0 815.7,802.7 817.6,805.7 817.2,809.5 814.4,812.0 811.1,812.8 807.8,811.1 806.1,807.8 806.4,804.4 808.9,801.6"/><polygon points="831.7,787.4 832.9,789.8 832.8,792.7 830.7,794.9 827.9,795.4 825.1,794.2 823.9,791.6 824.3,788.7 826.1,786.6 829.2,786.0"/><polygon points="833.0,735.9 831.2,743.0 823.0,746.0 815.7,742.3 812.5,735.2 816.6,728.5 822.4,725.8 829.6,728.5"/><polygon points="851.1,723.8 862.1,728.4 866.7,738.6 861.2,750.5 847.4,753.3 838.2,743.2 841.0,729.4"/><polygon points="900.2,730.7 920.4,738.5 926.5,753.4 910.7,776.2 894.1,774.4 880.1,749.9 883.6,739.4"/><polygon points="954.5,715.8 972.1,737.7 963.3,755.2 937.9,753.4 930.0,735.9 932.6,724.5"/><polygon points="1069.3,734.3 1066.7,741.8 1058.3,744.8 1052.3,742.4 1049.1,734.9 1052.4,727.7 1058.7,724.0 1066.3,726.7"/><polygon points="778.8,756.1 785.8,745.5 805.1,738.5 820.5,747.3 832.8,767.4 815.3,791.1 789.0,787.6"/><polygon points="849.4,774.4 873.1,767.4 888.0,786.7 873.9,809.5 851.2,807.7 848.5,780.6"/><polygon points="964.2,763.1 979.1,765.7 987.8,782.3 979.9,798.1 965.0,802.5 949.3,785.8"/><polygon points="1018.5,760.6 1030.5,768.0 1032.3,777.2 1017.6,790.1 1004.7,782.7 1002.9,768.9"/><polygon points="938.8,785.8 952.8,798.1 954.5,810.4 948.4,821.8 931.8,829.6 913.4,818.2 915.1,792.8"/><polygon points="844.3,811.0 841.7,817.7 835.0,821.0 827.1,817.7 824.9,810.5 827.9,804.8 834.7,801.2 841.9,804.2"/><polygon points="979.5,817.5 976.0,825.2 968.0,828.4 961.4,826.2 957.8,818.8 961.8,811.0 969.3,807.8 975.9,811.6"/><polygon points="897.6,819.1 911.6,832.3 916.9,842.8 912.5,853.3 888.8,859.4 876.6,837.5"/><polygon points="822.3,833.1 847.7,825.3 860.8,847.2 856.4,862.0 832.8,869.1 817.9,849.8"/><polygon points="1218.4,219.6 1214.8,227.8 1207.0,230.6 1198.5,227.2 1195.6,219.1 1198.8,211.9 1205.9,207.6 1214.4,211.7"/><polygon points="1249.5,208.4 1262.3,213.0 1267.9,224.9 1264.2,235.1 1247.6,240.6 1235.7,222.2"/><polygon points="1197.1,240.2 1201.2,238.0 1205.4,238.8 1208.5,241.8 1209.4,245.8 1207.6,250.1 1203.6,251.9 1199.3,251.4 1196.1,248.5 1195.6,244.1"/><polygon points="1197.3,256.7 1201.7,257.2 1205.0,260.2 1205.5,264.3 1203.6,268.2 1199.8,270.5 1195.5,269.9 1192.2,266.9 1191.6,262.6 1193.5,258.6"/><polygon points="1211.1,273.5 1214.1,276.7 1214.9,281.1 1212.8,285.4 1208.7,287.2 1204.5,286.7 1201.3,283.3 1200.5,278.9 1202.6,275.0 1206.6,273.0"/><polygon points="1279.3,249.7 1280.1,253.6 1278.2,257.5 1274.4,259.3 1270.1,258.5 1267.2,255.4 1266.8,251.5 1268.8,247.8 1272.3,245.9 1276.4,246.7"/><polygon points="1205.9,318.1 1204.0,321.4 1200.5,323.2 1196.7,322.4 1194.0,319.4 1193.5,315.8 1195.5,312.5 1199.1,310.7 1202.9,311.4 1205.5,314.3"/><polygon points="1273.0,319.5 1269.7,320.9 1266.0,320.2 1263.7,317.6 1263.1,313.8 1265.1,310.7 1268.4,309.3 1272.0,310.1 1274.3,312.7 1274.7,316.3"/><polygon points="1414.0,222.1 1410.4,221.1 1408.0,218.5 1407.9,214.8 1409.6,211.9 1412.9,210.4 1416.6,211.1 1419.0,213.7 1419.3,217.5 1417.5,220.6"/><polygon points="1364.8,249.0 1362.4,246.4 1362.2,242.6 1364.1,239.8 1367.5,238.3 1371.1,239.2 1373.4,242.1 1373.8,245.5 1371.8,248.6 1368.3,250.2"/><polygon points="1427.1,304.9 1426.8,299.7 1429.6,295.7 1433.9,293.9 1438.9,295.0 1441.9,299.0 1442.4,304.3 1439.6,308.3 1434.9,310.1 1430.2,308.9"/><polygon points="1369.5,343.4 1371.6,340.4 1375.4,339.1 1379.1,340.1 1381.4,343.0 1381.5,346.9 1379.3,350.1 1375.7,351.5 1371.9,350.5 1369.7,347.4"/><polygon points="1497.1,351.0 1501.9,349.1 1506.7,350.6 1509.4,354.8 1509.6,359.4 1506.7,363.4 1502.1,365.1 1497.6,363.7 1494.4,360.0 1494.3,354.9"/><polygon points="1234.8,237.2 1247.9,245.9 1250.6,258.2 1244.4,270.4 1227.8,274.8 1214.7,262.6 1218.2,244.2"/><polygon points="1266.3,265.2 1276.9,269.6 1285.6,287.1 1281.2,298.5 1261.1,305.5 1245.3,285.3"/><polygon points="1293.5,213.5 1323.3,209.1 1337.3,223.1 1346.9,242.4 1329.4,269.6 1297.9,270.4 1282.1,235.4"/><polygon points="1362.3,224.1 1360.0,232.3 1352.0,235.4 1344.2,232.5 1341.7,225.7 1344.6,217.9 1352.8,214.8 1358.9,217.5"/><polygon points="1376.7,215.3 1396.9,210.9 1408.2,222.3 1410.0,235.4 1398.6,247.7 1377.6,244.2 1371.5,229.3"/><polygon points="1363.7,269.8 1359.8,277.4 1352.6,281.1 1345.8,276.9 1343.2,270.3 1345.3,263.1 1352.6,260.3 1360.6,263.1"/><polygon points="1429.3,220.5 1447.7,224.0 1453.8,240.7 1446.8,255.6 1434.5,260.8 1420.5,252.1 1417.9,236.3"/><polygon points="1471.3,222.3 1499.3,219.6 1511.6,234.5 1513.4,250.3 1502.9,268.7 1480.1,270.4 1464.3,248.6"/><polygon points="1397.7,256.4 1413.5,269.6 1423.1,287.1 1417.9,304.6 1380.2,305.5 1370.6,280.1 1376.7,264.3"/><polygon points="1308.8,275.1 1328.1,274.2 1333.6,287.0 1326.3,299.9 1314.3,300.8 1302.3,290.7"/><polygon points="1462.1,282.8 1458.9,290.8 1451.1,295.2 1442.5,291.5 1437.8,282.7 1441.8,274.8 1450.4,270.3 1458.8,273.0"/><polygon points="1207.7,299.4 1236.6,289.7 1251.4,309.9 1236.6,331.8 1222.5,333.5 1205.9,306.4"/><polygon points="1356.6,291.5 1370.6,301.1 1374.1,311.6 1368.0,324.8 1354.8,329.1 1338.2,316.9 1338.2,302.9"/><polygon points="1285.6,302.0 1312.8,308.1 1320.7,323.9 1311.9,341.4 1285.6,344.0 1273.3,330.9"/><polygon points="1394.1,323.1 1390.9,331.1 1382.9,333.1 1375.7,330.5 1373.3,323.8 1375.8,315.4 1384.6,312.1 1390.8,315.8"/><polygon points="1473.1,292.3 1505.5,315.1 1504.6,336.1 1459.1,354.5 1440.7,330.0 1441.5,311.6"/><polygon points="1217.6,336.9 1215.6,344.2 1208.3,347.4 1199.9,344.0 1197.6,336.4 1199.3,329.6 1206.9,326.8 1214.6,329.9"/><polygon points="1252.3,330.0 1262.8,332.6 1274.2,351.9 1269.8,365.1 1255.8,372.1 1234.8,361.5 1233.9,343.2"/><polygon points="1325.9,336.1 1349.6,335.3 1357.4,351.9 1348.7,365.9 1332.9,369.4 1319.8,350.2"/><polygon points="1410.0,326.5 1438.0,356.3 1429.3,375.6 1394.2,374.7 1382.8,357.2 1388.1,337.0"/><polygon points="1318.2,360.5 1314.9,367.8 1308.0,370.7 1300.2,368.3 1297.7,360.2 1300.7,353.8 1306.9,349.9 1315.5,353.6"/><polygon points="1527.1,216.1 1528.1,220.0 1526.7,223.8 1523.4,225.7 1519.6,225.5 1516.2,223.0 1515.3,219.4 1516.9,215.5 1519.9,213.4 1524.0,213.6"/><polygon points="1530.5,224.9 1552.4,222.3 1562.0,231.0 1569.1,245.0 1555.0,265.2 1530.5,264.3 1520.0,255.6 1513.0,243.3"/><polygon points="1503.6,279.6 1516.4,272.3 1529.3,279.6 1532.1,294.4 1520.1,305.4 1505.4,301.7"/><polygon points="1557.1,282.8 1553.8,282.5 1551.0,280.2 1550.3,276.9 1551.9,273.8 1554.9,272.1 1558.3,272.4 1560.6,274.6 1561.5,278.1 1560.0,281.1"/><polygon points="1589.5,228.9 1585.4,236.6 1578.3,239.4 1570.7,235.3 1567.1,229.1 1570.7,220.5 1577.9,218.1 1585.7,221.1"/><polygon points="1596.5,213.8 1614.9,210.1 1625.9,224.8 1617.7,240.5 1602.0,240.5 1593.8,226.7"/><polygon points="1633.9,223.1 1657.5,221.4 1671.5,241.5 1660.2,260.8 1647.0,264.3 1627.7,245.9"/><polygon points="1693.4,210.0 1704.0,220.5 1706.6,231.9 1695.2,245.9 1679.4,246.8 1666.3,222.3"/><polygon points="1725.1,212.5 1728.7,213.1 1730.9,215.6 1731.3,219.0 1729.6,221.9 1726.5,223.4 1723.1,222.8 1720.9,220.1 1720.5,216.8 1722.0,213.9"/><polygon points="1761.1,222.4 1758.7,228.7 1751.0,232.2 1743.3,228.9 1740.2,221.6 1743.6,214.6 1750.3,212.4 1758.3,214.4"/><polygon points="1766.4,221.8 1786.6,217.2 1795.8,234.7 1784.8,246.6 1764.6,239.3"/><polygon points="1815.9,218.8 1813.1,223.2 1808.8,224.8 1804.0,223.7 1800.9,219.9 1800.4,215.2 1803.0,210.9 1807.5,209.1 1812.4,210.3 1815.6,214.0"/><polygon points="1849.9,220.5 1846.2,228.7 1837.7,233.0 1829.6,230.0 1827.1,222.0 1830.1,214.1 1838.6,210.6 1846.5,212.9"/><polygon points="1726.7,228.4 1747.8,238.0 1752.1,247.7 1736.4,271.3 1711.0,261.7 1713.6,235.4"/><polygon points="1817.8,229.3 1825.7,229.3 1840.6,248.6 1831.0,266.1 1807.3,261.7 1802.9,240.7"/><polygon points="1687.5,262.4 1684.7,269.6 1677.8,272.0 1670.7,270.0 1668.2,262.1 1671.3,255.1 1677.4,253.5 1684.6,255.2"/><polygon points="1602.3,249.4 1611.1,252.1 1631.2,281.0 1612.0,310.7 1583.1,309.0 1569.1,272.2"/><polygon points="1659.5,275.0 1663.7,273.8 1667.9,275.3 1670.7,279.0 1670.5,283.5 1667.7,286.9 1663.4,288.3 1659.2,286.5 1656.6,283.0 1656.7,278.6"/><polygon points="1764.4,256.4 1779.3,253.8 1796.8,271.3 1792.4,288.0 1773.2,295.9 1756.5,285.3 1753.9,274.0"/><polygon points="1844.0,289.5 1841.0,296.6 1834.3,299.8 1826.1,296.5 1822.5,288.7 1826.1,281.1 1833.4,279.3 1840.5,282.1"/><polygon points="1540.1,288.8 1556.8,288.0 1568.2,303.7 1562.9,316.9 1548.9,323.9 1531.4,308.1"/><polygon points="1634.8,287.1 1653.1,285.3 1667.2,306.4 1655.8,325.6 1633.9,325.6 1623.4,308.1"/><polygon points="1691.7,271.3 1731.1,288.8 1734.6,299.4 1715.3,329.1 1674.2,312.5 1671.5,295.0"/><polygon points="1751.3,298.5 1770.5,305.5 1774.0,316.9 1764.4,334.4 1744.2,333.5 1734.6,314.2"/><polygon points="1798.6,294.1 1815.2,293.2 1837.1,321.3 1824.8,344.9 1796.8,344.9 1781.9,313.4"/><polygon points="1837.4,338.1 1838.1,333.7 1841.1,330.8 1845.4,330.4 1848.9,332.2 1850.7,336.2 1849.9,340.1 1847.2,343.1 1842.8,343.8 1839.2,341.8"/><polygon points="1766.0,338.5 1768.6,335.7 1772.5,335.4 1776.0,337.3 1777.6,340.6 1776.7,344.5 1773.9,347.0 1770.3,347.4 1766.9,345.8 1765.3,342.1"/><polygon points="1782.3,349.3 1786.8,348.7 1790.9,351.2 1793.0,355.6 1792.0,359.9 1788.5,363.3 1783.9,363.7 1779.8,361.6 1777.9,357.0 1778.8,352.5"/><polygon points="1581.1,365.6 1584.7,367.5 1586.2,371.6 1585.4,375.4 1582.1,378.2 1578.2,378.5 1574.5,376.3 1572.9,372.6 1573.8,368.5 1577.0,365.9"/><polygon points="1559.4,323.9 1593.6,322.1 1599.7,336.1 1598.0,346.7 1581.3,360.7 1557.7,350.2 1555.0,337.9"/><polygon points="1629.7,344.0 1626.3,353.8 1617.6,356.1 1609.0,353.3 1605.3,344.7 1609.4,335.1 1616.3,332.0 1626.9,335.5"/><polygon points="1705.7,339.7 1702.1,348.9 1694.1,351.6 1687.1,349.0 1682.4,339.8 1687.2,332.4 1694.9,329.7 1702.9,332.5"/><polygon points="1514.7,328.3 1539.3,330.9 1549.8,346.7 1542.8,358.9 1527.0,365.1 1507.7,355.4 1504.2,339.7"/><polygon points="1658.4,338.8 1670.7,343.2 1686.4,369.4 1685.6,375.6 1658.4,397.3 1629.5,378.2 1630.4,358.0"/><polygon points="1738.1,335.3 1768.8,355.4 1772.3,365.9 1768.8,372.1 1746.0,398.2 1711.0,378.2 1711.0,353.7"/><polygon points="1839.5,359.2 1836.5,366.6 1829.1,369.8 1821.2,365.9 1818.7,358.9 1821.7,350.6 1828.9,348.1 1836.4,351.0"/><polygon points="1193.6,360.7 1202.4,357.2 1228.7,365.9 1233.9,378.0 1217.3,399.9 1191.0,392.0"/><polygon points="1273.3,371.0 1292.6,374.5 1299.6,388.5 1289.1,407.8 1271.6,408.7 1261.1,398.2 1259.3,383.3"/><polygon points="1363.3,370.4 1367.4,373.8 1368.4,378.9 1366.6,383.5 1361.9,386.1 1356.8,385.7 1353.0,382.3 1351.9,377.1 1353.7,372.7 1358.2,369.9"/><polygon points="1313.6,378.5 1314.2,381.7 1312.8,385.0 1309.9,386.6 1306.3,386.2 1303.9,384.0 1303.3,380.6 1304.8,377.4 1307.5,375.7 1311.0,376.2"/><polygon points="1330.3,378.0 1346.9,380.6 1355.7,397.3 1345.2,416.6 1320.7,411.3 1318.0,388.5"/><polygon points="1391.6,384.5 1388.5,392.0 1381.0,394.7 1375.1,392.1 1371.2,385.7 1374.1,378.1 1381.1,374.3 1388.4,377.6"/><polygon points="1456.6,379.9 1453.3,387.4 1445.7,390.0 1437.9,387.2 1434.5,379.0 1437.5,372.2 1446.0,369.4 1453.2,372.4"/><polygon points="1481.8,372.8 1501.1,372.8 1520.0,402.5 1511.6,425.3 1472.2,428.8 1458.2,392.9"/><polygon points="1385.3,405.3 1385.0,402.1 1386.6,399.2 1389.7,397.6 1392.9,398.4 1395.2,400.9 1395.6,404.2 1394.2,407.0 1391.1,408.3 1387.9,407.8"/><polygon points="1295.5,403.2 1297.2,400.0 1300.4,398.9 1303.7,399.4 1305.9,402.0 1306.4,405.5 1304.6,408.4 1301.4,409.8 1298.0,409.0 1295.8,406.6"/><polygon points="1270.9,417.4 1274.5,416.1 1278.3,416.9 1281.0,419.8 1281.5,423.7 1279.2,427.1 1275.6,428.7 1271.8,427.6 1269.2,425.0 1268.9,421.0"/><polygon points="1259.2,424.1 1263.4,425.1 1266.0,428.4 1266.2,432.7 1264.0,436.3 1260.3,437.8 1256.2,436.8 1253.5,433.5 1253.0,429.4 1255.3,425.8"/><polygon points="1202.9,445.5 1205.2,448.4 1205.5,452.4 1203.3,455.6 1199.8,456.8 1196.1,456.0 1193.6,452.9 1193.5,449.0 1195.6,445.9 1199.0,444.5"/><polygon points="1202.6,472.4 1202.8,476.0 1200.8,479.0 1197.4,480.3 1193.7,479.2 1191.5,476.5 1191.5,472.7 1193.5,469.7 1197.0,468.6 1200.5,469.4"/><polygon points="1413.6,462.8 1411.2,466.5 1407.0,467.8 1402.8,466.7 1400.1,463.0 1399.9,458.4 1402.4,454.8 1406.6,453.4 1411.0,454.6 1413.7,458.3"/><polygon points="1368.6,477.3 1365.0,478.6 1361.7,477.4 1359.4,474.6 1359.4,470.7 1361.5,468.0 1365.0,466.8 1368.6,467.9 1370.7,470.7 1370.5,474.5"/><polygon points="1461.6,495.5 1456.8,493.9 1454.4,489.9 1454.1,485.0 1457.1,480.9 1461.7,479.6 1466.5,481.4 1469.1,485.4 1469.0,490.2 1466.1,494.0"/><polygon points="1260.1,500.1 1258.2,497.2 1258.2,493.7 1260.4,491.1 1263.5,490.3 1266.7,491.3 1268.7,494.1 1268.6,497.5 1266.4,500.4 1263.1,501.2"/><polygon points="1237.8,505.6 1238.1,501.9 1240.5,499.2 1243.9,498.4 1247.2,499.6 1249.2,502.6 1249.1,506.2 1246.7,509.1 1243.2,510.0 1239.8,508.7"/><polygon points="1295.9,525.0 1298.3,522.2 1302.1,521.3 1305.8,522.6 1307.8,526.1 1307.7,529.7 1305.0,532.9 1301.2,533.7 1297.8,532.3 1295.6,529.0"/><polygon points="1215.1,526.7 1218.8,525.9 1222.1,527.5 1223.9,530.6 1223.7,534.1 1221.2,536.8 1217.7,537.6 1214.2,536.3 1212.5,533.2 1212.7,529.5"/><polygon points="1457.5,536.8 1461.2,538.3 1463.1,541.9 1462.5,545.5 1460.0,548.6 1456.3,549.3 1452.8,547.6 1450.8,544.2 1451.4,540.5 1453.8,537.7"/><polygon points="1482.2,538.1 1484.2,541.6 1483.6,545.1 1481.0,548.0 1477.3,548.8 1473.7,547.1 1471.9,544.0 1472.2,540.0 1475.0,537.3 1478.8,536.6"/><polygon points="1415.3,383.3 1425.8,387.6 1434.5,402.5 1418.8,420.9 1401.2,413.0 1398.6,392.0"/><polygon points="1242.5,395.7 1256.3,403.0 1259.0,413.1 1253.5,420.5 1239.7,425.1 1229.6,410.4"/><polygon points="1442.3,407.1 1455.2,412.6 1459.8,422.7 1452.5,435.6 1438.7,438.3 1427.6,425.5 1429.5,412.6"/><polygon points="1199.8,406.9 1224.3,407.8 1230.4,421.8 1225.2,434.1 1211.2,442.0 1195.4,433.2"/><polygon points="1300.5,419.2 1335.5,434.1 1338.2,448.1 1334.7,458.6 1300.5,477.0 1278.6,449.0 1281.2,437.6"/><polygon points="1367.1,410.4 1386.3,414.8 1400.4,441.1 1392.5,462.1 1349.6,463.9 1339.9,431.4"/><polygon points="1235.7,430.6 1270.7,452.5 1271.6,460.3 1254.1,489.3 1237.4,491.9 1210.3,456.8"/><polygon points="1490.6,434.1 1509.9,449.0 1512.5,456.8 1502.9,477.0 1473.9,472.6 1471.3,444.6"/><polygon points="1431.0,448.1 1454.7,456.8 1456.4,465.6 1449.4,480.5 1438.9,484.9 1418.8,471.7 1421.4,456.8"/><polygon points="1291.0,481.3 1287.8,488.4 1279.5,491.8 1271.4,488.4 1267.0,481.3 1271.5,472.4 1280.3,469.2 1287.9,472.8"/><polygon points="1338.0,466.7 1350.0,471.3 1354.6,480.5 1350.0,492.5 1339.9,496.1 1327.9,484.2 1328.8,472.2"/><polygon points="1399.5,470.9 1411.8,475.2 1419.6,490.1 1406.5,509.4 1394.2,509.4 1381.1,492.8 1384.6,477.9"/><polygon points="1304.0,484.0 1322.4,486.6 1331.2,502.4 1319.8,520.8 1296.1,513.8 1296.1,493.6"/><polygon points="1213.8,487.5 1221.7,497.1 1226.9,506.8 1223.4,514.7 1203.3,525.2 1190.1,513.8 1191.0,501.5"/><polygon points="1366.2,495.4 1388.1,507.7 1391.6,521.7 1385.5,537.4 1368.0,544.4 1344.3,535.7 1342.5,507.7"/><polygon points="1452.0,498.0 1464.3,509.4 1466.9,518.2 1462.6,528.7 1446.8,537.4 1437.2,530.4 1429.3,510.3"/><polygon points="1493.2,484.9 1520.0,487.5 1532.6,507.7 1527.4,528.7 1509.9,537.4 1480.1,528.7 1477.4,496.3"/><polygon points="1529.8,367.1 1540.8,361.5 1558.3,366.1 1562.0,379.9 1546.3,394.7 1532.5,388.2"/><polygon points="1781.0,380.6 1793.3,367.5 1814.3,369.2 1821.3,383.3 1817.8,393.8 1807.3,405.2 1795.1,403.4"/><polygon points="1849.8,380.3 1846.8,388.0 1840.0,390.7 1831.4,387.9 1829.0,380.1 1832.7,372.5 1839.1,369.5 1846.8,372.5"/><polygon points="1705.5,382.5 1703.6,386.1 1700.0,387.9 1695.8,387.0 1693.2,384.2 1692.5,380.0 1694.4,376.4 1698.2,374.5 1702.2,375.2 1705.2,378.3"/><polygon points="1771.1,394.6 1767.9,396.0 1764.7,395.4 1762.3,393.1 1762.0,389.5 1763.6,386.6 1766.7,385.2 1770.2,385.7 1772.3,388.4 1772.8,391.7"/><polygon points="1533.3,417.7 1529.7,417.0 1527.2,414.2 1526.9,410.7 1528.7,407.5 1532.1,405.9 1535.4,406.8 1538.0,409.4 1538.4,413.2 1536.4,416.3"/><polygon points="1735.1,475.9 1731.7,472.4 1731.3,467.5 1733.9,463.1 1738.3,461.3 1743.1,462.3 1746.1,465.9 1746.9,470.9 1744.2,475.3 1739.5,476.8"/><polygon points="1531.1,496.7 1531.0,493.1 1532.7,490.2 1536.0,489.0 1539.3,489.9 1541.5,492.4 1541.7,495.9 1539.7,498.8 1536.7,500.0 1533.3,499.1"/><polygon points="1668.6,501.7 1670.6,498.5 1674.3,497.0 1677.9,498.0 1680.6,501.1 1680.6,504.9 1678.6,508.0 1675.1,509.5 1671.4,508.5 1668.7,505.4"/><polygon points="1613.0,509.4 1616.8,508.1 1621.2,509.3 1623.8,512.7 1624.1,517.0 1621.4,520.5 1617.5,521.9 1613.3,521.0 1610.5,517.5 1610.3,513.1"/><polygon points="1590.1,378.0 1615.5,375.4 1624.2,392.0 1609.3,408.7 1586.6,396.4"/><polygon points="1567.3,390.3 1574.3,392.9 1591.8,416.6 1586.6,429.7 1561.2,439.3 1549.8,430.6 1545.4,403.4"/><polygon points="1633.0,403.4 1654.9,412.2 1656.7,420.9 1644.4,439.3 1625.1,434.1 1619.0,417.4"/><polygon points="1680.3,394.7 1690.8,394.7 1703.1,406.9 1702.2,421.8 1688.2,432.3 1666.3,420.1 1665.4,411.3"/><polygon points="1731.9,406.2 1728.9,413.9 1720.7,416.8 1712.5,413.6 1709.8,406.9 1713.6,398.2 1721.0,395.0 1728.1,398.3"/><polygon points="1738.3,420.2 1748.5,430.3 1746.6,440.5 1734.7,449.7 1724.5,445.1 1719.0,435.9 1723.6,423.9"/><polygon points="1767.9,404.3 1796.8,412.2 1805.6,432.3 1790.7,458.6 1768.8,463.0 1758.3,456.8 1749.5,418.3"/><polygon points="1827.4,408.0 1841.2,416.2 1842.1,423.6 1835.7,434.6 1824.6,437.4 1814.5,423.6 1817.3,414.4"/><polygon points="1526.9,429.1 1538.0,431.8 1544.4,442.9 1538.0,455.7 1523.3,455.7 1512.2,444.7 1515.9,433.7"/><polygon points="1604.1,428.1 1617.9,435.4 1622.5,444.6 1611.5,463.0 1590.3,453.8 1587.5,446.5 1593.1,433.6"/><polygon points="1679.0,442.6 1675.4,448.8 1668.2,452.6 1660.9,449.1 1657.4,442.7 1661.4,434.3 1668.3,431.2 1675.4,435.0"/><polygon points="1693.4,440.2 1717.1,453.3 1720.6,465.6 1700.4,491.0 1689.1,490.1 1670.7,463.0"/><polygon points="1814.3,442.0 1831.8,442.0 1845.9,462.1 1838.0,478.7 1822.2,482.2 1809.1,472.6 1804.7,456.8"/><polygon points="1537.3,471.2 1534.1,478.9 1527.6,480.8 1519.3,478.7 1516.1,470.8 1519.3,464.2 1527.8,460.0 1535.2,463.5"/><polygon points="1574.3,447.2 1605.8,477.0 1595.3,500.6 1583.1,506.8 1552.4,497.1 1545.4,481.4 1546.3,469.1"/><polygon points="1638.3,452.5 1662.8,461.2 1672.4,483.1 1658.4,507.7 1640.9,513.8 1615.5,496.3 1615.5,468.2"/><polygon points="1798.3,475.9 1794.4,483.0 1787.6,486.3 1781.2,483.4 1778.2,475.8 1780.6,468.6 1788.5,466.1 1794.9,468.2"/><polygon points="1732.7,485.2 1729.7,493.5 1723.3,496.4 1715.8,492.3 1712.2,485.6 1716.1,478.1 1722.3,475.8 1730.7,478.5"/><polygon points="1712.1,506.3 1709.1,513.3 1701.6,517.4 1692.9,513.4 1690.2,505.6 1693.7,497.7 1701.8,493.9 1709.1,497.8"/><polygon points="1745.6,506.2 1742.5,513.0 1734.9,517.1 1727.3,514.1 1723.1,505.6 1727.9,498.2 1734.1,494.5 1742.8,498.5"/><polygon points="1808.6,500.7 1805.1,509.6 1797.1,511.8 1789.9,508.9 1787.1,500.9 1790.7,492.9 1798.3,490.7 1805.5,493.1"/><polygon points="1570.9,518.7 1567.5,526.3 1558.1,529.8 1550.8,527.0 1546.1,518.8 1550.0,510.6 1557.6,506.3 1566.5,509.1"/><polygon points="1754.8,532.6 1751.4,540.5 1743.6,543.4 1737.0,540.0 1734.2,532.5 1737.0,524.7 1743.5,522.8 1751.4,525.2"/><polygon points="1760.0,478.7 1772.3,478.7 1782.8,493.6 1775.8,511.2 1753.9,509.4 1746.9,491.9"/><polygon points="1817.8,504.1 1839.7,508.5 1845.9,518.2 1835.3,539.2 1814.3,539.2 1804.7,518.2"/><polygon points="1669.8,513.2 1681.7,519.6 1685.4,527.9 1675.3,540.8 1661.5,537.1 1656.0,528.8 1662.4,515.9"/><polygon points="1255.0,510.3 1275.1,510.3 1292.6,533.7 1289.1,549.5 1268.1,563.5 1248.8,556.5 1239.2,528.5"/><polygon points="1413.5,519.9 1428.4,526.0 1435.4,539.0 1432.8,547.8 1421.4,560.0 1404.7,559.1 1393.4,546.0 1392.5,535.5"/><polygon points="1513.5,552.5 1510.2,560.1 1502.9,562.8 1495.5,560.4 1491.8,551.4 1496.0,544.6 1502.9,542.0 1510.6,545.3"/><polygon points="1204.1,541.6 1225.2,546.0 1232.2,560.9 1226.9,574.0 1201.5,578.4 1191.0,561.8"/><polygon points="1329.4,546.0 1342.5,554.8 1346.9,565.3 1331.2,587.2 1306.6,578.4 1302.3,561.8"/><polygon points="1378.5,551.3 1396.9,560.9 1402.1,573.2 1398.6,583.7 1376.7,595.1 1362.7,586.3 1360.9,558.3"/><polygon points="1465.2,550.4 1486.2,561.8 1489.7,572.3 1484.5,584.6 1463.4,595.1 1448.5,584.6 1445.9,564.4"/><polygon points="1307.6,551.7 1304.1,553.2 1300.3,552.1 1298.0,549.1 1297.5,545.5 1299.6,542.3 1303.1,540.8 1306.9,541.5 1309.4,544.6 1309.6,548.3"/><polygon points="1429.1,582.4 1425.1,581.5 1422.4,578.1 1422.2,574.0 1424.4,570.6 1428.4,569.1 1432.5,570.3 1435.1,573.2 1435.1,577.5 1433.0,580.9"/><polygon points="1346.1,589.9 1343.6,587.0 1343.7,583.3 1345.9,580.0 1349.3,578.6 1353.2,579.7 1355.4,582.9 1355.5,586.6 1353.3,590.0 1349.6,591.3"/><polygon points="1358.7,602.6 1358.8,598.9 1360.8,595.9 1364.3,594.8 1367.9,595.9 1370.1,598.8 1370.0,602.3 1367.9,605.4 1364.5,606.5 1361.2,605.5"/><polygon points="1207.6,586.4 1210.4,582.9 1214.7,581.4 1219.1,582.7 1221.5,586.4 1221.5,590.7 1218.8,594.4 1214.5,595.7 1210.6,594.5 1207.7,590.9"/><polygon points="1192.4,588.0 1196.2,586.8 1200.4,588.5 1202.6,591.6 1202.6,595.8 1200.3,599.1 1196.0,600.4 1192.2,598.9 1189.9,595.6 1189.7,591.5"/><polygon points="1231.3,587.5 1234.7,588.7 1236.9,592.1 1236.9,595.8 1234.4,598.9 1230.7,600.0 1227.1,598.5 1225.1,595.4 1225.0,591.4 1227.5,588.5"/><polygon points="1489.2,599.2 1491.8,602.9 1491.5,607.2 1489.0,610.6 1484.6,611.9 1480.5,610.0 1478.0,606.4 1478.4,602.0 1481.1,598.7 1485.5,597.6"/><polygon points="1466.0,663.7 1465.7,668.3 1462.8,671.3 1458.4,672.6 1454.7,670.9 1452.1,667.2 1452.6,662.8 1455.3,659.6 1459.5,658.5 1463.6,660.0"/><polygon points="1509.4,669.0 1506.4,672.6 1502.0,673.4 1497.5,671.6 1495.3,667.7 1495.5,663.0 1498.6,659.3 1503.2,658.4 1507.3,660.4 1509.9,664.5"/><polygon points="1345.9,689.9 1342.3,690.7 1338.8,689.1 1336.7,685.6 1337.1,681.8 1339.9,679.0 1343.5,678.2 1347.0,679.8 1349.1,683.0 1348.7,687.1"/><polygon points="1438.4,696.5 1434.4,694.2 1432.2,690.5 1432.8,685.9 1436.0,682.8 1440.2,681.9 1444.2,683.7 1446.6,687.6 1445.9,692.3 1443.0,695.3"/><polygon points="1329.6,711.8 1327.0,707.5 1328.0,703.1 1331.1,699.4 1335.6,698.8 1339.9,701.0 1342.1,705.0 1341.5,709.6 1338.2,712.8 1333.5,713.9"/><polygon points="1237.9,708.2 1238.6,704.1 1241.3,701.3 1245.4,700.5 1249.2,702.6 1251.2,706.3 1250.4,710.1 1247.6,713.1 1243.5,714.0 1239.6,712.0"/><polygon points="1441.6,703.1 1444.7,700.5 1448.8,699.7 1452.5,701.7 1454.3,705.5 1453.7,709.5 1450.4,712.3 1446.4,713.1 1442.8,711.1 1441.2,707.3"/><polygon points="1244.1,567.3 1258.8,568.2 1265.2,580.2 1260.6,591.2 1248.7,594.0 1235.8,582.0"/><polygon points="1245.2,610.2 1258.1,616.6 1260.9,624.9 1256.3,635.9 1242.5,639.6 1231.4,626.7 1235.1,614.8"/><polygon points="1191.9,602.9 1220.8,601.2 1228.7,616.1 1222.5,628.3 1208.5,634.5 1191.0,622.2"/><polygon points="1283.0,581.0 1309.3,590.7 1314.5,607.3 1298.8,634.5 1272.5,633.6 1260.2,599.4"/><polygon points="1338.2,590.7 1349.6,595.1 1354.8,608.2 1350.4,618.7 1338.2,626.6 1324.2,620.5 1319.8,598.6"/><polygon points="1404.7,588.1 1424.9,588.1 1436.3,607.3 1433.6,617.0 1415.3,628.3 1396.0,612.6"/><polygon points="1465.6,616.0 1463.0,624.5 1454.3,628.0 1446.3,624.7 1441.5,616.4 1444.9,607.9 1453.8,604.6 1461.6,607.7"/><polygon points="1360.9,619.6 1384.6,616.1 1402.1,638.9 1396.9,655.5 1382.8,662.5 1357.4,649.4 1353.9,634.5"/><polygon points="1471.3,621.3 1495.8,621.3 1503.7,638.0 1499.3,649.4 1484.5,657.3 1466.9,647.6 1465.2,633.6"/><polygon points="1417.0,640.6 1439.8,631.9 1451.2,644.1 1451.2,654.6 1443.3,665.1 1431.9,668.6 1417.9,659.9"/><polygon points="1295.8,652.7 1292.9,661.7 1284.8,664.3 1277.7,660.6 1274.9,653.6 1278.0,645.9 1285.3,642.6 1292.4,645.7"/><polygon points="1310.1,642.4 1332.0,642.4 1339.9,659.9 1329.4,675.7 1306.6,671.3 1303.1,656.4"/><polygon points="1247.1,648.5 1262.0,647.6 1276.0,667.8 1272.5,677.4 1261.1,685.3 1238.3,672.1"/><polygon points="1372.7,670.2 1370.7,677.9 1361.9,681.8 1355.3,678.0 1351.9,670.6 1354.3,663.4 1362.4,660.9 1368.9,663.3"/><polygon points="1215.5,652.9 1224.3,657.3 1231.3,672.1 1221.7,689.7 1199.8,689.7 1191.0,677.4 1192.8,661.6"/><polygon points="1391.6,672.1 1409.1,664.3 1418.8,667.8 1428.4,684.4 1418.8,699.3 1400.4,700.2 1389.9,690.5"/><polygon points="1334.2,689.5 1330.4,697.4 1323.9,700.5 1315.6,696.5 1313.2,690.3 1315.3,682.0 1323.3,678.6 1330.5,681.5"/><polygon points="1471.3,671.3 1502.0,683.5 1505.5,696.7 1497.6,712.4 1464.3,712.4 1454.7,696.7"/><polygon points="1520.0,528.5 1542.8,525.0 1556.8,537.2 1558.5,554.8 1549.8,568.8 1527.9,569.7 1516.5,549.5"/><polygon points="1590.1,516.4 1609.3,528.7 1611.1,539.0 1592.7,556.5 1579.6,546.0 1571.7,533.0"/><polygon points="1625.5,521.1 1643.0,520.1 1651.2,533.9 1646.6,546.6 1628.2,547.5 1622.7,532.1"/><polygon points="1698.7,520.8 1721.5,520.8 1729.4,535.7 1723.2,549.5 1704.0,554.8 1691.7,534.8"/><polygon points="1761.8,521.7 1786.3,516.4 1798.6,535.5 1790.7,552.1 1765.3,547.8 1757.4,535.7"/><polygon points="1759.0,555.2 1756.8,558.8 1752.7,560.2 1748.9,559.2 1746.3,555.6 1746.2,551.6 1748.5,548.1 1752.5,546.5 1756.5,547.9 1758.9,550.9"/><polygon points="1839.0,557.5 1834.8,558.9 1831.0,557.5 1828.3,554.2 1828.5,550.3 1830.7,546.9 1834.7,545.5 1838.6,546.4 1841.2,549.9 1841.3,554.0"/><polygon points="1550.5,589.5 1546.7,588.1 1544.4,585.2 1544.5,581.3 1546.7,578.3 1550.4,576.9 1553.9,578.2 1556.2,581.2 1556.1,585.2 1554.0,588.1"/><polygon points="1637.4,596.2 1635.1,593.1 1634.9,588.9 1637.6,585.5 1641.6,584.5 1645.4,585.8 1647.7,589.0 1647.8,593.1 1645.1,596.6 1641.3,597.8"/><polygon points="1678.9,614.9 1679.1,611.2 1681.5,608.2 1684.9,607.3 1688.3,608.5 1690.3,611.4 1690.1,615.2 1687.9,617.9 1684.6,619.0 1681.2,617.8"/><polygon points="1693.5,624.2 1695.7,621.4 1699.1,620.5 1702.1,621.7 1704.1,624.6 1703.9,628.0 1701.7,630.6 1698.5,631.6 1695.3,630.3 1693.3,627.4"/><polygon points="1746.4,630.0 1750.4,628.8 1754.6,630.3 1756.9,634.3 1756.5,638.6 1753.9,641.9 1749.6,643.1 1745.5,641.2 1743.1,637.6 1743.7,633.1"/><polygon points="1814.3,626.0 1818.6,628.0 1821.0,632.3 1820.6,636.9 1817.5,640.8 1812.9,641.7 1808.2,639.9 1805.6,635.6 1806.1,631.0 1809.3,627.4"/><polygon points="1848.9,629.5 1850.6,632.7 1850.4,636.3 1847.8,639.1 1844.3,639.9 1841.1,638.4 1839.2,635.1 1839.7,631.7 1841.9,628.9 1845.6,628.2"/><polygon points="1802.4,647.2 1802.0,651.3 1799.2,654.5 1795.0,655.2 1791.2,653.3 1789.2,649.8 1789.7,645.8 1792.5,642.5 1796.8,641.7 1800.6,643.7"/><polygon points="1533.2,679.9 1530.7,682.6 1527.2,683.2 1523.9,681.6 1522.0,678.3 1522.7,674.8 1525.2,672.2 1528.5,671.7 1532.0,673.1 1533.7,676.3"/><polygon points="1555.9,689.7 1552.3,690.3 1549.0,688.5 1547.5,685.3 1548.1,681.8 1550.6,679.2 1554.2,678.7 1557.3,680.2 1559.1,683.4 1558.6,687.2"/><polygon points="1667.7,712.2 1664.0,710.0 1662.3,706.2 1662.9,702.3 1665.9,699.3 1670.1,698.9 1673.6,700.7 1675.7,704.4 1674.7,708.6 1671.9,711.5"/><polygon points="1835.3,707.1 1833.7,702.1 1834.1,696.1 1838.8,692.2 1844.0,692.4 1849.0,694.3 1851.3,699.9 1850.5,705.0 1846.0,709.3 1841.1,709.8"/><polygon points="1620.7,549.5 1636.5,555.6 1642.6,568.8 1630.4,588.1 1612.0,584.6 1602.3,569.7 1607.6,556.5"/><polygon points="1667.2,548.6 1683.8,548.6 1697.8,570.5 1681.2,591.6 1657.5,583.7 1656.7,560.0"/><polygon points="1711.8,558.3 1741.6,556.5 1749.5,571.4 1746.9,580.2 1734.6,592.4 1710.1,581.0 1708.3,567.0"/><polygon points="1802.9,557.4 1814.3,565.3 1819.6,576.7 1816.1,585.4 1800.3,595.1 1783.7,584.6 1781.0,570.5"/><polygon points="1773.5,578.7 1770.8,585.9 1762.9,589.5 1755.9,585.4 1753.6,578.1 1755.9,570.9 1762.8,568.0 1770.6,570.9"/><polygon points="1850.5,576.5 1846.9,584.3 1840.0,586.6 1832.0,583.3 1829.6,576.3 1832.9,569.5 1840.3,566.3 1847.7,569.3"/><polygon points="1574.3,561.8 1595.3,568.8 1600.6,582.8 1594.5,597.7 1583.9,602.9 1562.0,592.4 1561.2,572.3"/><polygon points="1497.6,591.6 1506.3,580.2 1520.0,578.4 1530.5,589.8 1535.8,600.3 1530.5,608.2 1514.7,616.1 1502.5,609.1"/><polygon points="1634.5,606.8 1631.8,616.2 1621.3,618.8 1613.8,615.7 1608.8,606.1 1611.7,597.5 1622.7,594.1 1631.4,597.0"/><polygon points="1570.7,611.7 1566.7,619.1 1559.9,621.4 1553.1,618.6 1550.6,611.2 1553.2,603.8 1560.2,601.5 1566.6,604.4"/><polygon points="1713.6,590.9 1725.5,596.5 1729.2,605.7 1724.6,617.6 1705.3,615.8 1699.8,603.8 1702.5,596.5"/><polygon points="1753.6,611.2 1750.2,618.3 1742.5,620.7 1735.9,617.3 1733.4,611.1 1736.1,603.2 1743.7,600.5 1750.7,604.1"/><polygon points="1829.2,591.6 1841.5,595.1 1849.4,610.0 1835.3,629.2 1824.8,626.6 1811.7,610.8 1817.8,598.6"/><polygon points="1770.5,598.6 1788.0,598.6 1802.9,621.3 1800.3,633.6 1770.5,642.4 1755.6,621.3"/><polygon points="1590.1,607.3 1602.3,610.8 1615.5,630.1 1604.1,651.1 1576.9,645.9 1574.3,616.1"/><polygon points="1659.3,608.2 1689.1,633.6 1688.2,641.5 1660.2,670.4 1631.2,653.8 1626.9,636.2"/><polygon points="1513.0,628.3 1520.0,625.7 1542.8,625.7 1562.0,651.1 1556.8,663.4 1541.0,674.8 1520.0,661.6 1509.5,647.6"/><polygon points="1707.5,634.5 1726.7,627.5 1743.4,649.4 1738.1,666.9 1710.1,666.0 1701.3,644.1"/><polygon points="1701.4,662.0 1699.0,668.5 1691.7,672.1 1685.3,668.9 1681.8,661.3 1684.0,654.5 1691.0,651.3 1698.8,654.9"/><polygon points="1758.3,655.5 1778.4,645.9 1796.8,668.6 1792.4,677.4 1776.7,687.0 1760.9,677.4 1756.5,665.1"/><polygon points="1803.8,659.9 1824.0,645.0 1843.2,659.9 1840.6,670.4 1828.3,685.3 1807.3,675.7"/><polygon points="1581.3,653.8 1605.8,655.5 1611.1,664.3 1609.3,675.7 1601.5,687.0 1587.4,687.0 1574.3,673.0"/><polygon points="1619.9,670.4 1640.9,672.1 1647.0,688.8 1640.9,701.9 1623.4,707.2 1609.3,694.9"/><polygon points="1674.8,687.5 1672.1,694.7 1665.0,697.2 1657.2,694.2 1653.9,687.8 1657.7,679.5 1664.2,676.5 1672.0,680.5"/><polygon points="1695.2,674.8 1710.1,679.2 1718.0,691.4 1712.7,705.4 1688.2,708.9 1679.4,690.5 1682.9,680.9"/><polygon points="1730.2,681.8 1753.9,677.4 1767.9,697.5 1758.3,715.9 1735.5,715.9 1727.6,696.7"/><polygon points="1191.0,703.5 1206.8,694.7 1224.3,697.4 1235.7,716.6 1227.8,733.3 1215.5,739.4 1200.6,735.9 1191.0,724.5"/><polygon points="1256.7,701.0 1279.5,684.4 1297.9,697.5 1299.6,712.3 1289.1,724.5 1273.3,728.0 1260.2,719.3"/><polygon points="1348.7,702.8 1372.3,685.3 1383.7,689.7 1394.2,708.8 1393.4,715.8 1373.2,730.7 1354.8,724.5"/><polygon points="1258.9,736.3 1259.0,732.8 1261.5,730.0 1265.0,729.1 1268.4,730.6 1270.2,733.7 1269.9,737.4 1267.7,740.0 1264.1,741.0 1260.7,739.5"/><polygon points="1384.3,738.7 1386.7,735.8 1390.4,734.8 1393.8,736.6 1395.9,740.0 1395.7,743.6 1393.0,746.5 1389.2,747.2 1385.6,745.7 1383.9,742.6"/><polygon points="1455.5,718.4 1459.0,717.9 1461.9,719.2 1463.5,722.1 1463.1,725.7 1460.9,728.0 1457.4,728.9 1454.4,727.3 1452.7,724.3 1453.2,720.9"/><polygon points="1306.8,781.3 1310.8,783.4 1313.0,787.1 1312.2,791.6 1309.0,794.8 1304.6,795.7 1300.8,793.8 1298.7,789.8 1299.3,785.4 1302.5,782.0"/><polygon points="1379.4,775.9 1381.8,780.0 1381.1,784.5 1377.5,787.9 1372.8,788.6 1368.6,786.4 1366.7,782.2 1367.3,777.6 1370.7,774.2 1375.3,773.8"/><polygon points="1394.6,802.7 1393.4,807.3 1389.9,810.8 1385.0,811.7 1380.6,809.3 1378.4,804.9 1379.3,799.8 1382.9,796.5 1387.7,795.9 1392.2,797.9"/><polygon points="1246.5,861.5 1243.5,864.3 1239.8,864.6 1236.2,862.8 1234.7,859.4 1235.5,855.5 1238.1,852.9 1242.2,852.5 1245.3,854.2 1247.2,857.6"/><polygon points="1273.1,868.5 1268.3,869.1 1264.2,866.4 1262.4,862.5 1263.2,857.7 1267.0,854.7 1271.4,854.2 1275.4,856.3 1277.5,860.6 1276.4,865.1"/><polygon points="1317.6,869.2 1314.8,867.5 1313.3,864.2 1314.1,860.9 1316.8,858.6 1320.1,858.3 1323.1,860.1 1324.4,863.2 1323.7,866.5 1321.0,868.9"/><polygon points="1503.2,863.3 1501.8,859.8 1502.9,856.0 1505.6,853.6 1509.5,853.4 1512.7,855.5 1514.2,858.9 1513.3,862.8 1510.5,865.2 1506.6,865.4"/><polygon points="1423.1,710.5 1445.0,721.0 1447.7,730.7 1437.2,749.0 1421.4,749.9 1412.6,742.0 1408.2,722.8"/><polygon points="1475.4,718.5 1489.2,720.3 1496.6,734.1 1492.0,744.2 1480.0,750.6 1469.0,746.0 1463.5,735.0"/><polygon points="1306.6,713.1 1322.4,713.1 1342.5,728.9 1346.9,744.7 1327.7,774.4 1306.6,776.2 1282.1,749.9"/><polygon points="1360.5,737.0 1376.2,737.0 1383.5,749.9 1378.0,761.8 1366.0,765.5 1352.2,751.7"/><polygon points="1247.9,738.5 1266.3,747.3 1269.8,757.8 1265.5,768.3 1247.9,777.1 1236.6,770.9 1231.3,757.8"/><polygon points="1204.8,752.7 1216.8,757.3 1222.3,767.4 1217.7,776.6 1209.4,782.2 1194.7,773.9 1193.8,761.0"/><polygon points="1297.2,777.4 1293.8,784.0 1286.8,787.4 1279.2,784.8 1275.9,777.8 1280.0,769.7 1286.8,766.9 1293.0,769.8"/><polygon points="1403.9,753.4 1415.3,757.8 1423.1,774.4 1417.9,785.8 1406.5,793.7 1386.3,784.1 1388.1,759.6"/><polygon points="1461.7,749.9 1483.6,757.8 1494.1,781.5 1468.7,813.9 1435.4,798.1 1436.3,763.1"/><polygon points="1333.8,774.4 1348.7,775.3 1359.2,786.7 1359.2,799.0 1347.8,813.0 1323.3,805.1 1319.8,788.5"/><polygon points="1222.5,781.5 1243.6,792.8 1246.2,802.5 1227.8,826.1 1212.0,823.5 1202.4,810.4 1204.1,791.1"/><polygon points="1267.2,785.8 1287.4,797.2 1289.1,805.1 1271.6,823.5 1253.2,813.0 1252.3,802.5"/><polygon points="1509.4,807.1 1506.1,817.1 1496.8,820.8 1488.3,817.0 1485.4,806.8 1488.6,797.9 1497.5,795.0 1506.1,799.0"/><polygon points="1400.4,802.5 1417.0,799.0 1432.8,813.9 1433.6,820.9 1426.6,833.1 1413.5,839.3 1396.0,826.1"/><polygon points="1248.8,817.4 1271.6,829.6 1273.3,834.9 1264.6,849.8 1240.1,845.4 1235.7,833.1 1238.3,823.5"/><polygon points="1294.4,808.6 1325.9,816.5 1332.9,831.4 1303.1,863.8 1285.6,856.8 1276.9,845.4"/><polygon points="1374.1,816.5 1382.8,820.9 1393.4,836.6 1385.5,851.5 1370.6,855.9 1360.1,847.2 1354.8,830.5"/><polygon points="1457.3,818.2 1480.1,820.0 1489.7,837.5 1466.9,861.2 1451.2,853.3 1445.0,843.7 1447.7,825.3"/><polygon points="1202.2,837.6 1216.0,842.2 1221.5,852.3 1216.9,863.4 1208.6,868.0 1193.9,860.6 1191.1,851.4"/><polygon points="1359.5,859.7 1356.5,867.0 1347.5,870.8 1340.1,868.1 1336.4,859.0 1339.8,852.1 1347.3,848.3 1355.0,851.1"/><polygon points="1413.3,856.5 1410.4,864.6 1403.0,867.0 1395.9,864.5 1392.0,857.6 1394.7,849.4 1402.2,846.1 1411.2,849.3"/><polygon points="1442.8,856.0 1439.5,863.1 1432.1,866.6 1424.2,864.0 1420.8,856.2 1424.0,848.0 1431.5,844.9 1440.1,848.5"/><polygon points="1498.2,860.6 1494.9,867.4 1488.2,870.3 1480.9,867.7 1477.0,860.4 1480.8,853.2 1487.4,850.1 1495.5,853.0"/><polygon points="1504.2,714.0 1513.0,698.2 1530.5,694.7 1543.7,707.0 1539.3,722.8 1527.0,731.5 1513.0,728.0"/><polygon points="1551.5,705.2 1566.4,694.7 1597.1,707.0 1599.7,717.5 1593.6,734.2 1557.7,737.7 1548.9,718.4"/><polygon points="1657.7,714.9 1654.1,721.4 1646.8,725.2 1640.2,721.9 1637.0,714.1 1639.3,707.7 1646.9,705.2 1653.9,707.9"/><polygon points="1686.1,723.8 1682.7,724.4 1679.6,723.1 1677.8,720.1 1678.1,716.8 1680.4,714.2 1683.8,713.3 1687.0,714.7 1688.7,717.7 1688.4,721.2"/><polygon points="1774.0,714.9 1793.3,696.5 1814.3,693.9 1835.3,716.6 1816.1,746.4 1807.3,748.2 1784.5,740.3"/><polygon points="1716.8,725.3 1713.8,735.2 1704.7,737.3 1696.1,733.5 1692.4,725.8 1695.9,715.8 1704.8,712.3 1713.9,715.9"/><polygon points="1850.0,742.0 1846.8,750.1 1840.3,752.3 1831.9,749.8 1829.3,742.6 1832.0,734.4 1839.7,731.5 1847.0,734.1"/><polygon points="1612.9,718.4 1629.5,717.5 1640.0,734.2 1626.9,751.7 1604.1,741.2 1603.2,732.4"/><polygon points="1657.5,724.5 1672.4,721.0 1688.2,742.9 1672.4,761.3 1656.7,757.8 1650.5,730.7"/><polygon points="1506.3,745.5 1520.0,742.9 1548.0,749.9 1553.3,764.8 1538.4,788.5 1516.5,784.1 1504.2,780.6"/><polygon points="1585.5,754.4 1582.9,762.4 1573.6,766.7 1564.5,762.8 1561.0,753.5 1565.3,745.7 1573.6,742.4 1581.9,746.4"/><polygon points="1616.1,759.3 1615.2,764.7 1610.8,768.1 1605.4,768.7 1601.2,765.7 1598.7,760.8 1600.1,755.8 1604.4,752.1 1609.5,751.7 1614.2,754.1"/><polygon points="1698.3,771.8 1694.9,774.5 1691.1,774.8 1687.3,772.7 1685.9,768.8 1686.8,764.7 1690.1,762.1 1694.3,761.7 1697.8,763.9 1699.2,767.8"/><polygon points="1662.5,779.4 1658.4,779.5 1655.3,777.4 1653.9,773.9 1654.9,770.2 1657.9,767.6 1661.8,767.6 1665.0,769.8 1666.3,773.4 1665.2,777.0"/><polygon points="1521.0,802.3 1517.6,800.1 1516.5,796.5 1517.4,792.8 1520.5,790.4 1524.3,790.5 1527.5,792.5 1528.8,796.0 1527.6,799.8 1524.8,802.3"/><polygon points="1543.3,812.1 1542.1,808.7 1543.3,805.1 1546.1,803.1 1549.7,802.9 1552.8,805.2 1553.8,808.5 1552.7,812.0 1549.9,814.2 1546.3,814.2"/><polygon points="1553.1,824.0 1554.2,820.8 1557.0,819.0 1560.3,819.0 1562.8,821.0 1564.0,824.1 1562.7,827.2 1560.1,829.2 1557.0,829.2 1554.1,827.2"/><polygon points="1549.4,852.2 1552.6,849.7 1556.5,850.0 1559.6,852.3 1561.0,856.1 1559.5,859.8 1556.4,862.0 1552.4,861.9 1549.4,859.7 1548.0,855.8"/><polygon points="1761.4,771.4 1764.3,771.4 1766.8,773.5 1767.6,776.3 1766.6,779.3 1764.1,781.1 1760.9,780.9 1758.4,779.1 1757.6,775.9 1758.6,773.0"/><polygon points="1801.6,797.2 1804.1,799.4 1805.0,802.8 1803.6,806.1 1800.9,807.8 1797.6,807.6 1794.7,805.4 1794.0,802.3 1795.1,798.8 1797.9,797.1"/><polygon points="1792.3,838.4 1793.2,841.3 1792.0,844.2 1789.2,846.0 1786.1,845.6 1783.7,843.6 1783.0,840.7 1784.1,837.8 1786.9,836.2 1790.0,836.3"/><polygon points="1802.7,860.0 1800.5,865.0 1796.2,867.4 1790.7,867.1 1787.0,863.8 1785.9,858.7 1787.9,853.8 1792.5,851.4 1797.5,851.5 1801.4,855.0"/><polygon points="1849.0,864.9 1845.1,867.4 1840.0,866.7 1836.4,863.4 1835.3,858.7 1837.2,853.8 1841.8,851.7 1846.5,852.2 1850.3,855.2 1851.2,860.2"/><polygon points="1727.6,721.0 1739.0,720.1 1765.3,749.9 1754.8,774.4 1718.0,771.8 1708.3,753.4"/><polygon points="1793.5,757.2 1789.7,765.3 1782.2,769.7 1774.9,766.0 1771.2,757.6 1774.2,749.3 1782.1,746.4 1789.6,749.2"/><polygon points="1809.1,756.9 1833.6,756.9 1845.0,778.0 1835.3,795.5 1812.6,799.0 1798.6,772.7"/><polygon points="1576.1,775.3 1590.1,784.1 1592.7,794.6 1575.2,813.9 1558.5,805.1 1558.5,783.2"/><polygon points="1636.5,766.6 1661.9,798.1 1658.4,806.9 1627.7,825.3 1602.3,802.5 1605.8,778.8"/><polygon points="1689.1,778.8 1722.3,806.9 1710.1,829.6 1702.2,831.4 1673.3,821.8 1668.9,796.3"/><polygon points="1736.7,788.3 1734.2,797.1 1726.6,799.6 1717.7,796.1 1713.8,789.3 1717.8,781.2 1726.1,776.5 1734.6,780.9"/><polygon points="1767.0,789.3 1784.5,792.8 1790.7,807.7 1783.7,823.5 1767.9,826.1 1753.0,810.4"/><polygon points="1747.3,823.4 1744.7,829.8 1736.8,833.1 1729.0,829.6 1725.4,822.6 1729.0,815.2 1736.1,812.4 1743.7,814.4"/><polygon points="1520.0,810.4 1542.8,820.0 1546.3,829.6 1540.1,847.2 1520.0,853.3 1509.5,840.1 1507.7,819.1"/><polygon points="1580.4,817.4 1605.8,824.4 1612.0,841.9 1602.3,857.7 1581.3,864.7 1562.9,843.7"/><polygon points="1648.8,835.8 1672.4,828.8 1687.3,848.9 1675.9,868.2 1654.0,869.1 1642.6,848.9"/><polygon points="1706.5,836.0 1719.4,838.8 1725.8,852.5 1712.9,866.3 1701.9,863.6 1695.4,850.7 1699.1,839.7"/><polygon points="1809.1,815.6 1825.7,812.1 1838.9,829.6 1832.7,845.4 1817.8,852.4 1798.6,833.1"/><polygon points="1746.0,834.9 1761.8,830.5 1777.5,845.4 1776.7,857.7 1762.6,867.3 1746.0,859.4"/><polygon points="1637.3,858.6 1634.4,866.7 1625.7,870.5 1617.0,866.7 1612.6,858.7 1616.5,850.2 1625.1,847.1 1633.5,849.1"/></g><text x="705" y="272" font-size="53" font-weight="900" fill="#383838" fill-opacity=".52" stroke="#fff" stroke-opacity=".5" stroke-width="3" paint-order="stroke" style="font-family:'Liberation Sans','Noto Sans CJK SC',sans-serif" textLength="256" lengthAdjust="spacingAndGlyphs">渊鱼科技</text><text x="710" y="296.5" font-size="21" fill="#555" fill-opacity=".7" stroke="#fff" stroke-opacity=".6" stroke-width="2.600" paint-order="stroke" style="font-family:'Liberation Sans',sans-serif" textLength="248">AbyssFish Tech</text><text x="1293" y="272" font-size="53" font-weight="900" fill="#383838" fill-opacity=".52" stroke="#fff" stroke-opacity=".5" stroke-width="3" paint-order="stroke" style="font-family:'Liberation Sans','Noto Sans CJK SC',sans-serif" textLength="256" lengthAdjust="spacingAndGlyphs">渊鱼科技</text><text x="1298" y="296.5" font-size="21" fill="#555" fill-opacity=".7" stroke="#fff" stroke-opacity=".6" stroke-width="2.600" paint-order="stroke" style="font-family:'Liberation Sans',sans-serif" textLength="248">AbyssFish Tech</text><g opacity="0.6"><circle cx="657.5" cy="258" r="32" fill="none" stroke="#3cc8f4" stroke-width="2.4" opacity=".8"/><ellipse cx="657.5" cy="258" rx="33.0" ry="30.4" fill="none" stroke="#2a9df4" stroke-width="1.100" transform="rotate(-35 657.5 258)"/><ellipse cx="657.5" cy="258" rx="31.0" ry="33.3" fill="none" stroke="#59d3f7" stroke-width="1.300" transform="rotate(25 657.5 258)"/><ellipse cx="658.5" cy="259" rx="29.8" ry="31.7" fill="none" stroke="#2a9df4" stroke-width=".9" transform="rotate(70 657.5 258)"/><polygon points="636.4,242.5 657.5,245.0 651.1,252.9" fill="#9fd6f8"/><polygon points="657.5,245.0 664.2,262.1 651.1,252.9" fill="#7dbdf0"/><polygon points="636.4,242.5 651.1,252.9 646.1,262.1" fill="#8cc6f4"/><polygon points="651.1,252.9 664.2,262.1 646.1,262.1" fill="#5f9fd8"/><polygon points="664.2,262.1 680.7,267.8 671.9,269.5" fill="#a5dcf8"/><polygon points="664.2,262.1 671.9,269.5 672.4,278.6" fill="#7dbdf0"/><polygon points="671.9,269.5 680.7,267.8 672.4,278.6" fill="#5b95d6"/><circle cx="641.8" cy="246.5" r="1.6" fill="#f0a060"/></g><g opacity="0.6"><circle cx="1245.5" cy="258" r="32" fill="none" stroke="#3cc8f4" stroke-width="2.4" opacity=".8"/><ellipse cx="1245.5" cy="258" rx="33.0" ry="30.4" fill="none" stroke="#2a9df4" stroke-width="1.100" transform="rotate(-35 1245.5 258)"/><ellipse cx="1245.5" cy="258" rx="31.0" ry="33.3" fill="none" stroke="#59d3f7" stroke-width="1.300" transform="rotate(25 1245.5 258)"/><ellipse cx="1246.5" cy="259" rx="29.8" ry="31.7" fill="none" stroke="#2a9df4" stroke-width=".9" transform="rotate(70 1245.5 258)"/><polygon points="1224.4,242.5 1245.5,245.0 1239.1,252.9" fill="#9fd6f8"/><polygon points="1245.5,245.0 1252.2,262.1 1239.1,252.9" fill="#7dbdf0"/><polygon points="1224.4,242.5 1239.1,252.9 1234.1,262.1" fill="#8cc6f4"/><polygon points="1239.1,252.9 1252.2,262.1 1234.1,262.1" fill="#5f9fd8"/><polygon points="1252.2,262.1 1268.7,267.8 1259.9,269.5" fill="#a5dcf8"/><polygon points="1252.2,262.1 1259.9,269.5 1260.4,278.6" fill="#7dbdf0"/><polygon points="1259.9,269.5 1268.7,267.8 1260.4,278.6" fill="#5b95d6"/><circle cx="1229.8" cy="246.5" r="1.6" fill="#f0a060"/></g><g opacity="0.97"><circle cx="823" cy="781" r="44.5" fill="none" stroke="#3cc8f4" stroke-width="3.3" opacity=".8"/><ellipse cx="823" cy="781" rx="45.8" ry="42.3" fill="none" stroke="#2a9df4" stroke-width="1.100" transform="rotate(-35 823 781)"/><ellipse cx="823" cy="781" rx="43.2" ry="46.3" fill="none" stroke="#59d3f7" stroke-width="1.300" transform="rotate(25 823 781)"/><ellipse cx="824" cy="782" rx="41.4" ry="44.1" fill="none" stroke="#2a9df4" stroke-width=".9" transform="rotate(70 823 781)"/><polygon points="793.6,759.4 823.0,763.0 814.1,773.9" fill="#9fd6f8"/><polygon points="823.0,763.0 832.3,786.7 814.1,773.9" fill="#7dbdf0"/><polygon points="793.6,759.4 814.1,773.9 807.2,786.7" fill="#8cc6f4"/><polygon points="814.1,773.9 832.3,786.7 807.2,786.7" fill="#5f9fd8"/><polygon points="832.3,786.7 855.3,794.6 843.0,797.0" fill="#a5dcf8"/><polygon points="832.3,786.7 843.0,797.0 843.8,809.7" fill="#7dbdf0"/><polygon points="843.0,797.0 855.3,794.6 843.8,809.7" fill="#5b95d6"/><circle cx="801.2" cy="765.0" r="2.2" fill="#f0a060"/></g><g opacity="0.97"><circle cx="1788" cy="781" r="44.5" fill="none" stroke="#3cc8f4" stroke-width="3.3" opacity=".8"/><ellipse cx="1788" cy="781" rx="45.8" ry="42.3" fill="none" stroke="#2a9df4" stroke-width="1.100" transform="rotate(-35 1788 781)"/><ellipse cx="1788" cy="781" rx="43.2" ry="46.3" fill="none" stroke="#59d3f7" stroke-width="1.300" transform="rotate(25 1788 781)"/><ellipse cx="1789" cy="782" rx="41.4" ry="44.1" fill="none" stroke="#2a9df4" stroke-width=".9" transform="rotate(70 1788 781)"/><polygon points="1758.6,759.4 1788.0,763.0 1779.1,773.9" fill="#9fd6f8"/><polygon points="1788.0,763.0 1797.3,786.7 1779.1,773.9" fill="#7dbdf0"/><polygon points="1758.6,759.4 1779.1,773.9 1772.2,786.7" fill="#8cc6f4"/><polygon points="1779.1,773.9 1797.3,786.7 1772.2,786.7" fill="#5f9fd8"/><polygon points="1797.3,786.7 1820.3,794.6 1808.0,797.0" fill="#a5dcf8"/><polygon points="1797.3,786.7 1808.0,797.0 1808.8,809.7" fill="#7dbdf0"/><polygon points="1808.0,797.0 1820.3,794.6 1808.8,809.7" fill="#5b95d6"/><circle cx="1766.2" cy="765.0" r="2.2" fill="#f0a060"/></g><text x="756" y="852" font-size="21" font-weight="bold" fill="#45a4ee" opacity=".9" style="font-family:'Liberation Serif',serif;font-style:italic" textLength="132">AbyssFish</text><text x="1717" y="852" font-size="21" font-weight="bold" fill="#45a4ee" opacity=".9" style="font-family:'Liberation Serif',serif;font-style:italic" textLength="132">AbyssFish</text><rect x="457" y="145" width="1445.5" height="807" fill="none" stroke="#6e6e6e" stroke-width="1.300"/><path d="M476.8 145V136M476.8 952V961" stroke="#6e6e6e" stroke-width="1.300"/><text x="477.8" y="973" font-size="14.67" fill="#1c1c1c">0</text><path d="M565.6 145V136M565.6 952V961" stroke="#6e6e6e" stroke-width="1.300"/><text x="566.6" y="973" font-size="14.67" fill="#1c1c1c">20</text><path d="M654.4 145V136M654.4 952V961" stroke="#6e6e6e" stroke-width="1.300"/><text x="655.4" y="973" font-size="14.67" fill="#1c1c1c">40</text><path d="M743.2 145V136M743.2 952V961" stroke="#6e6e6e" stroke-width="1.300"/><text x="744.2" y="973" font-size="14.67" fill="#1c1c1c">60</text><path d="M832.0 145V136M832.0 952V961" stroke="#6e6e6e" stroke-width="1.300"/><text x="833.0" y="973" font-size="14.67" fill="#1c1c1c">80</text><path d="M920.8 145V136M920.8 952V961" stroke="#6e6e6e" stroke-width="1.300"/><text x="921.8" y="973" font-size="14.67" fill="#1c1c1c">100</text><path d="M1009.6 145V136M1009.6 952V961" stroke="#6e6e6e" stroke-width="1.300"/><text x="1010.6" y="973" font-size="14.67" fill="#1c1c1c">120</text><path d="M1098.4 145V136M1098.4 952V961" stroke="#6e6e6e" stroke-width="1.300"/><text x="1099.4" y="973" font-size="14.67" fill="#1c1c1c">140</text><path d="M1187.2 145V136M1187.2 952V961" stroke="#6e6e6e" stroke-width="1.300"/><text x="1188.2" y="973" font-size="14.67" fill="#1c1c1c">160</text><path d="M1276.1 145V136M1276.1 952V961" stroke="#6e6e6e" stroke-width="1.300"/><text x="1277.1" y="973" font-size="14.67" fill="#1c1c1c">180</text><path d="M1364.9 145V136M1364.9 952V961" stroke="#6e6e6e" stroke-width="1.300"/><text x="1365.9" y="973" font-size="14.67" fill="#1c1c1c">200</text><path d="M1453.7 145V136M1453.7 952V961" stroke="#6e6e6e" stroke-width="1.300"/><text x="1454.7" y="973" font-size="14.67" fill="#1c1c1c">220</text><path d="M1542.5 145V136M1542.5 952V961" stroke="#6e6e6e" stroke-width="1.300"/><text x="1543.5" y="973" font-size="14.67" fill="#1c1c1c">240</text><path d="M1631.3 145V136M1631.3 952V961" stroke="#6e6e6e" stroke-width="1.300"/><text x="1632.3" y="973" font-size="14.67" fill="#1c1c1c">260</text><path d="M1720.1 145V136M1720.1 952V961" stroke="#6e6e6e" stroke-width="1.300"/><text x="1721.1" y="973" font-size="14.67" fill="#1c1c1c">280</text><path d="M1808.9 145V136M1808.9 952V961" stroke="#6e6e6e" stroke-width="1.300"/><text x="1809.9" y="973" font-size="14.67" fill="#1c1c1c">300</text><path d="M1897.7 145V136M1897.7 952V961" stroke="#6e6e6e" stroke-width="1.300"/><path d="M457 916.9H448M1902.5 916.9H1911.5" stroke="#6e6e6e" stroke-width="1.300"/><text x="446.500" y="929.2" font-size="14.67" fill="#1c1c1c" text-anchor="end">-10</text><path d="M457 872.5H448M1902.5 872.5H1911.5" stroke="#6e6e6e" stroke-width="1.300"/><text x="446.500" y="884.8" font-size="14.67" fill="#1c1c1c" text-anchor="end">0</text><path d="M457 828.1H448M1902.5 828.1H1911.5" stroke="#6e6e6e" stroke-width="1.300"/><text x="446.500" y="840.4" font-size="14.67" fill="#1c1c1c" text-anchor="end">10</text><path d="M457 783.7H448M1902.5 783.7H1911.5" stroke="#6e6e6e" stroke-width="1.300"/><text x="446.500" y="796.0" font-size="14.67" fill="#1c1c1c" text-anchor="end">20</text><path d="M457 739.3H448M1902.5 739.3H1911.5" stroke="#6e6e6e" stroke-width="1.300"/><text x="446.500" y="751.6" font-size="14.67" fill="#1c1c1c" text-anchor="end">30</text><path d="M457 694.9H448M1902.5 694.9H1911.5" stroke="#6e6e6e" stroke-width="1.300"/><text x="446.500" y="707.2" font-size="14.67" fill="#1c1c1c" text-anchor="end">40</text><path d="M457 650.5H448M1902.5 650.5H1911.5" stroke="#6e6e6e" stroke-width="1.300"/><text x="446.500" y="662.8" font-size="14.67" fill="#1c1c1c" text-anchor="end">50</text><path d="M457 606.1H448M1902.5 606.1H1911.5" stroke="#6e6e6e" stroke-width="1.300"/><text x="446.500" y="618.4" font-size="14.67" fill="#1c1c1c" text-anchor="end">60</text><path d="M457 561.7H448M1902.5 561.7H1911.5" stroke="#6e6e6e" stroke-width="1.300"/><text x="446.500" y="574.0" font-size="14.67" fill="#1c1c1c" text-anchor="end">70</text><path d="M457 517.3H448M1902.5 517.3H1911.5" stroke="#6e6e6e" stroke-width="1.300"/><text x="446.500" y="529.6" font-size="14.67" fill="#1c1c1c" text-anchor="end">80</text><path d="M457 472.8H448M1902.5 472.8H1911.5" stroke="#6e6e6e" stroke-width="1.300"/><text x="446.500" y="485.1" font-size="14.67" fill="#1c1c1c" text-anchor="end">90</text><path d="M457 428.4H448M1902.5 428.4H1911.5" stroke="#6e6e6e" stroke-width="1.300"/><text x="446.500" y="440.7" font-size="14.67" fill="#1c1c1c" text-anchor="end">100</text><path d="M457 384.0H448M1902.5 384.0H1911.5" stroke="#6e6e6e" stroke-width="1.300"/><text x="446.500" y="396.3" font-size="14.67" fill="#1c1c1c" text-anchor="end">110</text><path d="M457 339.6H448M1902.5 339.6H1911.5" stroke="#6e6e6e" stroke-width="1.300"/><text x="446.500" y="351.9" font-size="14.67" fill="#1c1c1c" text-anchor="end">120</text><path d="M457 295.2H448M1902.5 295.2H1911.5" stroke="#6e6e6e" stroke-width="1.300"/><text x="446.500" y="307.5" font-size="14.67" fill="#1c1c1c" text-anchor="end">130</text><path d="M457 250.8H448M1902.5 250.8H1911.5" stroke="#6e6e6e" stroke-width="1.300"/><text x="446.500" y="263.1" font-size="14.67" fill="#1c1c1c" text-anchor="end">140</text><path d="M457 206.4H448M1902.5 206.4H1911.5" stroke="#6e6e6e" stroke-width="1.300"/><text x="446.500" y="218.7" font-size="14.67" fill="#1c1c1c" text-anchor="end">150</text><path d="M457 162.0H448M1902.5 162.0H1911.5" stroke="#6e6e6e" stroke-width="1.300"/><text x="446.500" y="174.3" font-size="14.67" fill="#1c1c1c" text-anchor="end">160</text><text x="461" y="157" font-size="12.700">mm</text><text x="1897" y="947" font-size="12.700" text-anchor="end">mm</text><polygon points="453.400,957 464.600,957 459,951.600" fill="#000"/><polygon points="452,402 452,413 457,407.500" fill="#000"/><g><ellipse cx="11" cy="10" rx="10" ry="9" fill="#e9e9ec"/><rect x="5" y="4.500" width="12" height="9.500" rx="1.500" fill="#1d3fa6"/><polygon points="7,6 13,9.500 7,12.500" fill="#f2e24a"/><rect x="12" y="6" width="4" height="6" fill="#2a5cc8"/></g><path d="M33.7 3V19.5" stroke="#8a8a8a" stroke-width="1.4"/><path d="M47 4.500H55L59.500 9V20.500H47Z" fill="#fff" stroke="#8fbde6" stroke-width="1.200"/><path d="M55 4.500V9H59.500" fill="none" stroke="#8fbde6" stroke-width="1.200"/><path d="M74 18V6H80L81.500 8H87V10.500H78.500L74.800 18Z" fill="#3488cc"/><path d="M75.500 18L79 11.500H92L88 18Z" fill="#3488cc"/><path d="M103.5 5.500H119.0V20H105.5L103.5 18Z" fill="#e8f1fb" stroke="#8fbde6" stroke-width="1.200"/><path d="M106.0 5.500V12H116.5V5.500" fill="#fff" stroke="#8fbde6" stroke-width="1.100"/><path d="M108.5 20V16H115.5V20" fill="#fff" stroke="#8fbde6" stroke-width="1.100"/><path d="M132.5 5.500H148.0V20H134.5L132.5 18Z" fill="#e8f1fb" stroke="#8fbde6" stroke-width="1.200"/><path d="M135.0 5.500V12H145.5V5.500" fill="#fff" stroke="#8fbde6" stroke-width="1.100"/><path d="M137.5 20V16H144.5V20" fill="#fff" stroke="#8fbde6" stroke-width="1.100"/><path d="M138.500 10L141 9L148.500 17.500L146.500 19.500Z" fill="#3488cc"/><polygon points="165,8 174,12.800 165,17.600" fill="#a6a6a6"/><path d="M193 10H200.500A5 5 0 0 1 200.500 19.500H198.500" fill="none" stroke="#3488cc" stroke-width="1.800"/><polygon points="189,10 195.500,5 195.500,15" fill="#3488cc"/><path d="M231 10H223.500A5 5 0 0 0 223.500 19.500H225.500" fill="none" stroke="#a6a6a6" stroke-width="1.800"/><polygon points="235,10 228.500,5 228.500,15" fill="#a6a6a6"/><rect x="247.500" y="5.500" width="9" height="11" fill="#f4f4f4" stroke="#c4c4c4"/><rect x="254.500" y="8.500" width="9" height="11.500" fill="#fff" stroke="#8a8a8a"/><path d="M256.500 12H261.500M256.500 14.500H261.500M256.500 17H261.500" stroke="#a6a6a6" stroke-width="1.300"/><path d="M249.500 9H254M249.500 11.500H254" stroke="#ccc" stroke-width="1.200"/><rect x="276.500" y="6" width="11.500" height="12.500" rx="1" fill="#dcdcdc" stroke="#c9c9c9"/><rect x="279.500" y="4" width="5.500" height="3" rx="1" fill="#eee" stroke="#c9c9c9"/><rect x="283" y="11" width="9.500" height="10" fill="#fff" stroke="#cfcfcf"/><rect x="305.500" y="5.500" width="9" height="11.500" fill="#fff" stroke="#c4c4c4"/><rect x="313" y="8.500" width="8.500" height="11.500" fill="#fff" stroke="#c4c4c4"/><path d="M308 13.500H317" stroke="#a6a6a6" stroke-width="2"/><polygon points="320,13.500 316,10.500 316,16.500" fill="#a6a6a6"/><path d="M337.500 7H348L347.300 20.500H338.200Z" fill="#a6a6a6"/><path d="M337 5.800H348.500" stroke="#a6a6a6" stroke-width="1.300"/><path d="M342 4.500H343.500" stroke="#a6a6a6" stroke-width="1.300"/><path d="M340.300 8.500V19M342.800 8.500V19M345.300 8.500V19" stroke="#d8d8d8" stroke-width=".9"/><rect x="364.500" y="5.500" width="15" height="15" fill="none" stroke="#4c9ad8" stroke-width="1" stroke-dasharray="2.500 1.500"/><rect x="367.500" y="8.500" width="9" height="9" fill="#5b9bd9" stroke="#3488cc"/><path d="M373.500 13L380 15.500L378 16.500L382 20.500L380.500 21.500L377 17.500L375.500 19.500Z" fill="#3488cc"/><rect x="393.500" y="5.500" width="15" height="15" fill="none" stroke="#4c9ad8" stroke-width="1" stroke-dasharray="2.500 1.500"/><rect x="396.500" y="8.500" width="9" height="9" fill="#8bb4e4" stroke="#5b9bd9"/><path d="M393.500 4L400.500 15" stroke="#777" stroke-width="1.600"/><path d="M399 14L403.500 15.500L404.500 21.500L398 22L395.500 18.500Z" fill="#f4b870"/><rect x="421.500" y="4.500" width="11" height="12.500" fill="#fff" stroke="#a6a6a6"/><path d="M423.500 8H430.500M423.500 10.500H430.500M423.500 13H428" stroke="#a6a6a6" stroke-width="1"/><circle cx="431" cy="15.500" r="3.300" fill="#eaf3fc" stroke="#3488cc" stroke-width="1.300"/><path d="M433.500 18L437.500 21.500" stroke="#3488cc" stroke-width="2"/><polygon points="447,11 453.5,11 450.25,15" fill="#111"/><path d="M461 3V19.5" stroke="#8a8a8a" stroke-width="1.4"/><path d="M1766 11.500H1778" stroke="#111" stroke-width="1.100"/><rect x="1824.500" y="8.500" width="9" height="9" rx="1.500" fill="none" stroke="#111" stroke-width="1.100"/><path d="M1827 8.500V7.500Q1827 6.500 1828 6.500H1835Q1836.500 6.500 1836.500 8V15Q1836.500 16 1835.500 16H1834" fill="none" stroke="#111" stroke-width="1.100"/><path d="M1883 5.500L1895 17.500M1895 5.500L1883 17.500" stroke="#111" stroke-width="1.200"/><rect x="1897" y="35" width="13.500" height="13.500" rx="1" fill="#3488cc"/><text x="1903.800" y="46" font-size="11" font-weight="bold" fill="#fff" text-anchor="middle" style="font-family:'Liberation Sans',sans-serif">?</text><path d="M49 115H60" stroke="#3488cc" stroke-width="1.300"/><polygon points="45,115 51,112 51,118" fill="#3488cc"/><path d="M72 115H83" stroke="#a6a6a6" stroke-width="1.200"/><polygon points="87,115 81.500,112.3 81.500,117.7" fill="#a6a6a6"/><path d="M104.500 122V111" stroke="#a6a6a6" stroke-width="1.200"/><polygon points="104.500,107 101.800,112.5 107.200,112.5" fill="#a6a6a6"/><path d="M130.500 108V119" stroke="#a6a6a6" stroke-width="1.200"/><polygon points="130.500,123 127.800,117.5 133.200,117.5" fill="#a6a6a6"/><path d="M151 109H163" stroke="#3488cc" stroke-width="1.600"/><ellipse cx="157" cy="114.5" rx="5.500" ry="3" fill="none" stroke="#3488cc" stroke-width="1.300"/><circle cx="157" cy="114.5" r="1.600" fill="#3488cc"/><path d="M173 108.0H185" stroke="#3488cc" stroke-width="1.500"/><path d="M173 110.7H185" stroke="#3488cc" stroke-width="1.500"/><path d="M173 113.4H185" stroke="#3488cc" stroke-width="1.500"/><path d="M173 116.1H185" stroke="#3488cc" stroke-width="1.500"/><path d="M173 118.8H185" stroke="#3488cc" stroke-width="1.500"/><path d="M173 121.5H185" stroke="#3488cc" stroke-width="1.500"/><path d="M172.500 107V110" stroke="#3488cc" stroke-width="1.200"/><path d="M189.500 122V111" stroke="#3488cc" stroke-width="1.400"/><polygon points="189.500,106.5 186.500,112 192.500,112" fill="#3488cc"/><polygon points="201,113 209.5,113 205.25,117.5" fill="#111"/><path d="M221 108.0H233" stroke="#3488cc" stroke-width="1.500"/><path d="M221 110.7H233" stroke="#3488cc" stroke-width="1.500"/><path d="M221 113.4H233" stroke="#3488cc" stroke-width="1.500"/><path d="M221 116.1H233" stroke="#3488cc" stroke-width="1.500"/><path d="M221 118.8H233" stroke="#3488cc" stroke-width="1.500"/><path d="M221 121.5H233" stroke="#3488cc" stroke-width="1.500"/><path d="M237.500 107V118" stroke="#3488cc" stroke-width="1.400"/><polygon points="237.500,123 234.500,117.5 240.500,117.5" fill="#3488cc"/><polygon points="249,113 257.5,113 253.25,117.5" fill="#111"/><path d="M270 108.0H275" stroke="#9a9a9a" stroke-width="1.500"/><path d="M270 110.7H275" stroke="#9a9a9a" stroke-width="1.500"/><path d="M270 113.4H275" stroke="#9a9a9a" stroke-width="1.500"/><path d="M270 116.1H275" stroke="#9a9a9a" stroke-width="1.500"/><path d="M270 118.8H275" stroke="#9a9a9a" stroke-width="1.500"/><path d="M270 121.5H275" stroke="#9a9a9a" stroke-width="1.500"/><path d="M277 108.0H286" stroke="#b5b5b5" stroke-width="1.500"/><path d="M277 110.7H286" stroke="#b5b5b5" stroke-width="1.500"/><path d="M277 113.4H286" stroke="#b5b5b5" stroke-width="1.500"/><path d="M277 116.1H286" stroke="#b5b5b5" stroke-width="1.500"/><path d="M277 118.8H286" stroke="#b5b5b5" stroke-width="1.500"/><path d="M277 121.5H286" stroke="#b5b5b5" stroke-width="1.500"/><polygon points="296,113 304.5,113 300.25,117.5" fill="#111"/><polygon points="355,82 365,82 360.0,87.5" fill="#3488cc"/><path d="M374.5 79H379.5V84.5L381 87H373L374.5 84.5Z" fill="#3488cc"/><path d="M377 87V91" stroke="#3488cc" stroke-width="1.200"/><circle cx="410" cy="118.5" r="5" fill="#f4f9fe" stroke="#3488cc" stroke-width="1.300"/><path d="M413.5 122.0L418.5 127.0" stroke="#3488cc" stroke-width="1.800"/><path d="M407.5 118.5H412.5" stroke="#3488cc" stroke-width="1.100"/><path d="M410 116.0V121.0" stroke="#3488cc" stroke-width="1.100"/><circle cx="436" cy="118.5" r="5" fill="#f4f9fe" stroke="#3488cc" stroke-width="1.300"/><path d="M439.5 122.0L444.5 127.0" stroke="#3488cc" stroke-width="1.800"/><path d="M433.5 118.5H438.5" stroke="#3488cc" stroke-width="1.100"/><path d="M453.500 119V127.500H462" fill="none" stroke="#3488cc" stroke-width="1" stroke-dasharray="2 1.300"/><circle cx="465" cy="118" r="5" fill="#f4f9fe" stroke="#3488cc" stroke-width="1.300"/><path d="M468.5 121.5L473.5 126.5" stroke="#3488cc" stroke-width="1.800"/><path d="M462.5 118H467.5" stroke="#3488cc" stroke-width="1.100"/><path d="M465 115.5V120.5" stroke="#3488cc" stroke-width="1.100"/><polygon points="481,118.5 489.5,118.5 485.25,123.0" fill="#111"/><rect x="505.500" y="114.5" width="10" height="10" rx="1.500" fill="#fff" stroke="#8a8a8a" stroke-width="1.100"/><path d="M510.500 117V122M508 119.5H513" stroke="#8a8a8a" stroke-width="1"/><polygon points="510.500,110 508,113 513,113" fill="#3488cc"/><polygon points="510.500,129 508,126 513,126" fill="#3488cc"/><polygon points="500.500,119.5 503.500,117 503.500,122" fill="#3488cc"/><polygon points="520.500,119.5 517.500,117 517.500,122" fill="#3488cc"/><path d="M527.500 127V111H546" fill="none" stroke="#9c9c9c" stroke-width="1"/><path d="M536.500 113V128M529 120H544" stroke="#3488cc" stroke-width="1"/><polygon points="536.500,111 534.500,114 538.500,114" fill="#3488cc"/><polygon points="536.500,130 534.500,127 538.500,127" fill="#3488cc"/><polygon points="527.500,120 530.500,118 530.500,122" fill="#3488cc"/><polygon points="545.500,120 542.500,118 542.500,122" fill="#3488cc"/><path d="M556.5 110V130" stroke="#c8c8c8" stroke-width="1"/><path d="M571.500 124V113" stroke="#3488cc" stroke-width="1.200"/><polygon points="571.500,110 569.500,113.5 573.500,113.5" fill="#3488cc"/><path d="M571.500 124L564 118" stroke="#4caf50" stroke-width="1.200"/><path d="M571.500 124L582 119.5" stroke="#e0457b" stroke-width="1.200"/><polygon points="583.500,118.8 579.500,118.8 581,122" fill="#e0457b"/><polygon points="591,118.5 599.5,118.5 595.25,123.0" fill="#111"/><path d="M613.5 110V130" stroke="#c8c8c8" stroke-width="1"/><rect x="622" y="114.5" width="18" height="11.500" rx="4.500" fill="#3488cc"/><polygon points="650,118.5 658.5,118.5 654.25,123.0" fill="#111"/><path d="M673.5 110V130" stroke="#c8c8c8" stroke-width="1"/><path d="M682 117H696Q698 117 698 120V122Q698 125.5 694 125.5H684Q680 125.5 680 122V120Q680 117 682 117Z" fill="#d9d9d9" stroke="#bdbdbd" stroke-width=".8"/><rect x="684.5" y="111.5" width="9" height="6.500" fill="#e6f0fb" stroke="#8fbde6" stroke-width="1"/><rect x="686.5" y="113" width="5" height="3" fill="#5b9bd9"/><polygon points="707,118.5 715.5,118.5 711.25,123.0" fill="#111"/><path d="M730 117H744Q746 117 746 120V122Q746 125.5 742 125.5H732Q728 125.5 728 122V120Q728 117 730 117Z" fill="#3488cc" stroke="#3488cc" stroke-width=".8"/><rect x="732.5" y="111.5" width="9" height="6.500" fill="#e6f0fb" stroke="#8fbde6" stroke-width="1"/><rect x="734.5" y="113" width="5" height="3" fill="#fff"/><polygon points="755,118.5 763.5,118.5 759.25,123.0" fill="#111"/><rect x="777.500" y="111.5" width="14" height="14" fill="none" stroke="#4c9ad8" stroke-width="1" stroke-dasharray="2.500 1.500"/><rect x="780.500" y="114.5" width="8" height="8" fill="#5b9bd9" stroke="#3488cc"/><path d="M786 119.5L792 122L790 123L794 127L792.500 128L789 124L787.500 126Z" fill="#3488cc"/><rect x="804.500" y="111.5" width="14" height="14" fill="none" stroke="#4c9ad8" stroke-width="1" stroke-dasharray="2.500 1.500"/><rect x="807.500" y="114.5" width="8" height="8" fill="#8bb4e4" stroke="#5b9bd9"/><path d="M803.500 110L810.500 121" stroke="#777" stroke-width="1.500"/><path d="M809 120L813.500 121.5L814.500 127.5L808 128L805.500 124.5Z" fill="#f4b870"/><path d="M830.5 110V130" stroke="#c8c8c8" stroke-width="1"/><ellipse cx="846.500" cy="119.5" rx="5.500" ry="3" fill="none" stroke="#3488cc" stroke-width="1.200"/><circle cx="846.500" cy="119.5" r="1.400" fill="#3488cc"/><path d="M842 115.5L851 123.5" stroke="#3488cc" stroke-width="1.300"/><path d="M868 113A4.500 4.500 0 1 1 872.500 119.5" fill="none" stroke="#3488cc" stroke-width="1.300"/><polygon points="866,110.5 870.500,112 867,115.5" fill="#3488cc"/><ellipse cx="867" cy="125.5" rx="4" ry="2.300" fill="none" stroke="#3488cc" stroke-width="1.100"/><circle cx="867" cy="125.5" r="1" fill="#3488cc"/><ellipse cx="878" cy="125.5" rx="4" ry="2.300" fill="none" stroke="#3488cc" stroke-width="1.100"/><path d="M874.500 123L881.500 128" stroke="#3488cc" stroke-width="1.100"/><rect x="890.500" y="112.5" width="16" height="13" fill="#fff" stroke="#8fbde6" stroke-width="1"/><path d="M890.500 115H906.500" stroke="#8fbde6" stroke-width="1.500"/><ellipse cx="898.500" cy="120.5" rx="4.500" ry="2.500" fill="none" stroke="#3488cc" stroke-width="1.100"/><circle cx="898.500" cy="120.5" r="1.300" fill="#3488cc"/><polygon points="917,118.5 925.5,118.5 921.25,123.0" fill="#111"/><path d="M940.5 110V130" stroke="#c8c8c8" stroke-width="1"/><rect x="944.500" y="108.5" width="23" height="23" rx="2" fill="#cfe6fa" stroke="#4da3e8" stroke-width="1"/><rect x="949.500" y="113.5" width="13" height="13" fill="#9cc3ea" stroke="#3488cc" stroke-width="1"/><path d="M954 113.5V126.5M958 113.5V126.5M949.500 118H962.500M949.500 122H962.500" stroke="#3488cc" stroke-width=".8"/><path d="M976.5 110V130" stroke="#c8c8c8" stroke-width="1"/><path d="M984 112H998L1002 115.5V120.5H988L984 117Z" fill="#cfcfcf" stroke="#b5b5b5" stroke-width=".7"/><rect x="988" y="115.5" width="14" height="5" fill="#6faee6"/><circle cx="995" cy="125.5" r="3.200" fill="#fff" stroke="#e0455b" stroke-width="1.200"/><path d="M992.800 127.7L997.200 123.3" stroke="#e0455b" stroke-width="1.100"/><path d="M1019 111C1024 111 1028 115 1027.500 120C1027 125 1023 128 1018 128C1013 128 1010.500 125 1011 121C1011.500 118 1015 118 1015 115C1015 112 1017 111 1019 111Z" fill="#dcdcdc" stroke="#a9a9a9" stroke-width=".9"/><circle cx="1021.500" cy="115.5" r="1.600" fill="#5b9bd9"/><circle cx="1024" cy="120" r="1.600" fill="#f0a030"/><circle cx="1021.500" cy="124" r="1.600" fill="#e0455b"/><circle cx="1016" cy="124" r="1.600" fill="#e0455b"/><polygon points="1036,118.5 1044.5,118.5 1040.25,123.0" fill="#111"/><path d="M1060.5 110V130" stroke="#c8c8c8" stroke-width="1"/><path d="M1085.5 120.0A8.500 8.500 0 0 1 1082.2 126.7L1076.2 123.5Z" fill="#3488cc"/><path d="M1081.2 127.4A8.500 8.500 0 0 1 1073.8 127.9L1073.5 121.0Z" fill="#3488cc"/><path d="M1072.8 127.4A8.500 8.500 0 0 1 1068.6 121.2L1074.4 117.5Z" fill="#3488cc"/><path d="M1068.5 120.0A8.500 8.500 0 0 1 1071.8 113.3L1077.8 116.5Z" fill="#3488cc"/><path d="M1072.8 112.6A8.500 8.500 0 0 1 1080.2 112.1L1080.5 119.0Z" fill="#3488cc"/><path d="M1081.2 112.6A8.500 8.500 0 0 1 1085.4 118.8L1079.6 122.5Z" fill="#3488cc"/><polygon points="1095,118.5 1103.5,118.5 1099.25,123.0" fill="#111"/><path d="M1116.500 115.5H1120L1121.500 113H1127L1128.500 115.5H1132V126H1116.500Z" fill="#3488cc"/><circle cx="1124.300" cy="120.5" r="3.300" fill="#fff"/><circle cx="1124.300" cy="120.5" r="1.900" fill="#3488cc"/><rect x="1145.500" y="110.5" width="11" height="6" fill="#fff" stroke="#8fbde6" stroke-width="1.100"/><rect x="1142.500" y="116" width="17" height="8.500" rx="1.500" fill="#cfe2f5" stroke="#8fbde6" stroke-width="1.100"/><rect x="1145.500" y="121.5" width="11" height="7" fill="#fff" stroke="#8fbde6" stroke-width="1.100"/><polygon points="1884,85 1894,85 1889.0,90.5" fill="#555"/><path d="M1904.5 81H1909.5V86.5L1911 89H1903L1904.5 86.5Z" fill="#555"/><path d="M1907 89V93" stroke="#555" stroke-width="1.200"/><g><polygon points="1879,156 1892,151 1897,160 1889,168 1881,165" fill="#efeff2"/><rect x="1882.500" y="154.500" width="11" height="9" rx="1.500" fill="#1d3fa6"/><polygon points="1884,156 1890,159 1884,162" fill="#f2e24a"/><rect x="1889.500" y="156" width="3.500" height="5.500" fill="#2a5cc8"/></g></svg></body></html>
